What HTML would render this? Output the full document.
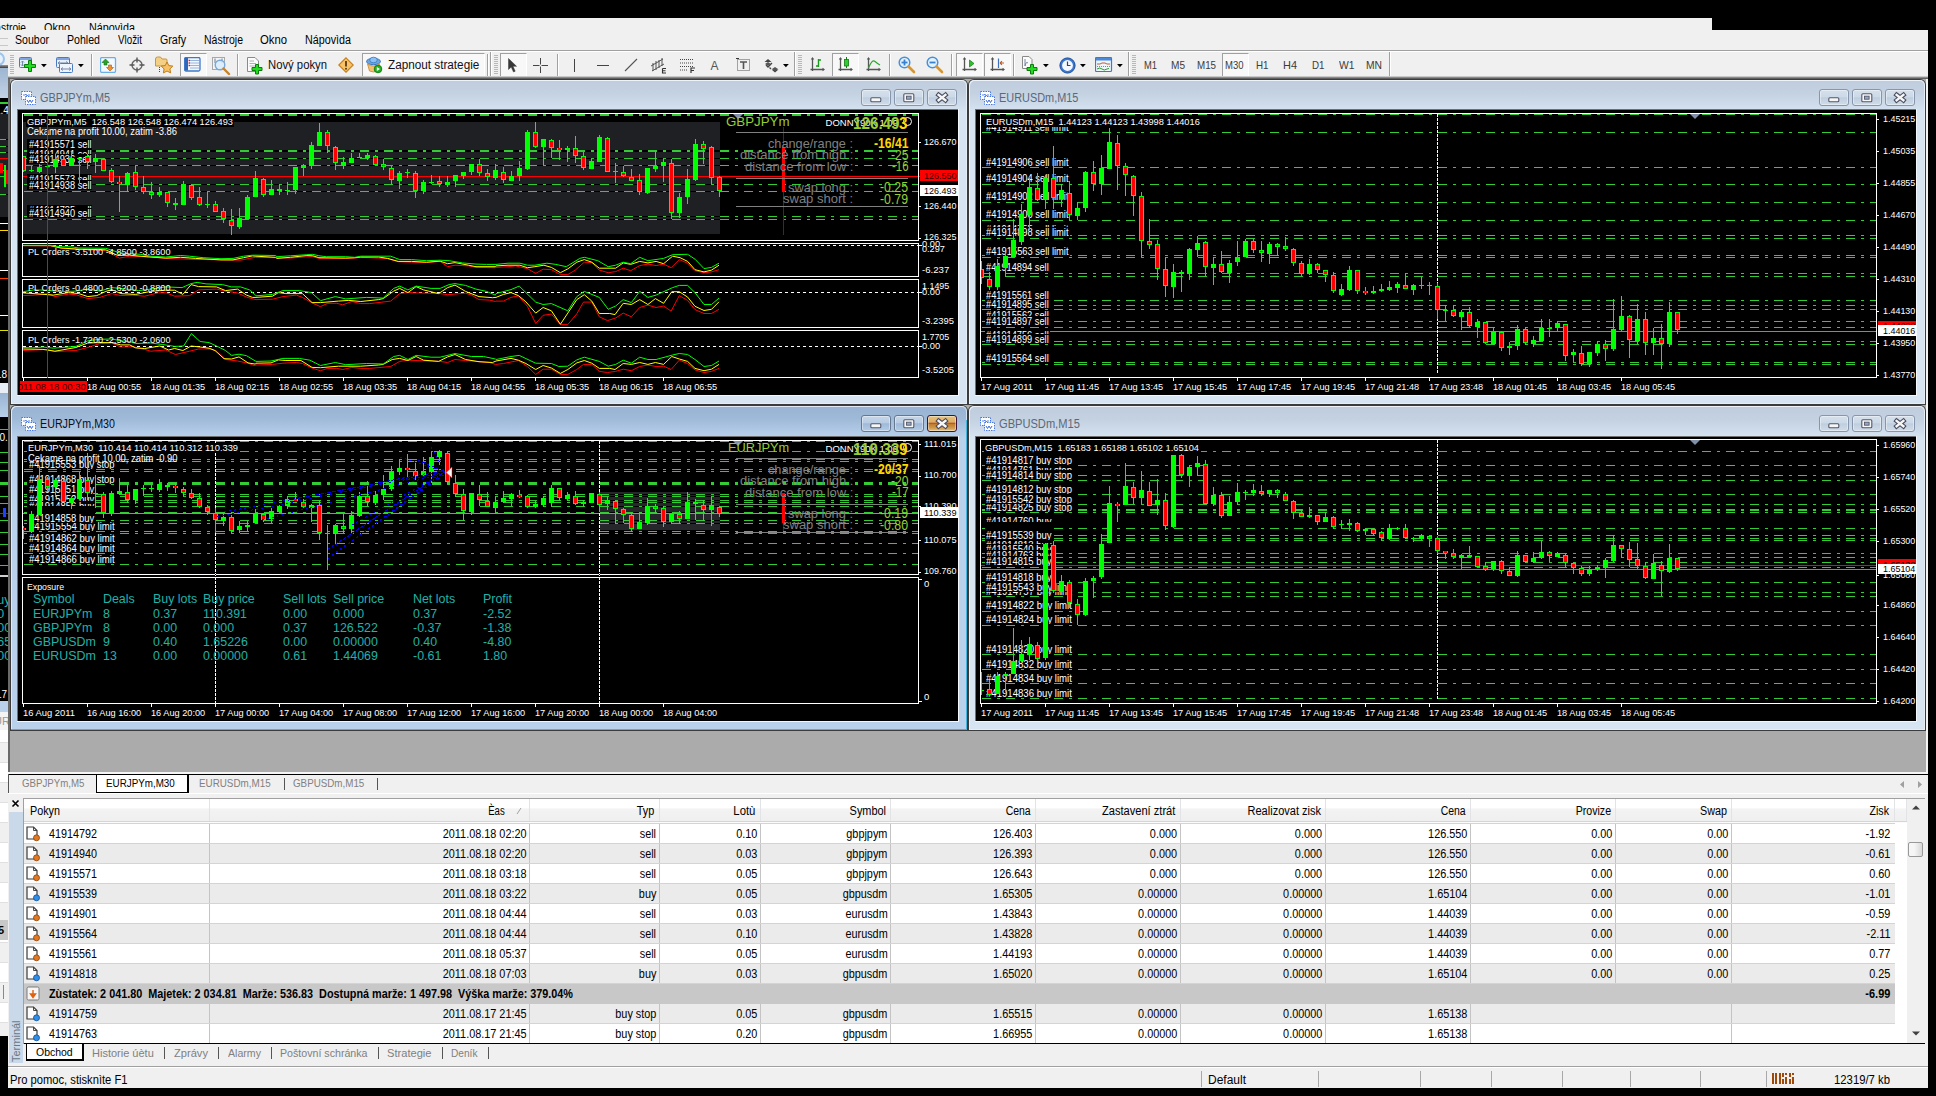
<!DOCTYPE html>
<html><head><meta charset="utf-8"><title>MT4</title>
<style>
html,body{margin:0;padding:0;background:#000;}
body{width:1936px;height:1096px;position:relative;overflow:hidden;font-family:"Liberation Sans",sans-serif;}
body div, body svg{position:absolute;box-sizing:border-box;}
svg{overflow:hidden;display:block}
</style></head><body>
<div style="left:0px;top:0px;width:1936px;height:1096px;background:#000;"></div>
<div style="left:0px;top:18px;width:1712px;height:12px;background:#f0f0f0;"></div>
<div style="left:0;top:18px;width:1712px;height:12px;overflow:hidden">
<div style="top:3px;height:14px;line-height:14px;font-size:12px;color:#000;white-space:pre;left:-12.00px;transform-origin:0 50%;transform:scaleX(0.8504);">Nástroje</div>
<div style="top:3px;height:14px;line-height:14px;font-size:12px;color:#000;white-space:pre;left:44.00px;transform-origin:0 50%;transform:scaleX(0.9065);">Okno</div>
<div style="top:3px;height:14px;line-height:14px;font-size:12px;color:#000;white-space:pre;left:89.00px;transform-origin:0 50%;transform:scaleX(0.8955);">Nápovìda</div>
</div>
<div style="left:0px;top:30px;width:8px;height:1058px;background:#f0f0f0;"></div>
<div style="left:8px;top:30px;width:1920px;height:1058px;background:#f0f0f0;"></div>
<div style="top:33px;height:14px;line-height:14px;font-size:12px;color:#000;white-space:pre;left:15.00px;transform-origin:0 50%;transform:scaleX(0.8787);">Soubor</div>
<div style="top:33px;height:14px;line-height:14px;font-size:12px;color:#000;white-space:pre;left:67.00px;transform-origin:0 50%;transform:scaleX(0.8832);">Pohled</div>
<div style="top:33px;height:14px;line-height:14px;font-size:12px;color:#000;white-space:pre;left:118.00px;transform-origin:0 50%;transform:scaleX(0.8179);">Vložit</div>
<div style="top:33px;height:14px;line-height:14px;font-size:12px;color:#000;white-space:pre;left:160.00px;transform-origin:0 50%;transform:scaleX(0.8862);">Grafy</div>
<div style="top:33px;height:14px;line-height:14px;font-size:12px;color:#000;white-space:pre;left:204.00px;transform-origin:0 50%;transform:scaleX(0.8728);">Nástroje</div>
<div style="top:33px;height:14px;line-height:14px;font-size:12px;color:#000;white-space:pre;left:260.00px;transform-origin:0 50%;transform:scaleX(0.9414);">Okno</div>
<div style="top:33px;height:14px;line-height:14px;font-size:12px;color:#000;white-space:pre;left:305.00px;transform-origin:0 50%;transform:scaleX(0.8955);">Nápovìda</div>
<div style="left:8px;top:50px;width:1920px;height:1px;background:#a0a0a0;"></div>
<div style="left:8px;top:51px;width:1920px;height:1px;background:#fff;"></div>
<div style="left:10px;top:55px;width:4px;height:1px;background:#b8b8b8;"></div>
<div style="left:10px;top:57px;width:4px;height:1px;background:#b8b8b8;"></div>
<div style="left:10px;top:59px;width:4px;height:1px;background:#b8b8b8;"></div>
<div style="left:10px;top:61px;width:4px;height:1px;background:#b8b8b8;"></div>
<div style="left:10px;top:63px;width:4px;height:1px;background:#b8b8b8;"></div>
<div style="left:10px;top:65px;width:4px;height:1px;background:#b8b8b8;"></div>
<div style="left:10px;top:67px;width:4px;height:1px;background:#b8b8b8;"></div>
<div style="left:10px;top:69px;width:4px;height:1px;background:#b8b8b8;"></div>
<div style="left:10px;top:71px;width:4px;height:1px;background:#b8b8b8;"></div>
<div style="left:10px;top:73px;width:4px;height:1px;background:#b8b8b8;"></div>
<svg style="left:19px;top:57px" width="18" height="17" viewBox="0 0 18 17"><rect x="0.5" y="0.5" width="12" height="10" rx="1" fill="#e4eefc" stroke="#4a7ac0"/><rect x="1" y="1" width="11" height="2" fill="#7fa6e0"/><path d="M3.5 4 V9 M2 5.5 L3.5 4 L5 5.5 M2 7.5 L3.5 9 L5 7.5" stroke="#7888a8" fill="none" stroke-width="1"/><path d="M8.5 5 h4 v-0 M10 3.5" stroke="none"/><path d="M9.5 3.5 h3 v4 h4 v3 h-4 v4 h-3 v-4 h-4 v-3 h4 z" fill="#1fdc1f" stroke="#0d7a0d" stroke-width="1"/></svg>
<svg style="left:41px;top:64px" width="6" height="4" viewBox="0 0 6 4"><path d="M0 0 L5.8 0 L2.9 3.3 Z" fill="#000"/></svg>
<svg style="left:56px;top:57px" width="18" height="17" viewBox="0 0 18 17"><rect x="0.5" y="0.5" width="13" height="10" rx="1" fill="#e4eefc" stroke="#4a7ac0"/><rect x="1" y="1" width="12" height="2" fill="#7fa6e0"/><path d="M2 6 H12 M2 6 l2 -1.5 M2 6 l2 1.5 M12 6 l-2 -1.5 M12 6 l-2 1.5" stroke="#7888a8" fill="none"/><rect x="3.5" y="6.5" width="13" height="9" rx="1" fill="#eef4fd" stroke="#4a7ac0"/><path d="M5 12 H15 M5 12 l2 -1.5 M5 12 l2 1.5 M15 12 l-2 -1.5 M15 12 l-2 1.5" stroke="#7888a8" fill="none"/></svg>
<svg style="left:78px;top:64px" width="6" height="4" viewBox="0 0 6 4"><path d="M0 0 L5.8 0 L2.9 3.3 Z" fill="#000"/></svg>
<div style="left:91px;top:54px;width:1px;height:22px;background:#a0a0a0;"></div>
<div style="left:92px;top:54px;width:1px;height:22px;background:#ffffff;"></div>
<svg style="left:100px;top:57px" width="17" height="16" viewBox="0 0 17 16"><rect x="0.5" y="0.5" width="15" height="15" rx="1.5" fill="#f4f9ff" stroke="#6ab0e8" stroke-width="1.3"/><path d="M5.5 2 L9 5.5 H7 V8 H4 V5.5 H2 Z" fill="#28a428" stroke="#157015" stroke-width=".6"/><path d="M10 14 L6.5 10.5 H8.5 V8 H11.5 V10.5 H13.5 Z" fill="#f09030" stroke="#a85a10" stroke-width=".6"/></svg>
<svg style="left:129px;top:57px" width="16" height="16" viewBox="0 0 16 16"><circle cx="8" cy="8" r="5" fill="none" stroke="#666" stroke-width="1.4"/><path d="M8 0.5 V5.5 M8 10.5 V15.5 M0.5 8 H5.5 M10.5 8 H15.5" stroke="#555" stroke-width="1.4"/></svg>
<svg style="left:155px;top:56px" width="19" height="18" viewBox="0 0 19 18"><path d="M0.5 3 q0 -2 2 -2 h3 l1.5 2 h4 q1 0 1 1 v6 h-11.5 z" fill="#f4cf86" stroke="#c8963c" stroke-width="1"/><path d="M12 6 l1.8 3.6 4 .5 -2.9 2.8 .7 4 -3.6 -1.9 -3.6 1.9 .7 -4 -2.9 -2.8 4 -.5 z" fill="#f6c265" stroke="#c07c1c" stroke-width="1"/><path d="M4.5 11 V17" stroke="#444" stroke-dasharray="1 1"/></svg>
<div style="left:180px;top:53px;width:25px;height:22px;background:#f8f8f8;border-left:1px solid #a0a0a0;border-top:1px solid #a0a0a0;border-right:1px solid #fff;border-bottom:1px solid #fff;box-sizing:content-box"></div>
<svg style="left:184px;top:57px" width="17" height="15" viewBox="0 0 17 15"><rect x="0.5" y="0.5" width="15.5" height="13.5" rx="1.5" fill="#f2f7ff" stroke="#3e78c8" stroke-width="1.3"/><rect x="1" y="1" width="3" height="12.5" fill="#3068b8"/><path d="M6 3.5 H15 M6 6 H15 M6 8.5 H15 M6 11 H15" stroke="#9ab4d8" stroke-width="1"/><rect x="4.6" y="2.8" width="1.4" height="1.4" fill="#e02020"/><rect x="4.6" y="5.3" width="1.4" height="1.4" fill="#e02020"/><rect x="4.6" y="7.8" width="1.4" height="1.4" fill="#e02020"/></svg>
<svg style="left:212px;top:57px" width="19" height="18" viewBox="0 0 19 18"><rect x="0.5" y="0.5" width="12" height="12" fill="#f4f4f4" stroke="#a8a8a8"/><path d="M3 1.5 V6 M10 1.5 V6" stroke="#6a7a9a"/><circle cx="8" cy="8" r="4.8" fill="#d8ecfa" fill-opacity=".85" stroke="#78a8d8" stroke-width="1.4"/><path d="M11.5 11.5 L17 17" stroke="#c8842c" stroke-width="2.4" stroke-linecap="round"/></svg>
<div style="left:237px;top:54px;width:1px;height:22px;background:#a0a0a0;"></div>
<div style="left:238px;top:54px;width:1px;height:22px;background:#ffffff;"></div>
<svg style="left:247px;top:57px" width="17" height="18" viewBox="0 0 17 18"><path d="M0.5 0.5 H8 L11.5 4 V14.5 H0.5 Z" fill="#fbfbfb" stroke="#8a8a8a"/><path d="M2.5 4 H7 M2.5 6.5 H9 M2.5 9 H9" stroke="#b0b0b0"/><path d="M8.5 7.5 h3 v3 h3.5 v3 h-3.5 v3.5 h-3 v-3.5 h-3.5 v-3 h3.5 z" fill="#1fdc1f" stroke="#0d7a0d"/></svg>
<div style="top:58px;height:14px;line-height:14px;font-size:12px;color:#101018;white-space:pre;left:268.20px;transform-origin:0 50%;transform:scaleX(0.9411);">Nový pokyn</div>
<svg style="left:338px;top:57px" width="16" height="16" viewBox="0 0 16 16"><path d="M8 0.8 L15.2 8 L8 15.2 L0.8 8 Z" fill="#f7c46c" stroke="#c8801c" stroke-width="1.2"/><path d="M8 4 V9.5" stroke="#5a3a10" stroke-width="1.8"/><circle cx="8" cy="11.8" r="1" fill="#5a3a10"/></svg>
<div style="left:362px;top:53px;width:121px;height:22px;background:#f8f8f8;border-left:1px solid #a0a0a0;border-top:1px solid #a0a0a0;border-right:1px solid #fff;border-bottom:1px solid #fff;box-sizing:content-box"></div>
<svg style="left:366px;top:56px" width="17" height="18" viewBox="0 0 17 18"><ellipse cx="7.5" cy="5.5" rx="7" ry="3.2" fill="#6aa6e4" stroke="#3a78c0"/><ellipse cx="7.5" cy="4" rx="3.8" ry="2.8" fill="#8cc0f0" stroke="#3a78c0" stroke-width=".8"/><path d="M1.5 8 Q7.5 12 13.5 8 L11.5 15 Q7.5 17 3.5 15 Z" fill="#f4c070" stroke="#c88830" stroke-width=".8"/><circle cx="12" cy="13" r="3.8" fill="#22b022" stroke="#0a700a" stroke-width=".8"/><path d="M10.8 11 L14 13 L10.8 15 Z" fill="#fff"/></svg>
<div style="top:58px;height:14px;line-height:14px;font-size:12px;color:#101018;white-space:pre;left:388.40px;transform-origin:0 50%;transform:scaleX(0.9776);">Zapnout strategie</div>
<div style="left:487px;top:54px;width:1px;height:22px;background:#a0a0a0;"></div>
<div style="left:488px;top:54px;width:1px;height:22px;background:#ffffff;"></div>
<div style="left:490px;top:52px;width:1px;height:26px;background:#a0a0a0;"></div>
<div style="left:491px;top:52px;width:1px;height:26px;background:#fff;"></div>
<div style="left:494px;top:55px;width:4px;height:1px;background:#b8b8b8;"></div>
<div style="left:494px;top:57px;width:4px;height:1px;background:#b8b8b8;"></div>
<div style="left:494px;top:59px;width:4px;height:1px;background:#b8b8b8;"></div>
<div style="left:494px;top:61px;width:4px;height:1px;background:#b8b8b8;"></div>
<div style="left:494px;top:63px;width:4px;height:1px;background:#b8b8b8;"></div>
<div style="left:494px;top:65px;width:4px;height:1px;background:#b8b8b8;"></div>
<div style="left:494px;top:67px;width:4px;height:1px;background:#b8b8b8;"></div>
<div style="left:494px;top:69px;width:4px;height:1px;background:#b8b8b8;"></div>
<div style="left:494px;top:71px;width:4px;height:1px;background:#b8b8b8;"></div>
<div style="left:494px;top:73px;width:4px;height:1px;background:#b8b8b8;"></div>
<div style="left:500px;top:53px;width:25px;height:22px;background:#f8f8f8;border-left:1px solid #a0a0a0;border-top:1px solid #a0a0a0;border-right:1px solid #fff;border-bottom:1px solid #fff;box-sizing:content-box"></div>
<svg style="left:508px;top:58px" width="9" height="15" viewBox="0 0 9 15"><path d="M0.5 0.5 V11.5 L3.2 9 L5.5 14 L7.2 13.2 L5 8.3 H8.5 Z" fill="#383838" stroke="#383838" stroke-width=".5"/></svg>
<svg style="left:533px;top:58px" width="15" height="15" viewBox="0 0 15 15"><path d="M7.5 0 V15 M0 7.5 H15" stroke="#444" stroke-width="1"/><rect x="6.5" y="6.5" width="2" height="2" fill="#f0f0f0"/></svg>
<div style="left:557px;top:54px;width:1px;height:22px;background:#a0a0a0;"></div>
<div style="left:558px;top:54px;width:1px;height:22px;background:#ffffff;"></div>
<div style="left:574px;top:59px;width:1px;height:13px;background:#444;"></div>
<div style="left:597px;top:65px;width:12px;height:1px;background:#444;"></div>
<svg style="left:624px;top:58px" width="14" height="14" viewBox="0 0 14 14"><path d="M1 13 L13 1" stroke="#555" stroke-width="1.1"/></svg>
<svg style="left:650px;top:57px" width="17" height="17" viewBox="0 0 17 17"><path d="M1 9 L13 2 M2 14 L14 7" stroke="#555" stroke-width="1"/><path d="M3 6 V14 M6 4 V13 M9 3 V11 M12 1 V9" stroke="#555" stroke-width="1"/><path d="M12.5 11.5 H16 M12.5 11.5 V16 H16 M12.5 13.7 H15.5" stroke="#333" stroke-width="1.1" fill="none"/></svg>
<svg style="left:680px;top:57px" width="16" height="17" viewBox="0 0 16 17"><path d="M0 2.5 H13 M0 6 H13 M0 9.5 H13 M0 13 H8" stroke="#444" stroke-width="1" stroke-dasharray="1 1"/><path d="M11 16 V11 H15 M11 13.5 H14" stroke="#333" stroke-width="1.2" fill="none"/></svg>
<div style="top:59px;height:14px;line-height:14px;font-size:12px;color:#555;white-space:pre;left:710.50px;transform-origin:0 50%;">A</div>
<svg style="left:736px;top:58px" width="15" height="14" viewBox="0 0 15 14"><rect x="1.5" y="1.5" width="12" height="11" fill="none" stroke="#555" stroke-dasharray="1 1"/><path d="M4 4 H11 M7.5 4 V11" stroke="#555" stroke-width="1.6"/><rect x="0" y="0" width="3" height="1" fill="#333"/></svg>
<svg style="left:764px;top:59px" width="15" height="14" viewBox="0 0 15 14"><path d="M4 0 L7.5 3 H0.5 Z M11 13.5 L14.5 10.5 H7.5 Z" fill="#444"/><path d="M2 6 l2 2 4 -4 M7 10 l-1.5 -1.5" stroke="#444" stroke-width="1.3" fill="none"/><path d="M4 3 L7 5 4 7 1 5Z M11 8 l3 2 -3 2 -3 -2z" fill="#555"/></svg>
<svg style="left:783px;top:64px" width="6" height="4" viewBox="0 0 6 4"><path d="M0 0 L5.8 0 L2.9 3.3 Z" fill="#000"/></svg>
<div style="left:794px;top:52px;width:1px;height:26px;background:#a0a0a0;"></div>
<div style="left:795px;top:52px;width:1px;height:26px;background:#fff;"></div>
<div style="left:798px;top:55px;width:4px;height:1px;background:#b8b8b8;"></div>
<div style="left:798px;top:57px;width:4px;height:1px;background:#b8b8b8;"></div>
<div style="left:798px;top:59px;width:4px;height:1px;background:#b8b8b8;"></div>
<div style="left:798px;top:61px;width:4px;height:1px;background:#b8b8b8;"></div>
<div style="left:798px;top:63px;width:4px;height:1px;background:#b8b8b8;"></div>
<div style="left:798px;top:65px;width:4px;height:1px;background:#b8b8b8;"></div>
<div style="left:798px;top:67px;width:4px;height:1px;background:#b8b8b8;"></div>
<div style="left:798px;top:69px;width:4px;height:1px;background:#b8b8b8;"></div>
<div style="left:798px;top:71px;width:4px;height:1px;background:#b8b8b8;"></div>
<div style="left:798px;top:73px;width:4px;height:1px;background:#b8b8b8;"></div>
<svg style="left:810px;top:57px" width="16" height="16" viewBox="0 0 16 16"><path d="M2.5 1 V14 M0.5 12.5 H14" stroke="#555" stroke-width="1.3" fill="none"/><path d="M2.5 0 L0.8 2.5 H4.2 Z M15 12.5 L12.5 10.8 V14.2 Z" fill="#555"/><path d="M8.5 2 V10 M8.5 3 H11 M6 9 H8.5" stroke="#1a9a1a" stroke-width="1.4" fill="none"/></svg>
<div style="left:832px;top:53px;width:25px;height:22px;background:#f8f8f8;border-left:1px solid #a0a0a0;border-top:1px solid #a0a0a0;border-right:1px solid #fff;border-bottom:1px solid #fff;box-sizing:content-box"></div>
<svg style="left:838px;top:57px" width="16" height="16" viewBox="0 0 16 16"><path d="M2.5 1 V14 M0.5 12.5 H14" stroke="#555" stroke-width="1.3" fill="none"/><path d="M2.5 0 L0.8 2.5 H4.2 Z M15 12.5 L12.5 10.8 V14.2 Z" fill="#555"/><path d="M8.5 0 V11" stroke="#157815" stroke-width="1"/><rect x="6.5" y="2.5" width="4" height="6.5" fill="#2ecc2e" stroke="#157815" stroke-width=".8"/></svg>
<svg style="left:866px;top:57px" width="16" height="16" viewBox="0 0 16 16"><path d="M2.5 1 V14 M0.5 12.5 H14" stroke="#555" stroke-width="1.3" fill="none"/><path d="M2.5 0 L0.8 2.5 H4.2 Z M15 12.5 L12.5 10.8 V14.2 Z" fill="#555"/><path d="M2.5 11 Q6 2 9 4.5 T14 8" stroke="#2aaa2a" stroke-width="1.2" fill="none"/></svg>
<div style="left:889px;top:54px;width:1px;height:22px;background:#a0a0a0;"></div>
<div style="left:890px;top:54px;width:1px;height:22px;background:#ffffff;"></div>
<svg style="left:898px;top:56px" width="18" height="18" viewBox="0 0 18 18"><circle cx="6.5" cy="6.5" r="5.3" fill="#e4f2fc" stroke="#4a90d8" stroke-width="1.5"/><path d="M10.5 10.5 L16 16" stroke="#d8962c" stroke-width="2.6" stroke-linecap="round"/><path d="M3.5 6.5 H9.5" stroke="#3a80d0" stroke-width="1.8"/><path d="M6.5 3.5 V9.5" stroke="#3a80d0" stroke-width="1.8"/></svg>
<svg style="left:926px;top:56px" width="18" height="18" viewBox="0 0 18 18"><circle cx="6.5" cy="6.5" r="5.3" fill="#e4f2fc" stroke="#4a90d8" stroke-width="1.5"/><path d="M10.5 10.5 L16 16" stroke="#d8962c" stroke-width="2.6" stroke-linecap="round"/><path d="M3.5 6.5 H9.5" stroke="#3a80d0" stroke-width="1.8"/></svg>
<div style="left:951px;top:54px;width:1px;height:22px;background:#a0a0a0;"></div>
<div style="left:952px;top:54px;width:1px;height:22px;background:#ffffff;"></div>
<div style="left:956px;top:53px;width:25px;height:22px;background:#f8f8f8;border-left:1px solid #a0a0a0;border-top:1px solid #a0a0a0;border-right:1px solid #fff;border-bottom:1px solid #fff;box-sizing:content-box"></div>
<svg style="left:962px;top:57px" width="16" height="16" viewBox="0 0 16 16"><path d="M2.5 1 V14 M0.5 12.5 H14" stroke="#555" stroke-width="1.3" fill="none"/><path d="M2.5 0 L0.8 2.5 H4.2 Z M15 12.5 L12.5 10.8 V14.2 Z" fill="#555"/><path d="M7.5 3 L12 6.5 L7.5 10 Z" fill="#2cc02c" stroke="#157815" stroke-width=".7"/></svg>
<div style="left:984px;top:53px;width:25px;height:22px;background:#f8f8f8;border-left:1px solid #a0a0a0;border-top:1px solid #a0a0a0;border-right:1px solid #fff;border-bottom:1px solid #fff;box-sizing:content-box"></div>
<svg style="left:990px;top:57px" width="16" height="16" viewBox="0 0 16 16"><path d="M2.5 1 V14 M0.5 12.5 H14" stroke="#555" stroke-width="1.3" fill="none"/><path d="M2.5 0 L0.8 2.5 H4.2 Z M15 12.5 L12.5 10.8 V14.2 Z" fill="#555"/><path d="M8.5 1.5 V11" stroke="#3a70c0" stroke-width="1.2"/><path d="M14 6 H10 M10 6 l2 -1.8 M10 6 l2 1.8" stroke="#c05a1a" stroke-width="1.1" fill="none"/></svg>
<div style="left:1013px;top:54px;width:1px;height:22px;background:#a0a0a0;"></div>
<div style="left:1014px;top:54px;width:1px;height:22px;background:#ffffff;"></div>
<svg style="left:1022px;top:56px" width="17" height="19" viewBox="0 0 17 19"><path d="M0.5 0.5 H7 L10 3.5 V12.5 H0.5 Z" fill="#fbfbfb" stroke="#8a8a8a"/><path d="M3 3 v7 M3 10 q1 -5 3 -3" stroke="#6a7a9a" fill="none" stroke-width=".9"/><path d="M8.5 8.5 h3 v3 h3.5 v3 h-3.5 v3.5 h-3 v-3.5 h-3.5 v-3 h3.5 z" fill="#1fdc1f" stroke="#0d7a0d"/></svg>
<svg style="left:1043px;top:64px" width="6" height="4" viewBox="0 0 6 4"><path d="M0 0 L5.8 0 L2.9 3.3 Z" fill="#000"/></svg>
<svg style="left:1059px;top:57px" width="17" height="17" viewBox="0 0 17 17"><circle cx="8.5" cy="8.5" r="7.6" fill="#3a78d0" stroke="#1c4c98"/><circle cx="8.5" cy="8.5" r="5.4" fill="#f4f8ff"/><path d="M8.5 4.5 V8.5 H11.5" stroke="#444" stroke-width="1.2" fill="none"/></svg>
<svg style="left:1080px;top:64px" width="6" height="4" viewBox="0 0 6 4"><path d="M0 0 L5.8 0 L2.9 3.3 Z" fill="#000"/></svg>
<svg style="left:1095px;top:57px" width="18" height="16" viewBox="0 0 18 16"><rect x="0.5" y="0.5" width="16" height="14" rx="1" fill="#eef5fd" stroke="#3e78c8" stroke-width="1.2"/><rect x="1" y="1" width="15" height="2.5" fill="#4a88d8"/><path d="M2 7 h3 l2 -1 h3 l2 1 h3" stroke="#c85a28" fill="none"/><path d="M2 9.5 h13" stroke="#888" stroke-dasharray="1 1"/><path d="M2 12 q3 -2 5 0 t5 0 l2 -.5" stroke="#2a9a2a" fill="none"/></svg>
<svg style="left:1117px;top:64px" width="6" height="4" viewBox="0 0 6 4"><path d="M0 0 L5.8 0 L2.9 3.3 Z" fill="#000"/></svg>
<div style="left:1128px;top:52px;width:1px;height:26px;background:#a0a0a0;"></div>
<div style="left:1129px;top:52px;width:1px;height:26px;background:#fff;"></div>
<div style="left:1132px;top:55px;width:4px;height:1px;background:#b8b8b8;"></div>
<div style="left:1132px;top:57px;width:4px;height:1px;background:#b8b8b8;"></div>
<div style="left:1132px;top:59px;width:4px;height:1px;background:#b8b8b8;"></div>
<div style="left:1132px;top:61px;width:4px;height:1px;background:#b8b8b8;"></div>
<div style="left:1132px;top:63px;width:4px;height:1px;background:#b8b8b8;"></div>
<div style="left:1132px;top:65px;width:4px;height:1px;background:#b8b8b8;"></div>
<div style="left:1132px;top:67px;width:4px;height:1px;background:#b8b8b8;"></div>
<div style="left:1132px;top:69px;width:4px;height:1px;background:#b8b8b8;"></div>
<div style="left:1132px;top:71px;width:4px;height:1px;background:#b8b8b8;"></div>
<div style="left:1132px;top:73px;width:4px;height:1px;background:#b8b8b8;"></div>
<div style="left:1222px;top:53px;width:25px;height:22px;background:#f8f8f8;border-left:1px solid #a0a0a0;border-top:1px solid #a0a0a0;border-right:1px solid #fff;border-bottom:1px solid #fff;box-sizing:content-box"></div>
<div style="top:59px;height:13px;line-height:13px;font-size:10.5px;color:#3c3c3c;white-space:pre;left:1144.00px;transform-origin:0 50%;transform:scaleX(0.8912);">M1</div>
<div style="top:59px;height:13px;line-height:13px;font-size:10.5px;color:#3c3c3c;white-space:pre;left:1171.00px;transform-origin:0 50%;transform:scaleX(0.9598);">M5</div>
<div style="top:59px;height:13px;line-height:13px;font-size:10.5px;color:#3c3c3c;white-space:pre;left:1197.00px;transform-origin:0 50%;transform:scaleX(0.9302);">M15</div>
<div style="top:59px;height:13px;line-height:13px;font-size:10.5px;color:#3c3c3c;white-space:pre;left:1225.00px;transform-origin:0 50%;transform:scaleX(0.9057);">M30</div>
<div style="top:59px;height:13px;line-height:13px;font-size:10.5px;color:#3c3c3c;white-space:pre;left:1256.00px;transform-origin:0 50%;transform:scaleX(0.9312);">H1</div>
<div style="top:59px;height:13px;line-height:13px;font-size:10.5px;color:#3c3c3c;white-space:pre;left:1283.00px;transform-origin:0 50%;transform:scaleX(1.0430);">H4</div>
<div style="top:59px;height:13px;line-height:13px;font-size:10.5px;color:#3c3c3c;white-space:pre;left:1312.00px;transform-origin:0 50%;transform:scaleX(0.9312);">D1</div>
<div style="top:59px;height:13px;line-height:13px;font-size:10.5px;color:#3c3c3c;white-space:pre;left:1339.00px;transform-origin:0 50%;transform:scaleX(0.9841);">W1</div>
<div style="top:59px;height:13px;line-height:13px;font-size:10.5px;color:#3c3c3c;white-space:pre;left:1366.00px;transform-origin:0 50%;transform:scaleX(0.9798);">MN</div>
<div style="left:1389px;top:52px;width:1px;height:26px;background:#a0a0a0;"></div>
<div style="left:1390px;top:52px;width:1px;height:26px;background:#ffffff;"></div>
<div style="left:0px;top:38px;width:8px;height:1px;background:#c8c8c8;"></div>
<div style="left:0px;top:45px;width:8px;height:1px;background:#c8c8c8;"></div>
<div style="left:0px;top:50px;width:8px;height:1px;background:#a0a0a0;"></div>
<div style="left:-9px;top:52px;width:14px;height:14px;border-radius:50%;border:2px solid #9cc4ec;background:#e4f0fc"></div>
<div style="left:0;top:65px;width:8px;height:3px;background:linear-gradient(#9a9a9a,#3a3a3a)"></div>
<div style="left:0;top:68px;width:8px;height:30px;background:linear-gradient(#9db5d0,#c3d3e5)"></div>
<div style="left:0px;top:98px;width:8px;height:285px;background:#000;"></div>
<div style="left:0px;top:114px;width:8px;height:103px;background:#1f2024;"></div>
<div style="left:0px;top:102px;width:8px;height:2px;background:#32cd32;"></div>
<div style="left:0px;top:139px;width:8px;height:1px;background:#000;"></div>
<div style="left:0px;top:139px;width:6px;height:1px;background:#32cd32;"></div>
<div style="left:0px;top:146px;width:8px;height:1px;background:#000;"></div>
<div style="left:0px;top:146px;width:6px;height:1px;background:#32cd32;"></div>
<div style="left:0px;top:152px;width:8px;height:1px;background:#000;"></div>
<div style="left:0px;top:152px;width:6px;height:1px;background:#32cd32;"></div>
<div style="left:0px;top:170px;width:8px;height:1px;background:#000;"></div>
<div style="left:0px;top:170px;width:6px;height:1px;background:#32cd32;"></div>
<div style="left:0px;top:176px;width:8px;height:1px;background:#000;"></div>
<div style="left:0px;top:176px;width:6px;height:1px;background:#32cd32;"></div>
<div style="left:0px;top:194px;width:8px;height:1px;background:#000;"></div>
<div style="left:0px;top:194px;width:6px;height:1px;background:#32cd32;"></div>
<div style="left:0px;top:158px;width:8px;height:1px;background:#ff0000;"></div>
<div style="left:0px;top:163px;width:3px;height:10px;background:#ff0000;"></div>
<div style="left:6px;top:170px;width:2px;height:14px;background:#ff0000;"></div>
<div style="left:4px;top:165px;width:2px;height:22px;background:#00ff00;"></div>
<div style="left:0px;top:223px;width:8px;height:1px;background:#fff;"></div>
<div style="left:0px;top:270px;width:8px;height:1px;background:#fff;"></div>
<div style="left:0px;top:315px;width:8px;height:1px;background:#fff;"></div>
<div style="left:0px;top:230px;width:8px;height:1px;background:#ffd700;"></div>
<div style="left:0px;top:278px;width:8px;height:1px;background:#ff4000;"></div>
<div style="left:0px;top:330px;width:8px;height:1px;background:#e0e000;"></div>
<div style="top:105px;height:12px;line-height:12px;font-size:10px;color:#fff;white-space:pre;left:-5.00px;transform-origin:0 50%;">1.4</div>
<div style="top:369px;height:12px;line-height:12px;font-size:10px;color:#fff;white-space:pre;left:-4.00px;transform-origin:0 50%;">18</div>
<div style="left:0px;top:383px;width:8px;height:10px;background:#e8eef6;"></div>
<div style="left:0;top:393px;width:8px;height:24px;background:linear-gradient(#98b4d2,#b9d1ea)"></div>
<div style="left:0px;top:417px;width:8px;height:284px;background:#000;"></div>
<div style="top:432px;height:12px;line-height:12px;font-size:10px;color:#fff;white-space:pre;left:-6.00px;transform-origin:0 50%;">10.</div>
<div style="left:0px;top:429px;width:8px;height:1px;background:#32cd32;"></div>
<div style="left:0px;top:452px;width:8px;height:1px;background:#32cd32;"></div>
<div style="left:0px;top:462px;width:8px;height:1px;background:#32cd32;"></div>
<div style="left:0px;top:470px;width:8px;height:1px;background:#32cd32;"></div>
<div style="left:0px;top:484px;width:8px;height:1px;background:#32cd32;"></div>
<div style="left:0px;top:496px;width:8px;height:1px;background:#32cd32;"></div>
<div style="left:0px;top:503px;width:8px;height:1px;background:#32cd32;"></div>
<div style="left:0px;top:520px;width:8px;height:1px;background:#32cd32;"></div>
<div style="left:0px;top:532px;width:8px;height:1px;background:#32cd32;"></div>
<div style="left:0px;top:544px;width:8px;height:1px;background:#32cd32;"></div>
<div style="left:0px;top:554px;width:8px;height:1px;background:#32cd32;"></div>
<div style="left:0px;top:565px;width:8px;height:1px;background:#32cd32;"></div>
<div style="left:0px;top:482px;width:8px;height:3px;background:#32cd32;"></div>
<div style="left:0px;top:513px;width:8px;height:1px;background:#ff0000;"></div>
<div style="left:3px;top:508px;width:3px;height:9px;background:#2040ff;"></div>
<div style="left:0px;top:575px;width:8px;height:2px;background:#d0d0d0;"></div>
<div style="top:592px;height:15px;line-height:15px;font-size:13px;color:#20b2aa;white-space:pre;left:-3.00px;transform-origin:0 50%;">uy</div>
<div style="top:606px;height:15px;line-height:15px;font-size:13px;color:#20b2aa;white-space:pre;left:-3.00px;transform-origin:0 50%;">0</div>
<div style="top:620px;height:15px;line-height:15px;font-size:13px;color:#20b2aa;white-space:pre;left:-3.00px;transform-origin:0 50%;">00</div>
<div style="top:634px;height:15px;line-height:15px;font-size:13px;color:#20b2aa;white-space:pre;left:-3.00px;transform-origin:0 50%;">65</div>
<div style="top:648px;height:15px;line-height:15px;font-size:13px;color:#20b2aa;white-space:pre;left:-3.00px;transform-origin:0 50%;">00</div>
<div style="top:689px;height:12px;line-height:12px;font-size:10px;color:#fff;white-space:pre;left:-4.00px;transform-origin:0 50%;">17</div>
<div style="left:0px;top:701px;width:8px;height:11px;background:#b9d1ea;"></div>
<div style="left:0px;top:712px;width:8px;height:18px;background:#f4f4f4;"></div>
<div style="top:715px;height:13px;line-height:13px;font-size:11px;color:#999;white-space:pre;left:-6.00px;transform-origin:0 50%;">URL</div>
<div style="left:0px;top:730px;width:8px;height:306px;background:#fff;"></div>
<div style="left:0px;top:742px;width:8px;height:20px;background:#f0f0f0;"></div>
<div style="left:0px;top:742px;width:8px;height:1px;background:#e0e0e0;"></div>
<div style="left:0px;top:762px;width:8px;height:20px;background:#fff;"></div>
<div style="left:0px;top:762px;width:8px;height:1px;background:#e0e0e0;"></div>
<div style="left:0px;top:782px;width:8px;height:20px;background:#f0f0f0;"></div>
<div style="left:0px;top:782px;width:8px;height:1px;background:#e0e0e0;"></div>
<div style="left:0px;top:802px;width:8px;height:20px;background:#fff;"></div>
<div style="left:0px;top:802px;width:8px;height:1px;background:#e0e0e0;"></div>
<div style="left:0px;top:822px;width:8px;height:20px;background:#f0f0f0;"></div>
<div style="left:0px;top:822px;width:8px;height:1px;background:#e0e0e0;"></div>
<div style="left:0px;top:842px;width:8px;height:20px;background:#fff;"></div>
<div style="left:0px;top:842px;width:8px;height:1px;background:#e0e0e0;"></div>
<div style="left:0px;top:862px;width:8px;height:20px;background:#f0f0f0;"></div>
<div style="left:0px;top:862px;width:8px;height:1px;background:#e0e0e0;"></div>
<div style="left:0px;top:882px;width:8px;height:20px;background:#fff;"></div>
<div style="left:0px;top:882px;width:8px;height:1px;background:#e0e0e0;"></div>
<div style="left:0px;top:902px;width:8px;height:20px;background:#f0f0f0;"></div>
<div style="left:0px;top:902px;width:8px;height:1px;background:#e0e0e0;"></div>
<div style="left:0px;top:922px;width:8px;height:20px;background:#fff;"></div>
<div style="left:0px;top:922px;width:8px;height:1px;background:#e0e0e0;"></div>
<div style="left:0px;top:942px;width:8px;height:20px;background:#f0f0f0;"></div>
<div style="left:0px;top:942px;width:8px;height:1px;background:#e0e0e0;"></div>
<div style="left:0px;top:962px;width:8px;height:20px;background:#fff;"></div>
<div style="left:0px;top:962px;width:8px;height:1px;background:#e0e0e0;"></div>
<div style="left:0px;top:982px;width:8px;height:20px;background:#f0f0f0;"></div>
<div style="left:0px;top:982px;width:8px;height:1px;background:#e0e0e0;"></div>
<div style="left:0px;top:1002px;width:8px;height:20px;background:#fff;"></div>
<div style="left:0px;top:1002px;width:8px;height:1px;background:#e0e0e0;"></div>
<div style="left:0px;top:1022px;width:8px;height:20px;background:#f0f0f0;"></div>
<div style="left:0px;top:1022px;width:8px;height:1px;background:#e0e0e0;"></div>
<div style="left:0px;top:920px;width:8px;height:20px;background:#c8c8c8;"></div>
<div style="top:924px;height:13px;line-height:13px;font-size:11px;color:#000;white-space:pre;font-weight:bold;left:-2.00px;transform-origin:0 50%;">5</div>
<div style="left:3px;top:985px;width:1px;height:14px;background:#888;"></div>
<div style="left:0px;top:1036px;width:8px;height:60px;background:#000;"></div>
<div style="left:8px;top:78px;width:1920px;height:694px;background:#ababab;"></div>
<div style="left:8px;top:76px;width:1920px;height:3px;background:linear-gradient(#e8e8e8,#8a8a8a 50%,#4a4a4a)"></div>
<div style="left:8px;top:79px;width:2px;height:693px;background:#6a6a6a;"></div>
<div style="left:10px;top:79px;width:958px;height:326px;background:#3c3c3c;border-radius:6px 6px 0 0"></div>
<div style="left:11px;top:80px;width:956px;height:324px;background:#d7e4f2;border-radius:5px 5px 0 0;box-shadow:inset 1px 1px 0 rgba(255,255,255,.55), inset -1px -1px 0 rgba(255,255,255,.35)"></div>
<div style="left:12px;top:81px;width:954px;height:31px;background:linear-gradient(#bfcdde 0px,#c3d1e1 12px,#cfdceb 24px,#d7e4f2 31px);border-radius:5px 5px 0 0"></div>
<svg style="left:21px;top:91px" width="15" height="14" viewBox="0 0 15 14"><rect x="0.5" y="0.5" width="10" height="8" fill="#fafcff" stroke="#4a78e0" stroke-dasharray="1.5 1"/><path d="M2 4 h2 l1 -1 l1 2 l1 -1 h2" stroke="#5a88e8" fill="none" stroke-width="1"/><rect x="4.5" y="5.5" width="10" height="8" fill="#ffffff" stroke="#4a78e0" stroke-dasharray="1.5 1"/><path d="M6 9 l1.5 2.5 l1.5 -2.5 l1.5 2.5 l1.5 -2.5" stroke="#3a68d8" fill="none" stroke-width="1"/></svg>
<div style="top:91px;height:14px;line-height:14px;font-size:12px;color:#5c6878;white-space:pre;left:40.00px;transform-origin:0 50%;transform:scaleX(0.9050);">GBPJPYm,M5</div>
<div style="left:861px;top:89px;width:30px;height:17px;border:1px solid #8796ac;border-radius:3px;background:linear-gradient(#d6e0ec 0%,#ccd9e7 45%,#bfcede 52%,#d0dcea 100%);box-shadow:inset 0 0 0 1px rgba(255,255,255,.4)"></div>
<svg style="left:870px;top:97px" width="12" height="6" viewBox="0 0 12 6"><rect x="0.8" y="0.8" width="10" height="4" rx="1" fill="#f6f6f6" stroke="#54586a" stroke-width="1.1"/></svg>
<div style="left:894px;top:89px;width:30px;height:17px;border:1px solid #8796ac;border-radius:3px;background:linear-gradient(#d6e0ec 0%,#ccd9e7 45%,#bfcede 52%,#d0dcea 100%);box-shadow:inset 0 0 0 1px rgba(255,255,255,.4)"></div>
<svg style="left:903px;top:93px" width="12" height="10" viewBox="0 0 12 10"><rect x="0.8" y="0.8" width="10" height="8" rx="1" fill="#f6f6f6" stroke="#54586a" stroke-width="1.1"/><rect x="3.5" y="3.2" width="4.6" height="3" fill="#92a9c6" stroke="#54586a" stroke-width="0.9"/></svg>
<div style="left:927px;top:89px;width:30px;height:17px;border:1px solid #8796ac;border-radius:3px;background:linear-gradient(#d6e0ec 0%,#ccd9e7 45%,#bfcede 52%,#d0dcea 100%);box-shadow:inset 0 0 0 1px rgba(255,255,255,.4)"></div>
<svg style="left:935px;top:91px" width="14" height="13" viewBox="0 0 14 13"><path d="M3.6 3.9 L10.4 9.3 M10.4 3.9 L3.6 9.3" stroke="#4a4d5e" stroke-width="4.6" stroke-linecap="square"/><path d="M3.6 3.9 L10.4 9.3 M10.4 3.9 L3.6 9.3" stroke="#f6f6f6" stroke-width="2.4" stroke-linecap="square"/></svg>
<div style="left:968px;top:79px;width:958px;height:326px;background:#3c3c3c;border-radius:6px 6px 0 0"></div>
<div style="left:969px;top:80px;width:956px;height:324px;background:#d7e4f2;border-radius:5px 5px 0 0;box-shadow:inset 1px 1px 0 rgba(255,255,255,.55), inset -1px -1px 0 rgba(255,255,255,.35)"></div>
<div style="left:970px;top:81px;width:954px;height:31px;background:linear-gradient(#bfcdde 0px,#c3d1e1 12px,#cfdceb 24px,#d7e4f2 31px);border-radius:5px 5px 0 0"></div>
<svg style="left:980px;top:91px" width="15" height="14" viewBox="0 0 15 14"><rect x="0.5" y="0.5" width="10" height="8" fill="#fafcff" stroke="#4a78e0" stroke-dasharray="1.5 1"/><path d="M2 4 h2 l1 -1 l1 2 l1 -1 h2" stroke="#5a88e8" fill="none" stroke-width="1"/><rect x="4.5" y="5.5" width="10" height="8" fill="#ffffff" stroke="#4a78e0" stroke-dasharray="1.5 1"/><path d="M6 9 l1.5 2.5 l1.5 -2.5 l1.5 2.5 l1.5 -2.5" stroke="#3a68d8" fill="none" stroke-width="1"/></svg>
<div style="top:91px;height:14px;line-height:14px;font-size:12px;color:#5c6878;white-space:pre;left:999.00px;transform-origin:0 50%;transform:scaleX(0.9090);">EURUSDm,M15</div>
<div style="left:1819px;top:89px;width:30px;height:17px;border:1px solid #8796ac;border-radius:3px;background:linear-gradient(#d6e0ec 0%,#ccd9e7 45%,#bfcede 52%,#d0dcea 100%);box-shadow:inset 0 0 0 1px rgba(255,255,255,.4)"></div>
<svg style="left:1828px;top:97px" width="12" height="6" viewBox="0 0 12 6"><rect x="0.8" y="0.8" width="10" height="4" rx="1" fill="#f6f6f6" stroke="#54586a" stroke-width="1.1"/></svg>
<div style="left:1852px;top:89px;width:30px;height:17px;border:1px solid #8796ac;border-radius:3px;background:linear-gradient(#d6e0ec 0%,#ccd9e7 45%,#bfcede 52%,#d0dcea 100%);box-shadow:inset 0 0 0 1px rgba(255,255,255,.4)"></div>
<svg style="left:1861px;top:93px" width="12" height="10" viewBox="0 0 12 10"><rect x="0.8" y="0.8" width="10" height="8" rx="1" fill="#f6f6f6" stroke="#54586a" stroke-width="1.1"/><rect x="3.5" y="3.2" width="4.6" height="3" fill="#92a9c6" stroke="#54586a" stroke-width="0.9"/></svg>
<div style="left:1885px;top:89px;width:30px;height:17px;border:1px solid #8796ac;border-radius:3px;background:linear-gradient(#d6e0ec 0%,#ccd9e7 45%,#bfcede 52%,#d0dcea 100%);box-shadow:inset 0 0 0 1px rgba(255,255,255,.4)"></div>
<svg style="left:1893px;top:91px" width="14" height="13" viewBox="0 0 14 13"><path d="M3.6 3.9 L10.4 9.3 M10.4 3.9 L3.6 9.3" stroke="#4a4d5e" stroke-width="4.6" stroke-linecap="square"/><path d="M3.6 3.9 L10.4 9.3 M10.4 3.9 L3.6 9.3" stroke="#f6f6f6" stroke-width="2.4" stroke-linecap="square"/></svg>
<div style="left:968px;top:405px;width:958px;height:326px;background:#3c3c3c;border-radius:6px 6px 0 0"></div>
<div style="left:969px;top:406px;width:956px;height:324px;background:#d7e4f2;border-radius:5px 5px 0 0;box-shadow:inset 1px 1px 0 rgba(255,255,255,.55), inset -1px -1px 0 rgba(255,255,255,.35)"></div>
<div style="left:970px;top:407px;width:954px;height:31px;background:linear-gradient(#bfcdde 0px,#c3d1e1 12px,#cfdceb 24px,#d7e4f2 31px);border-radius:5px 5px 0 0"></div>
<svg style="left:980px;top:417px" width="15" height="14" viewBox="0 0 15 14"><rect x="0.5" y="0.5" width="10" height="8" fill="#fafcff" stroke="#4a78e0" stroke-dasharray="1.5 1"/><path d="M2 4 h2 l1 -1 l1 2 l1 -1 h2" stroke="#5a88e8" fill="none" stroke-width="1"/><rect x="4.5" y="5.5" width="10" height="8" fill="#ffffff" stroke="#4a78e0" stroke-dasharray="1.5 1"/><path d="M6 9 l1.5 2.5 l1.5 -2.5 l1.5 2.5 l1.5 -2.5" stroke="#3a68d8" fill="none" stroke-width="1"/></svg>
<div style="top:417px;height:14px;line-height:14px;font-size:12px;color:#5c6878;white-space:pre;left:999.00px;transform-origin:0 50%;transform:scaleX(0.9250);">GBPUSDm,M15</div>
<div style="left:1819px;top:415px;width:30px;height:17px;border:1px solid #8796ac;border-radius:3px;background:linear-gradient(#d6e0ec 0%,#ccd9e7 45%,#bfcede 52%,#d0dcea 100%);box-shadow:inset 0 0 0 1px rgba(255,255,255,.4)"></div>
<svg style="left:1828px;top:423px" width="12" height="6" viewBox="0 0 12 6"><rect x="0.8" y="0.8" width="10" height="4" rx="1" fill="#f6f6f6" stroke="#54586a" stroke-width="1.1"/></svg>
<div style="left:1852px;top:415px;width:30px;height:17px;border:1px solid #8796ac;border-radius:3px;background:linear-gradient(#d6e0ec 0%,#ccd9e7 45%,#bfcede 52%,#d0dcea 100%);box-shadow:inset 0 0 0 1px rgba(255,255,255,.4)"></div>
<svg style="left:1861px;top:419px" width="12" height="10" viewBox="0 0 12 10"><rect x="0.8" y="0.8" width="10" height="8" rx="1" fill="#f6f6f6" stroke="#54586a" stroke-width="1.1"/><rect x="3.5" y="3.2" width="4.6" height="3" fill="#92a9c6" stroke="#54586a" stroke-width="0.9"/></svg>
<div style="left:1885px;top:415px;width:30px;height:17px;border:1px solid #8796ac;border-radius:3px;background:linear-gradient(#d6e0ec 0%,#ccd9e7 45%,#bfcede 52%,#d0dcea 100%);box-shadow:inset 0 0 0 1px rgba(255,255,255,.4)"></div>
<svg style="left:1893px;top:417px" width="14" height="13" viewBox="0 0 14 13"><path d="M3.6 3.9 L10.4 9.3 M10.4 3.9 L3.6 9.3" stroke="#4a4d5e" stroke-width="4.6" stroke-linecap="square"/><path d="M3.6 3.9 L10.4 9.3 M10.4 3.9 L3.6 9.3" stroke="#f6f6f6" stroke-width="2.4" stroke-linecap="square"/></svg>
<div style="left:10px;top:405px;width:958px;height:326px;background:#3c3c3c;border-radius:6px 6px 0 0"></div>
<div style="left:11px;top:406px;width:956px;height:324px;background:#b9d1ea;border-radius:5px 5px 0 0;box-shadow:inset 1px 1px 0 rgba(255,255,255,.55), inset -1px -1px 0 rgba(255,255,255,.35)"></div>
<div style="left:12px;top:407px;width:954px;height:31px;background:linear-gradient(#98b4d2 0px,#9fbad8 12px,#b0c9e5 24px,#b9d1ea 31px);border-radius:5px 5px 0 0"></div>
<svg style="left:21px;top:417px" width="15" height="14" viewBox="0 0 15 14"><rect x="0.5" y="0.5" width="10" height="8" fill="#fafcff" stroke="#4a78e0" stroke-dasharray="1.5 1"/><path d="M2 4 h2 l1 -1 l1 2 l1 -1 h2" stroke="#5a88e8" fill="none" stroke-width="1"/><rect x="4.5" y="5.5" width="10" height="8" fill="#ffffff" stroke="#4a78e0" stroke-dasharray="1.5 1"/><path d="M6 9 l1.5 2.5 l1.5 -2.5 l1.5 2.5 l1.5 -2.5" stroke="#3a68d8" fill="none" stroke-width="1"/></svg>
<div style="top:417px;height:14px;line-height:14px;font-size:12px;color:#0c0c20;white-space:pre;left:40.00px;transform-origin:0 50%;transform:scaleX(0.8927);">EURJPYm,M30</div>
<div style="left:861px;top:415px;width:30px;height:17px;border:1px solid #66788e;border-radius:3px;background:linear-gradient(#c6d6e8 0%,#b8cce4 45%,#9fb9d8 52%,#b4cce6 100%);box-shadow:inset 0 0 0 1px rgba(255,255,255,.4)"></div>
<svg style="left:870px;top:423px" width="12" height="6" viewBox="0 0 12 6"><rect x="0.8" y="0.8" width="10" height="4" rx="1" fill="#f6f6f6" stroke="#54586a" stroke-width="1.1"/></svg>
<div style="left:894px;top:415px;width:30px;height:17px;border:1px solid #66788e;border-radius:3px;background:linear-gradient(#c6d6e8 0%,#b8cce4 45%,#9fb9d8 52%,#b4cce6 100%);box-shadow:inset 0 0 0 1px rgba(255,255,255,.4)"></div>
<svg style="left:903px;top:419px" width="12" height="10" viewBox="0 0 12 10"><rect x="0.8" y="0.8" width="10" height="8" rx="1" fill="#f6f6f6" stroke="#54586a" stroke-width="1.1"/><rect x="3.5" y="3.2" width="4.6" height="3" fill="#92a9c6" stroke="#54586a" stroke-width="0.9"/></svg>
<div style="left:927px;top:415px;width:30px;height:17px;border:1px solid #3a1238;border-radius:3px;background:linear-gradient(#e6c27e 0%,#dcae62 42%,#b83c2c 47%,#c27c2e 54%,#cf9a4a 80%,#e4c486 100%);box-shadow:inset 0 0 0 1px rgba(255,255,255,.4)"></div>
<svg style="left:935px;top:417px" width="14" height="13" viewBox="0 0 14 13"><path d="M3.6 3.9 L10.4 9.3 M10.4 3.9 L3.6 9.3" stroke="#4a4d5e" stroke-width="4.6" stroke-linecap="square"/><path d="M3.6 3.9 L10.4 9.3 M10.4 3.9 L3.6 9.3" stroke="#f6f6f6" stroke-width="2.4" stroke-linecap="square"/></svg>
<div style="left:966px;top:420px;width:1px;height:310px;background:#46b4dc;"></div>
<div style="left:11px;top:729px;width:956px;height:1px;background:#46b4dc;"></div>
<div style="left:1926px;top:79px;width:2px;height:693px;background:#f4f4f4;"></div>
<div style="left:17px;top:109px;width:942px;height:287px;background:#707070;"></div>
<div style="left:958px;top:109px;width:1px;height:287px;background:#f4f8fc;"></div>
<div style="left:17px;top:395px;width:942px;height:1px;background:#f4f8fc;"></div>
<div style="left:18px;top:110px;width:940px;height:285px;background:#000;"></div>
<div style="left:975px;top:109px;width:942px;height:287px;background:#707070;"></div>
<div style="left:1916px;top:109px;width:1px;height:287px;background:#f4f8fc;"></div>
<div style="left:975px;top:395px;width:942px;height:1px;background:#f4f8fc;"></div>
<div style="left:976px;top:110px;width:940px;height:285px;background:#000;"></div>
<div style="left:17px;top:436px;width:942px;height:286px;background:#707070;"></div>
<div style="left:958px;top:436px;width:1px;height:286px;background:#f4f8fc;"></div>
<div style="left:17px;top:721px;width:942px;height:1px;background:#f4f8fc;"></div>
<div style="left:18px;top:437px;width:940px;height:284px;background:#000;"></div>
<div style="left:975px;top:436px;width:942px;height:286px;background:#707070;"></div>
<div style="left:1916px;top:436px;width:1px;height:286px;background:#f4f8fc;"></div>
<div style="left:975px;top:721px;width:942px;height:1px;background:#f4f8fc;"></div>
<div style="left:976px;top:437px;width:940px;height:284px;background:#000;"></div>
<svg style="left:18px;top:110px" width="941" height="286" viewBox="18 110 941 286" shape-rendering="crispEdges" >
<rect x="23" y="122" width="697" height="112" fill="#1f2024"/>
<line x1="24" x2="918" y1="115.0" y2="115.0" stroke="#32cd32" stroke-width="2" stroke-dasharray="9 6 3 6" stroke-dashoffset="0"/>
<line x1="24" x2="918" y1="151.0" y2="151.0" stroke="#000" stroke-width="2"/>
<line x1="24" x2="918" y1="151.0" y2="151.0" stroke="#32cd32" stroke-width="2" stroke-dasharray="9 6 3 6" stroke-dashoffset="0"/>
<line x1="24" x2="918" y1="158.5" y2="158.5" stroke="#000" stroke-width="1"/>
<line x1="24" x2="918" y1="158.5" y2="158.5" stroke="#32cd32" stroke-width="1" stroke-dasharray="9 6 3 6" stroke-dashoffset="0"/>
<line x1="24" x2="918" y1="165.5" y2="165.5" stroke="#000" stroke-width="1"/>
<line x1="24" x2="918" y1="165.5" y2="165.5" stroke="#32cd32" stroke-width="1" stroke-dasharray="9 6 3 6" stroke-dashoffset="0"/>
<line x1="24" x2="918" y1="184.5" y2="184.5" stroke="#000" stroke-width="1"/>
<line x1="24" x2="918" y1="184.5" y2="184.5" stroke="#32cd32" stroke-width="1" stroke-dasharray="9 6 3 6" stroke-dashoffset="0"/>
<line x1="24" x2="918" y1="191.5" y2="191.5" stroke="#000" stroke-width="1"/>
<line x1="24" x2="918" y1="191.5" y2="191.5" stroke="#32cd32" stroke-width="1" stroke-dasharray="9 6 3 6" stroke-dashoffset="0"/>
<line x1="24" x2="918" y1="216.5" y2="216.5" stroke="#000" stroke-width="1"/>
<line x1="24" x2="918" y1="216.5" y2="216.5" stroke="#32cd32" stroke-width="1" stroke-dasharray="9 6 3 6" stroke-dashoffset="0"/>
<line x1="24" x2="918" y1="219.5" y2="219.5" stroke="#000" stroke-width="1"/>
<line x1="24" x2="918" y1="219.5" y2="219.5" stroke="#32cd32" stroke-width="1" stroke-dasharray="9 6 3 6" stroke-dashoffset="0"/>
<rect x="23" y="176" width="895" height="1" fill="#ff0000"/>
<rect x="783" y="127" width="1" height="108" fill="#a00000"/>
<rect x="782" y="147" width="3" height="45" fill="#ff0000"/>
<line x1="23" x2="918" y1="245.5" y2="245.5" stroke="#fff" stroke-width="1" stroke-dasharray="3 3"/>
<line x1="23" x2="918" y1="292.5" y2="292.5" stroke="#fff" stroke-width="1" stroke-dasharray="3 3"/>
<line x1="23" x2="918" y1="346.5" y2="346.5" stroke="#fff" stroke-width="1" stroke-dasharray="3 3"/>
</svg>
<div style="left:27.00px;top:139px;width:65px;height:10px;background:#000;overflow:hidden">
<div style="top:0px;height:12px;line-height:12px;font-size:10px;color:#fff;white-space:pre;left:1.50px;transform-origin:0 50%;transform:scaleX(0.9213);">#41915571 sell</div>
</div>
<div style="left:27.00px;top:149px;width:65px;height:10px;background:#000;overflow:hidden">
<div style="top:0px;height:12px;line-height:12px;font-size:10px;color:#fff;white-space:pre;left:1.50px;transform-origin:0 50%;transform:scaleX(0.9213);">#41914941 sell</div>
</div>
<div style="left:27.00px;top:154px;width:65px;height:10px;background:#000;overflow:hidden">
<div style="top:0px;height:12px;line-height:12px;font-size:10px;color:#fff;white-space:pre;left:1.50px;transform-origin:0 50%;transform:scaleX(0.9213);">#41914936 sell</div>
</div>
<div style="left:27.00px;top:174px;width:65px;height:10px;background:#000;overflow:hidden">
<div style="top:0px;height:12px;line-height:12px;font-size:10px;color:#fff;white-space:pre;left:1.50px;transform-origin:0 50%;transform:scaleX(0.9213);">#41915573 sell</div>
</div>
<div style="left:27.00px;top:180px;width:65px;height:10px;background:#000;overflow:hidden">
<div style="top:0px;height:12px;line-height:12px;font-size:10px;color:#fff;white-space:pre;left:1.50px;transform-origin:0 50%;transform:scaleX(0.9213);">#41914938 sell</div>
</div>
<div style="left:27.00px;top:205px;width:65px;height:10px;background:#000;overflow:hidden">
<div style="top:0px;height:12px;line-height:12px;font-size:10px;color:#fff;white-space:pre;left:1.50px;transform-origin:0 50%;transform:scaleX(0.9213);">#41914785 sell</div>
</div>
<div style="left:27.00px;top:208px;width:65px;height:10px;background:#000;overflow:hidden">
<div style="top:0px;height:12px;line-height:12px;font-size:10px;color:#fff;white-space:pre;left:1.50px;transform-origin:0 50%;transform:scaleX(0.9213);">#41914940 sell</div>
</div>
<svg style="left:18px;top:110px" width="941" height="286" viewBox="18 110 941 286" shape-rendering="crispEdges" >
<clipPath id="cl1"><rect x="23" y="114" width="895" height="126"/></clipPath><g clip-path="url(#cl1)">
<rect x="23" y="156" width="1" height="16" fill="#00ff00"/>
<rect x="21" y="156" width="5" height="15" fill="#00ff00"/>
<rect x="22" y="157" width="3" height="13" fill="#ff0000"/>
<rect x="31" y="166" width="1" height="6" fill="#00ff00"/>
<rect x="29" y="170" width="5" height="1" fill="#00ff00"/>
<rect x="39" y="164" width="1" height="9" fill="#00ff00"/>
<rect x="37" y="167" width="5" height="5" fill="#00ff00"/>
<rect x="47" y="165" width="1" height="3" fill="#00ff00"/>
<rect x="45" y="166" width="5" height="1" fill="#00ff00"/>
<rect x="55" y="154" width="1" height="19" fill="#00ff00"/>
<rect x="53" y="159" width="5" height="8" fill="#00ff00"/>
<rect x="63" y="156" width="1" height="10" fill="#00ff00"/>
<rect x="61" y="159" width="5" height="7" fill="#00ff00"/>
<rect x="62" y="160" width="3" height="5" fill="#ff0000"/>
<rect x="71" y="152" width="1" height="14" fill="#00ff00"/>
<rect x="69" y="158" width="5" height="8" fill="#00ff00"/>
<rect x="79" y="158" width="1" height="26" fill="#00ff00"/>
<rect x="77" y="158" width="5" height="1" fill="#00ff00"/>
<rect x="87" y="154" width="1" height="15" fill="#00ff00"/>
<rect x="85" y="156" width="5" height="6" fill="#00ff00"/>
<rect x="86" y="157" width="3" height="4" fill="#ff0000"/>
<rect x="95" y="154" width="1" height="19" fill="#00ff00"/>
<rect x="93" y="158" width="5" height="4" fill="#00ff00"/>
<rect x="103" y="158" width="1" height="13" fill="#00ff00"/>
<rect x="101" y="159" width="5" height="12" fill="#00ff00"/>
<rect x="102" y="160" width="3" height="10" fill="#ff0000"/>
<rect x="111" y="168" width="1" height="15" fill="#00ff00"/>
<rect x="109" y="170" width="5" height="12" fill="#00ff00"/>
<rect x="110" y="171" width="3" height="10" fill="#ff0000"/>
<rect x="119" y="176" width="1" height="36" fill="#00ff00"/>
<rect x="117" y="182" width="5" height="2" fill="#00ff00"/>
<rect x="118" y="182" width="3" height="2" fill="#ff0000"/>
<rect x="127" y="172" width="1" height="20" fill="#00ff00"/>
<rect x="125" y="173" width="5" height="12" fill="#00ff00"/>
<rect x="135" y="166" width="1" height="24" fill="#00ff00"/>
<rect x="133" y="172" width="5" height="15" fill="#00ff00"/>
<rect x="134" y="173" width="3" height="13" fill="#ff0000"/>
<rect x="143" y="176" width="1" height="18" fill="#00ff00"/>
<rect x="141" y="187" width="5" height="5" fill="#00ff00"/>
<rect x="142" y="188" width="3" height="3" fill="#ff0000"/>
<rect x="151" y="182" width="1" height="17" fill="#00ff00"/>
<rect x="149" y="192" width="5" height="3" fill="#00ff00"/>
<rect x="150" y="193" width="3" height="1" fill="#ff0000"/>
<rect x="159" y="187" width="1" height="10" fill="#00ff00"/>
<rect x="157" y="192" width="5" height="3" fill="#00ff00"/>
<rect x="167" y="192" width="1" height="15" fill="#00ff00"/>
<rect x="165" y="192" width="5" height="11" fill="#00ff00"/>
<rect x="166" y="193" width="3" height="9" fill="#ff0000"/>
<rect x="175" y="198" width="1" height="12" fill="#00ff00"/>
<rect x="173" y="203" width="5" height="2" fill="#00ff00"/>
<rect x="183" y="181" width="1" height="24" fill="#00ff00"/>
<rect x="181" y="184" width="5" height="21" fill="#00ff00"/>
<rect x="191" y="184" width="1" height="16" fill="#00ff00"/>
<rect x="189" y="185" width="5" height="13" fill="#00ff00"/>
<rect x="190" y="186" width="3" height="11" fill="#ff0000"/>
<rect x="199" y="187" width="1" height="19" fill="#00ff00"/>
<rect x="197" y="197" width="5" height="8" fill="#00ff00"/>
<rect x="198" y="198" width="3" height="6" fill="#ff0000"/>
<rect x="207" y="192" width="1" height="16" fill="#00ff00"/>
<rect x="205" y="204" width="5" height="1" fill="#00ff00"/>
<rect x="215" y="201" width="1" height="11" fill="#00ff00"/>
<rect x="213" y="204" width="5" height="8" fill="#00ff00"/>
<rect x="214" y="205" width="3" height="6" fill="#ff0000"/>
<rect x="223" y="208" width="1" height="15" fill="#00ff00"/>
<rect x="221" y="211" width="5" height="8" fill="#00ff00"/>
<rect x="222" y="212" width="3" height="6" fill="#ff0000"/>
<rect x="231" y="209" width="1" height="26" fill="#00ff00"/>
<rect x="229" y="220" width="5" height="6" fill="#00ff00"/>
<rect x="230" y="221" width="3" height="4" fill="#ff0000"/>
<rect x="239" y="208" width="1" height="21" fill="#00ff00"/>
<rect x="237" y="218" width="5" height="9" fill="#00ff00"/>
<rect x="247" y="195" width="1" height="24" fill="#00ff00"/>
<rect x="245" y="197" width="5" height="22" fill="#00ff00"/>
<rect x="255" y="171" width="1" height="26" fill="#00ff00"/>
<rect x="253" y="178" width="5" height="19" fill="#00ff00"/>
<rect x="263" y="178" width="1" height="19" fill="#00ff00"/>
<rect x="261" y="179" width="5" height="16" fill="#00ff00"/>
<rect x="262" y="180" width="3" height="14" fill="#ff0000"/>
<rect x="271" y="180" width="1" height="15" fill="#00ff00"/>
<rect x="269" y="189" width="5" height="6" fill="#00ff00"/>
<rect x="279" y="184" width="1" height="11" fill="#00ff00"/>
<rect x="277" y="189" width="5" height="2" fill="#00ff00"/>
<rect x="287" y="182" width="1" height="13" fill="#00ff00"/>
<rect x="285" y="190" width="5" height="1" fill="#00ff00"/>
<rect x="295" y="167" width="1" height="27" fill="#00ff00"/>
<rect x="293" y="167" width="5" height="23" fill="#00ff00"/>
<rect x="303" y="164" width="1" height="12" fill="#00ff00"/>
<rect x="301" y="165" width="5" height="3" fill="#00ff00"/>
<rect x="311" y="142" width="1" height="27" fill="#00ff00"/>
<rect x="309" y="145" width="5" height="21" fill="#00ff00"/>
<rect x="319" y="123" width="1" height="23" fill="#00ff00"/>
<rect x="317" y="132" width="5" height="14" fill="#00ff00"/>
<rect x="327" y="130" width="1" height="23" fill="#00ff00"/>
<rect x="325" y="132" width="5" height="14" fill="#00ff00"/>
<rect x="326" y="133" width="3" height="12" fill="#ff0000"/>
<rect x="335" y="146" width="1" height="24" fill="#00ff00"/>
<rect x="333" y="147" width="5" height="16" fill="#00ff00"/>
<rect x="334" y="148" width="3" height="14" fill="#ff0000"/>
<rect x="343" y="157" width="1" height="12" fill="#00ff00"/>
<rect x="341" y="162" width="5" height="4" fill="#00ff00"/>
<rect x="351" y="153" width="1" height="10" fill="#00ff00"/>
<rect x="349" y="158" width="5" height="5" fill="#00ff00"/>
<rect x="359" y="153" width="1" height="5" fill="#00ff00"/>
<rect x="357" y="157" width="5" height="1" fill="#00ff00"/>
<rect x="367" y="153" width="1" height="7" fill="#00ff00"/>
<rect x="365" y="155" width="5" height="3" fill="#00ff00"/>
<rect x="375" y="155" width="1" height="10" fill="#00ff00"/>
<rect x="373" y="156" width="5" height="9" fill="#00ff00"/>
<rect x="374" y="157" width="3" height="7" fill="#ff0000"/>
<rect x="383" y="159" width="1" height="11" fill="#00ff00"/>
<rect x="381" y="164" width="5" height="3" fill="#00ff00"/>
<rect x="382" y="165" width="3" height="1" fill="#ff0000"/>
<rect x="391" y="166" width="1" height="19" fill="#00ff00"/>
<rect x="389" y="168" width="5" height="12" fill="#00ff00"/>
<rect x="390" y="169" width="3" height="10" fill="#ff0000"/>
<rect x="399" y="171" width="1" height="18" fill="#00ff00"/>
<rect x="397" y="173" width="5" height="8" fill="#00ff00"/>
<rect x="407" y="169" width="1" height="9" fill="#00ff00"/>
<rect x="405" y="172" width="5" height="1" fill="#00ff00"/>
<rect x="415" y="171" width="1" height="27" fill="#00ff00"/>
<rect x="413" y="173" width="5" height="18" fill="#00ff00"/>
<rect x="414" y="174" width="3" height="16" fill="#ff0000"/>
<rect x="423" y="180" width="1" height="14" fill="#00ff00"/>
<rect x="421" y="182" width="5" height="9" fill="#00ff00"/>
<rect x="431" y="175" width="1" height="9" fill="#00ff00"/>
<rect x="429" y="182" width="5" height="1" fill="#00ff00"/>
<rect x="439" y="176" width="1" height="11" fill="#00ff00"/>
<rect x="437" y="181" width="5" height="3" fill="#00ff00"/>
<rect x="438" y="182" width="3" height="1" fill="#ff0000"/>
<rect x="447" y="176" width="1" height="11" fill="#00ff00"/>
<rect x="445" y="182" width="5" height="3" fill="#00ff00"/>
<rect x="455" y="175" width="1" height="12" fill="#00ff00"/>
<rect x="453" y="175" width="5" height="6" fill="#00ff00"/>
<rect x="463" y="172" width="1" height="7" fill="#00ff00"/>
<rect x="461" y="172" width="5" height="4" fill="#00ff00"/>
<rect x="471" y="164" width="1" height="11" fill="#00ff00"/>
<rect x="469" y="164" width="5" height="8" fill="#00ff00"/>
<rect x="479" y="159" width="1" height="17" fill="#00ff00"/>
<rect x="477" y="164" width="5" height="9" fill="#00ff00"/>
<rect x="478" y="165" width="3" height="7" fill="#ff0000"/>
<rect x="487" y="169" width="1" height="12" fill="#00ff00"/>
<rect x="485" y="173" width="5" height="4" fill="#00ff00"/>
<rect x="486" y="174" width="3" height="2" fill="#ff0000"/>
<rect x="495" y="164" width="1" height="16" fill="#00ff00"/>
<rect x="493" y="170" width="5" height="8" fill="#00ff00"/>
<rect x="503" y="167" width="1" height="16" fill="#00ff00"/>
<rect x="501" y="172" width="5" height="8" fill="#00ff00"/>
<rect x="502" y="173" width="3" height="6" fill="#ff0000"/>
<rect x="511" y="171" width="1" height="10" fill="#00ff00"/>
<rect x="509" y="176" width="5" height="5" fill="#00ff00"/>
<rect x="519" y="161" width="1" height="20" fill="#00ff00"/>
<rect x="517" y="168" width="5" height="8" fill="#00ff00"/>
<rect x="527" y="130" width="1" height="40" fill="#00ff00"/>
<rect x="525" y="132" width="5" height="37" fill="#00ff00"/>
<rect x="535" y="122" width="1" height="26" fill="#00ff00"/>
<rect x="533" y="132" width="5" height="15" fill="#00ff00"/>
<rect x="534" y="133" width="3" height="13" fill="#ff0000"/>
<rect x="543" y="139" width="1" height="26" fill="#00ff00"/>
<rect x="541" y="139" width="5" height="8" fill="#00ff00"/>
<rect x="551" y="139" width="1" height="19" fill="#00ff00"/>
<rect x="549" y="140" width="5" height="8" fill="#00ff00"/>
<rect x="550" y="141" width="3" height="6" fill="#ff0000"/>
<rect x="559" y="140" width="1" height="20" fill="#00ff00"/>
<rect x="557" y="148" width="5" height="2" fill="#00ff00"/>
<rect x="558" y="148" width="3" height="2" fill="#ff0000"/>
<rect x="567" y="146" width="1" height="16" fill="#00ff00"/>
<rect x="565" y="148" width="5" height="2" fill="#00ff00"/>
<rect x="575" y="136" width="1" height="27" fill="#00ff00"/>
<rect x="573" y="148" width="5" height="8" fill="#00ff00"/>
<rect x="574" y="149" width="3" height="6" fill="#ff0000"/>
<rect x="583" y="152" width="1" height="18" fill="#00ff00"/>
<rect x="581" y="156" width="5" height="12" fill="#00ff00"/>
<rect x="582" y="157" width="3" height="10" fill="#ff0000"/>
<rect x="591" y="159" width="1" height="10" fill="#00ff00"/>
<rect x="589" y="161" width="5" height="8" fill="#00ff00"/>
<rect x="599" y="135" width="1" height="27" fill="#00ff00"/>
<rect x="597" y="137" width="5" height="25" fill="#00ff00"/>
<rect x="607" y="137" width="1" height="35" fill="#00ff00"/>
<rect x="605" y="138" width="5" height="34" fill="#00ff00"/>
<rect x="606" y="139" width="3" height="32" fill="#ff0000"/>
<rect x="615" y="163" width="1" height="20" fill="#00ff00"/>
<rect x="613" y="171" width="5" height="1" fill="#00ff00"/>
<rect x="623" y="166" width="1" height="11" fill="#00ff00"/>
<rect x="621" y="172" width="5" height="4" fill="#00ff00"/>
<rect x="622" y="173" width="3" height="2" fill="#ff0000"/>
<rect x="631" y="169" width="1" height="12" fill="#00ff00"/>
<rect x="629" y="177" width="5" height="4" fill="#00ff00"/>
<rect x="630" y="178" width="3" height="2" fill="#ff0000"/>
<rect x="639" y="174" width="1" height="21" fill="#00ff00"/>
<rect x="637" y="180" width="5" height="12" fill="#00ff00"/>
<rect x="638" y="181" width="3" height="10" fill="#ff0000"/>
<rect x="647" y="168" width="1" height="26" fill="#00ff00"/>
<rect x="645" y="168" width="5" height="25" fill="#00ff00"/>
<rect x="655" y="151" width="1" height="21" fill="#00ff00"/>
<rect x="653" y="166" width="5" height="3" fill="#00ff00"/>
<rect x="663" y="159" width="1" height="23" fill="#00ff00"/>
<rect x="661" y="162" width="5" height="4" fill="#00ff00"/>
<rect x="671" y="159" width="1" height="60" fill="#00ff00"/>
<rect x="669" y="163" width="5" height="50" fill="#00ff00"/>
<rect x="670" y="164" width="3" height="48" fill="#ff0000"/>
<rect x="679" y="193" width="1" height="25" fill="#00ff00"/>
<rect x="677" y="197" width="5" height="16" fill="#00ff00"/>
<rect x="687" y="169" width="1" height="35" fill="#00ff00"/>
<rect x="685" y="179" width="5" height="18" fill="#00ff00"/>
<rect x="695" y="139" width="1" height="42" fill="#00ff00"/>
<rect x="693" y="144" width="5" height="36" fill="#00ff00"/>
<rect x="703" y="141" width="1" height="23" fill="#00ff00"/>
<rect x="701" y="144" width="5" height="5" fill="#00ff00"/>
<rect x="702" y="145" width="3" height="3" fill="#ff0000"/>
<rect x="711" y="146" width="1" height="38" fill="#00ff00"/>
<rect x="709" y="147" width="5" height="31" fill="#00ff00"/>
<rect x="710" y="148" width="3" height="29" fill="#ff0000"/>
<rect x="719" y="176" width="1" height="21" fill="#00ff00"/>
<rect x="717" y="177" width="5" height="14" fill="#00ff00"/>
<rect x="718" y="178" width="3" height="12" fill="#ff0000"/>
</g>
<g fill="none" stroke-width="1" shape-rendering="auto">
<polyline points="23.2,245.6 50.4,245.9 63.9,248.7 105.8,250.7 119.3,258.1 129.7,256.2 150.7,257.0 165.7,258.4 188.1,259.2 221.0,259.9 240.5,260.2 249.5,258.4 255.4,257.3 256.0,257.3 275.5,257.7 290.4,258.1 306.9,256.7 312.9,256.7 318.9,258.4 345.8,258.4 354.8,258.1 360.8,257.3 378.7,258.1 387.7,258.7 398.2,261.7 411.6,262.2 426.6,262.6 440.1,261.4 447.6,266.7 455.0,265.2 468.5,265.9 476.0,267.4 495.4,267.7 496.0,267.4 508.0,266.7 515.5,265.9 527.4,268.6 535.7,273.4 543.1,269.2 551.4,269.7 560.4,274.6 567.8,274.6 575.3,270.1 584.3,262.2 591.8,262.6 599.3,270.1 608.2,272.7 615.7,271.6 623.2,268.2 630.7,270.7 639.7,265.6 647.9,264.1 656.1,265.6 663.6,264.1 671.1,267.7 679.3,259.6 687.6,263.2 695.0,270.7 704.0,272.7 711.5,271.9 719.0,269.7" stroke="#ff0000"/>
<polyline points="23.2,245.6 50.4,245.6 60.9,248.0 78.9,249.2 105.8,249.8 117.8,255.5 129.7,255.2 146.2,256.7 165.7,258.1 180.6,257.3 195.6,258.4 221.0,259.9 233.0,259.9 243.5,257.7 252.5,255.9 256.0,256.2 275.5,257.3 277.0,258.4 290.4,257.3 306.9,255.5 312.9,255.8 318.9,257.7 345.8,258.1 354.8,257.7 360.8,257.0 378.7,257.0 387.7,258.4 398.2,261.4 411.6,261.4 426.6,262.2 440.1,261.1 447.6,263.7 455.0,262.6 468.5,265.2 476.0,266.7 495.4,266.7 496.0,265.9 508.0,265.2 519.9,265.2 527.4,267.7 534.9,266.7 543.9,265.2 551.4,267.4 560.4,272.7 567.8,268.9 576.8,262.2 584.3,259.6 591.8,262.2 599.3,268.2 615.7,268.2 623.2,262.9 630.7,264.4 639.7,261.4 647.9,262.9 656.1,261.4 663.6,263.7 672.6,256.2 680.1,257.7 687.6,261.4 695.0,269.7 704.0,271.9 711.5,270.1 719.0,265.2" stroke="#ffff00"/>
<polyline points="23.2,245.3 50.4,245.3 60.9,246.8 71.4,246.8 78.9,248.0 105.8,248.3 111.8,250.2 120.8,253.2 129.7,253.7 140.2,254.3 150.7,256.2 165.7,257.0 180.6,255.5 189.6,256.2 203.1,257.7 221.0,258.7 233.0,258.4 243.5,256.2 252.5,255.2 256.0,255.2 275.5,255.5 277.0,256.7 290.4,255.8 306.9,254.7 312.9,254.3 318.9,255.8 326.3,256.7 345.8,256.7 354.8,257.3 360.8,256.2 378.7,256.2 390.7,256.2 399.7,259.6 411.6,259.6 426.6,260.7 440.1,260.2 449.1,260.7 462.5,262.9 476.0,264.1 486.5,264.4 496.0,264.4 508.0,263.2 519.9,263.2 527.4,265.2 534.9,265.2 546.9,263.2 555.9,264.4 566.3,266.7 579.8,258.4 584.3,257.3 597.8,260.7 608.2,266.7 615.7,265.2 623.2,262.2 630.7,263.7 639.7,257.3 647.9,260.7 663.6,258.4 672.6,254.7 687.6,254.3 695.0,259.2 704.0,268.6 711.5,267.4 719.0,263.2" stroke="#00ff00"/>
<polyline points="23.2,295.6 35.5,295.1 47.4,293.6 54.9,296.6 68.4,294.1 75.9,294.7 87.8,298.6 99.8,297.4 111.8,293.6 120.8,295.6 132.7,295.1 144.7,296.2 158.2,292.9 165.7,292.6 174.6,296.2 189.6,295.6 198.6,289.9 216.5,289.1 225.5,291.1 237.5,292.9 246.5,297.1 254.0,299.2 256.0,299.6 272.5,299.2 282.9,296.6 296.4,295.1 302.4,297.4 312.9,303.3 320.4,306.6 327.8,303.3 336.8,303.3 342.8,304.8 351.8,301.5 360.8,303.6 369.7,303.6 390.7,301.1 399.7,293.6 407.9,292.6 440.1,293.6 447.6,294.7 465.5,293.2 471.5,295.1 479.0,299.6 489.5,300.1 495.4,301.5 496.0,301.1 503.5,301.1 511.0,297.4 518.4,295.9 527.4,306.3 535.7,323.5 543.1,315.3 551.4,314.1 560.4,324.6 567.8,324.6 576.8,313.8 583.5,302.1 591.8,302.1 599.3,316.8 607.5,320.6 615.7,318.0 623.2,313.1 631.4,316.8 639.7,307.5 647.9,305.1 656.1,307.5 663.6,306.0 671.1,311.1 679.3,295.6 687.6,300.4 695.0,309.6 704.0,313.5 711.5,313.5 719.0,309.3" stroke="#ff0000"/>
<polyline points="23.2,292.9 34.0,293.6 53.4,295.1 68.4,292.6 78.9,293.6 87.8,296.6 96.8,295.6 105.8,291.4 111.8,289.6 120.8,293.6 135.7,294.4 150.7,291.4 165.7,290.2 174.6,290.2 182.9,294.4 191.1,284.6 198.6,286.6 216.5,286.9 225.5,290.6 237.5,289.1 246.5,295.1 252.5,297.4 256.0,297.4 272.5,296.2 278.4,292.6 285.9,293.6 302.4,293.6 312.1,302.6 320.4,302.6 338.3,301.1 348.8,300.4 360.8,301.5 378.7,299.6 383.2,298.6 393.7,291.1 399.7,288.4 407.9,292.6 416.1,286.6 423.6,289.9 438.6,293.6 447.6,287.6 455.0,285.1 465.5,291.4 479.0,296.6 492.5,297.7 496.0,297.4 503.5,294.4 511.0,292.6 518.4,295.6 525.9,301.8 535.7,313.1 543.1,307.5 551.4,310.8 560.4,324.3 567.8,313.1 576.8,299.6 584.3,294.7 591.8,301.1 599.3,313.5 609.7,313.5 615.0,314.6 623.2,303.3 631.4,304.5 639.7,299.6 647.9,304.5 655.4,298.6 663.6,303.3 671.8,291.7 679.3,291.7 687.6,297.1 695.0,306.3 704.0,310.5 711.5,309.3 719.0,301.8" stroke="#ffff00"/>
<polyline points="23.2,291.7 34.0,289.9 45.9,290.2 60.9,291.7 75.9,291.1 87.8,289.1 99.8,291.1 111.8,287.6 126.7,289.1 138.7,290.6 150.7,289.1 165.7,286.9 182.1,287.6 191.1,283.6 197.1,282.4 206.1,283.9 222.5,284.6 231.5,286.9 240.5,286.9 249.5,289.9 255.4,295.1 256.0,295.9 272.5,294.4 282.9,290.6 299.4,290.6 311.4,292.6 320.4,300.7 335.3,296.6 345.8,298.9 366.7,297.4 383.2,298.1 393.7,288.4 399.7,286.1 407.9,289.9 416.1,286.1 431.1,288.4 440.1,288.4 449.1,284.6 455.0,283.6 465.5,285.4 476.0,289.1 486.5,291.4 495.4,295.1 496.0,293.6 511.0,289.6 519.2,286.1 535.7,302.1 543.1,304.5 551.4,303.6 567.8,310.8 576.8,296.6 584.3,291.4 599.3,297.4 608.2,309.3 615.7,306.0 623.2,299.6 631.4,302.6 639.7,291.4 647.9,297.4 656.1,295.1 672.6,287.6 679.3,285.4 687.6,285.4 695.0,292.6 704.0,304.5 711.5,304.5 719.0,298.1" stroke="#00ff00"/>
<polyline points="23.2,350.5 35.5,350.0 47.4,349.4 54.9,351.5 75.9,350.5 87.8,347.5 99.8,343.5 111.8,343.0 120.8,347.0 132.7,346.7 144.7,349.4 150.7,351.2 165.7,350.0 175.4,354.5 189.6,351.2 198.6,349.0 210.6,349.0 216.5,351.2 225.5,359.5 237.5,361.0 248.0,363.2 254.0,365.5 256.0,365.0 272.5,364.4 282.9,363.2 296.4,362.5 302.4,363.5 312.9,368.4 320.4,370.7 327.8,368.4 336.8,368.4 342.8,369.5 351.8,367.4 360.8,368.4 369.7,368.4 390.7,366.5 399.7,361.4 407.9,360.2 440.1,361.4 447.6,362.5 455.0,359.5 465.5,360.5 471.5,361.0 479.0,361.7 489.5,362.5 495.4,364.4 496.0,364.4 503.5,363.5 511.0,362.0 518.4,360.5 527.4,366.5 535.7,374.4 543.1,369.2 551.4,369.2 560.4,374.4 567.8,374.4 576.8,369.5 583.5,364.4 591.8,364.4 599.3,371.4 607.5,372.5 615.7,371.4 623.2,369.2 631.4,370.7 639.7,366.5 647.9,365.0 656.1,366.5 663.6,366.2 671.1,369.5 679.3,360.2 687.6,363.5 695.0,369.9 704.0,372.5 711.5,371.4 719.0,368.4" stroke="#ff0000"/>
<polyline points="23.2,349.0 42.9,349.4 54.9,351.2 75.9,347.5 87.8,343.0 99.8,342.6 111.8,342.6 120.8,344.9 129.7,344.9 135.7,347.9 144.7,348.5 159.7,346.0 168.6,350.0 174.6,348.5 182.9,350.5 191.1,346.0 200.1,347.0 209.1,348.2 215.0,350.5 224.0,358.7 231.5,359.0 239.0,356.9 248.0,362.9 255.4,364.1 256.0,363.2 271.0,362.9 278.4,359.9 285.9,360.5 300.9,360.5 312.1,367.4 320.4,367.7 338.3,366.2 360.8,366.2 378.7,365.0 383.2,364.4 392.2,359.5 399.7,358.4 407.9,360.5 416.1,356.5 423.6,360.2 438.6,361.4 447.6,356.9 455.0,354.5 465.5,359.5 479.0,361.7 492.5,362.5 496.0,361.0 511.0,358.4 518.4,360.2 525.9,363.5 535.7,369.5 543.1,365.5 551.4,368.0 560.4,373.4 567.8,369.5 576.8,362.9 584.3,360.5 591.8,363.2 599.3,368.4 609.7,368.4 615.0,369.5 623.2,363.5 631.4,364.4 639.7,362.5 647.9,364.4 655.4,362.5 663.6,364.4 671.8,356.5 679.3,359.0 687.6,361.4 695.0,368.4 704.0,370.7 711.5,369.2 719.0,364.4" stroke="#ffff00"/>
<polyline points="23.2,347.5 32.5,347.9 42.9,347.0 53.4,348.2 75.9,346.4 87.8,340.8 99.8,339.3 111.8,339.0 120.8,340.8 129.7,341.5 135.7,343.5 150.7,343.0 162.7,344.5 174.6,346.4 183.6,346.0 191.4,333.6 200.1,341.5 209.1,342.6 216.5,346.0 225.5,350.5 231.5,355.4 239.0,354.2 246.5,355.7 254.0,360.2 256.0,361.4 271.0,361.0 282.9,358.4 299.4,358.4 309.9,360.2 320.4,365.5 335.3,362.5 345.8,364.7 366.7,363.5 383.2,364.0 393.7,356.5 399.7,355.4 407.9,359.5 416.1,355.4 431.1,357.2 440.1,357.2 449.1,355.0 455.0,353.5 471.5,356.5 483.5,356.5 495.4,359.0 496.0,359.5 511.0,356.5 519.2,355.4 535.7,363.2 551.4,363.5 558.9,366.5 567.8,366.2 576.8,359.9 584.3,357.2 599.3,361.4 608.2,366.2 615.7,364.4 623.2,360.2 631.4,363.2 639.7,357.2 647.9,359.5 656.1,359.5 672.6,355.0 679.3,353.5 687.6,354.5 695.0,359.5 704.0,366.5 711.5,365.5 719.0,361.0" stroke="#00ff00"/>
</g>
<path d="M733 114 L743 114 L738 119 Z" fill="#8090a8" shape-rendering="auto"/>
</svg>
<div style="left:22px;top:113px;width:897px;height:128px;border:1px solid #fff"></div>
<div style="left:22px;top:243px;width:897px;height:34px;border:1px solid #fff"></div>
<div style="left:22px;top:279px;width:897px;height:49px;border:1px solid #fff"></div>
<div style="left:22px;top:330px;width:897px;height:48px;border:1px solid #fff"></div>
<div style="left:26px;top:116px;width:208px;height:11px;background:#000;"></div>
<div style="top:116px;height:12px;line-height:12px;font-size:9.5px;color:#fff;white-space:pre;left:27.00px;transform-origin:0 50%;transform:scaleX(0.9727);">GBPJPYm,M5  126.548 126.548 126.474 126.493</div>
<div style="top:126px;height:12px;line-height:12px;font-size:10px;color:#fff;white-space:pre;left:27.00px;transform-origin:0 50%;transform:scaleX(0.9436);">Cekame na profit 10.00, zatim -3.86</div>
<div style="top:246px;height:12px;line-height:12px;font-size:9.5px;color:#fff;white-space:pre;left:27.50px;transform-origin:0 50%;transform:scaleX(0.9660);">PL Orders -3.5100 -4.8500 -3.8600</div>
<div style="top:282px;height:12px;line-height:12px;font-size:9.5px;color:#fff;white-space:pre;left:27.50px;transform-origin:0 50%;transform:scaleX(0.9660);">PL Orders -0.4800 -1.6200 -0.8800</div>
<div style="top:334px;height:12px;line-height:12px;font-size:9.5px;color:#fff;white-space:pre;left:27.50px;transform-origin:0 50%;transform:scaleX(0.9660);">PL Orders -1.7200 -2.5300 -2.0600</div>
<div style="left:919px;top:142px;width:2px;height:1px;background:#fff;"></div>
<div style="top:136px;height:12px;line-height:12px;font-size:9.5px;color:#fff;white-space:pre;left:923.80px;transform-origin:0 50%;transform:scaleX(0.9464);">126.670</div>
<div style="left:919px;top:206px;width:2px;height:1px;background:#fff;"></div>
<div style="top:200px;height:12px;line-height:12px;font-size:9.5px;color:#fff;white-space:pre;left:923.80px;transform-origin:0 50%;transform:scaleX(0.9464);">126.440</div>
<div style="left:919px;top:238px;width:2px;height:1px;background:#fff;"></div>
<div style="top:231px;height:12px;line-height:12px;font-size:9.5px;color:#fff;white-space:pre;left:923.80px;transform-origin:0 50%;transform:scaleX(0.9464);">126.325</div>
<div style="left:920px;top:170px;width:38px;height:11px;background:#ff0000;"></div>
<div style="top:170px;height:12px;line-height:12px;font-size:9.5px;color:#300;white-space:pre;left:924.00px;transform-origin:0 50%;transform:scaleX(0.9464);">126.550</div>
<div style="left:920px;top:185px;width:38px;height:11px;background:#ffffff;"></div>
<div style="top:185px;height:12px;line-height:12px;font-size:9.5px;color:#000;white-space:pre;left:924.00px;transform-origin:0 50%;transform:scaleX(0.9464);">126.493</div>
<div style="left:919px;top:176px;width:2px;height:1px;background:#ff0000;"></div>
<div style="top:238px;height:12px;line-height:12px;font-size:9.5px;color:#fff;white-space:pre;left:922.00px;transform-origin:0 50%;transform:scaleX(0.9844);">0.00</div>
<div style="top:243px;height:12px;line-height:12px;font-size:9.5px;color:#fff;white-space:pre;left:922.00px;transform-origin:0 50%;transform:scaleX(0.9570);">0.297</div>
<div style="top:264px;height:12px;line-height:12px;font-size:9.5px;color:#fff;white-space:pre;left:922.00px;transform-origin:0 50%;transform:scaleX(1.0135);">-6.237</div>
<div style="top:280px;height:12px;line-height:12px;font-size:9.5px;color:#fff;white-space:pre;left:922.00px;transform-origin:0 50%;transform:scaleX(0.9396);">1.1495</div>
<div style="top:286px;height:12px;line-height:12px;font-size:9.5px;color:#fff;white-space:pre;left:922.00px;transform-origin:0 50%;transform:scaleX(0.9844);">0.00</div>
<div style="top:315px;height:12px;line-height:12px;font-size:9.5px;color:#fff;white-space:pre;left:922.00px;transform-origin:0 50%;transform:scaleX(0.9885);">-3.2395</div>
<div style="top:331px;height:12px;line-height:12px;font-size:9.5px;color:#fff;white-space:pre;left:922.00px;transform-origin:0 50%;transform:scaleX(0.9396);">1.7705</div>
<div style="top:340px;height:12px;line-height:12px;font-size:9.5px;color:#fff;white-space:pre;left:922.00px;transform-origin:0 50%;transform:scaleX(0.9844);">0.00</div>
<div style="top:364px;height:12px;line-height:12px;font-size:9.5px;color:#fff;white-space:pre;left:922.00px;transform-origin:0 50%;transform:scaleX(0.9885);">-3.5205</div>
<div style="left:919px;top:245px;width:3px;height:1px;background:#fff;"></div>
<div style="left:919px;top:292px;width:3px;height:1px;background:#fff;"></div>
<div style="left:919px;top:346px;width:3px;height:1px;background:#fff;"></div>
<div style="left:87px;top:377px;width:1px;height:4px;background:#fff;"></div>
<div style="top:381px;height:12px;line-height:12px;font-size:9.5px;color:#fff;white-space:pre;left:87.30px;transform-origin:0 50%;transform:scaleX(0.9679);">18 Aug 00:55</div>
<div style="left:151px;top:377px;width:1px;height:4px;background:#fff;"></div>
<div style="top:381px;height:12px;line-height:12px;font-size:9.5px;color:#fff;white-space:pre;left:151.30px;transform-origin:0 50%;transform:scaleX(0.9679);">18 Aug 01:35</div>
<div style="left:215px;top:377px;width:1px;height:4px;background:#fff;"></div>
<div style="top:381px;height:12px;line-height:12px;font-size:9.5px;color:#fff;white-space:pre;left:215.30px;transform-origin:0 50%;transform:scaleX(0.9679);">18 Aug 02:15</div>
<div style="left:279px;top:377px;width:1px;height:4px;background:#fff;"></div>
<div style="top:381px;height:12px;line-height:12px;font-size:9.5px;color:#fff;white-space:pre;left:279.30px;transform-origin:0 50%;transform:scaleX(0.9679);">18 Aug 02:55</div>
<div style="left:343px;top:377px;width:1px;height:4px;background:#fff;"></div>
<div style="top:381px;height:12px;line-height:12px;font-size:9.5px;color:#fff;white-space:pre;left:343.30px;transform-origin:0 50%;transform:scaleX(0.9679);">18 Aug 03:35</div>
<div style="left:407px;top:377px;width:1px;height:4px;background:#fff;"></div>
<div style="top:381px;height:12px;line-height:12px;font-size:9.5px;color:#fff;white-space:pre;left:407.30px;transform-origin:0 50%;transform:scaleX(0.9679);">18 Aug 04:15</div>
<div style="left:471px;top:377px;width:1px;height:4px;background:#fff;"></div>
<div style="top:381px;height:12px;line-height:12px;font-size:9.5px;color:#fff;white-space:pre;left:471.30px;transform-origin:0 50%;transform:scaleX(0.9679);">18 Aug 04:55</div>
<div style="left:535px;top:377px;width:1px;height:4px;background:#fff;"></div>
<div style="top:381px;height:12px;line-height:12px;font-size:9.5px;color:#fff;white-space:pre;left:535.30px;transform-origin:0 50%;transform:scaleX(0.9679);">18 Aug 05:35</div>
<div style="left:599px;top:377px;width:1px;height:4px;background:#fff;"></div>
<div style="top:381px;height:12px;line-height:12px;font-size:9.5px;color:#fff;white-space:pre;left:599.30px;transform-origin:0 50%;transform:scaleX(0.9679);">18 Aug 06:15</div>
<div style="left:663px;top:377px;width:1px;height:4px;background:#fff;"></div>
<div style="top:381px;height:12px;line-height:12px;font-size:9.5px;color:#fff;white-space:pre;left:663.30px;transform-origin:0 50%;transform:scaleX(0.9679);">18 Aug 06:55</div>
<div style="left:23px;top:377px;width:1px;height:4px;background:#fff;"></div>
<div style="left:20px;top:381px;width:67px;height:11px;background:#ff0000;"></div>
<div style="left:20px;top:381px;width:67px;height:11px;overflow:hidden">
<div style="top:0px;height:12px;line-height:12px;font-size:9.5px;color:#400;white-space:pre;left:-7.50px;transform-origin:0 50%;">2011.08.18 00:30</div>
</div>
<div style="top:114px;height:15px;line-height:15px;font-size:13px;color:#9acd32;white-space:pre;left:726.00px;transform-origin:0 50%;transform:scaleX(1.0221);">GBPJPYm</div>
<div style="top:117px;height:12px;line-height:12px;font-size:9.5px;color:#fff;white-space:pre;left:825.60px;transform-origin:0 50%;">DONNY90K 1.00</div>
<div style="left:903px;top:117px;width:9px;height:9px;border:1px solid #fff;border-radius:50%;box-sizing:border-box"></div>
<div style="top:115px;height:18px;line-height:18px;font-size:16px;color:#9acd32;white-space:pre;font-weight:bold;left:852.50px;transform-origin:0 50%;transform:scaleX(0.9510);">126.49</div>
<div style="top:115px;height:18px;line-height:18px;font-size:16px;color:#ffd700;white-space:pre;font-weight:bold;left:899.04px;transform-origin:0 50%;transform:scaleX(0.9510);">3</div>
<div style="left:736px;top:132px;width:172px;height:1px;background:#808080;"></div>
<div style="left:736px;top:178px;width:172px;height:1px;background:#808080;"></div>
<div style="left:736px;top:206px;width:172px;height:1px;background:#808080;"></div>
<div style="top:136px;height:15px;line-height:15px;font-size:13px;color:#808080;white-space:pre;left:768.00px;transform-origin:0 50%;transform:scaleX(0.9799);">change/range :</div>
<div style="top:135px;height:16px;line-height:16px;font-size:14px;color:#ffd700;white-space:pre;font-weight:bold;left:873.50px;transform-origin:0 50%;transform:scaleX(0.8691);">-16/41</div>
<div style="top:147px;height:15px;line-height:15px;font-size:13px;color:#808080;white-space:pre;left:740.00px;transform-origin:0 50%;">distance from high :</div>
<div style="top:147px;height:16px;line-height:16px;font-size:14px;color:#9acd32;white-space:pre;left:890.50px;transform-origin:0 50%;transform:scaleX(0.8649);">-25</div>
<div style="top:159px;height:15px;line-height:15px;font-size:13px;color:#808080;white-space:pre;left:745.00px;transform-origin:0 50%;">distance from low :</div>
<div style="top:158px;height:16px;line-height:16px;font-size:14px;color:#9acd32;white-space:pre;left:891.50px;transform-origin:0 50%;transform:scaleX(0.8154);">-16</div>
<div style="top:180px;height:15px;line-height:15px;font-size:13px;color:#808080;white-space:pre;left:788.00px;transform-origin:0 50%;transform:scaleX(0.9883);">swap long :</div>
<div style="top:179px;height:16px;line-height:16px;font-size:14px;color:#9acd32;white-space:pre;left:880.00px;transform-origin:0 50%;transform:scaleX(0.8775);">-0.25</div>
<div style="top:191px;height:15px;line-height:15px;font-size:13px;color:#808080;white-space:pre;left:783.00px;transform-origin:0 50%;">swap short :</div>
<div style="top:191px;height:16px;line-height:16px;font-size:14px;color:#9acd32;white-space:pre;left:880.00px;transform-origin:0 50%;transform:scaleX(0.8775);">-0.79</div>
<div style="left:47px;top:114px;width:1px;height:264px;background:#ff0000;"></div>
<svg style="left:976px;top:110px" width="941" height="286" viewBox="976 110 941 286" shape-rendering="crispEdges" >
<line x1="982" x2="1876" y1="114.5" y2="114.5" stroke="#32cd32" stroke-width="1" stroke-dasharray="9 6 3 6" stroke-dashoffset="0"/>
<line x1="982" x2="1876" y1="132.5" y2="132.5" stroke="#32cd32" stroke-width="1" stroke-dasharray="9 6 3 6" stroke-dashoffset="0"/>
<line x1="982" x2="1876" y1="167.5" y2="167.5" stroke="#32cd32" stroke-width="1" stroke-dasharray="9 6 3 6" stroke-dashoffset="0"/>
<line x1="982" x2="1876" y1="184.5" y2="184.5" stroke="#32cd32" stroke-width="1" stroke-dasharray="9 6 3 6" stroke-dashoffset="0"/>
<line x1="982" x2="1876" y1="202.5" y2="202.5" stroke="#32cd32" stroke-width="1" stroke-dasharray="9 6 3 6" stroke-dashoffset="0"/>
<line x1="982" x2="1876" y1="220.5" y2="220.5" stroke="#32cd32" stroke-width="1" stroke-dasharray="9 6 3 6" stroke-dashoffset="0"/>
<line x1="982" x2="1876" y1="235.5" y2="235.5" stroke="#32cd32" stroke-width="1" stroke-dasharray="9 6 3 6" stroke-dashoffset="0"/>
<line x1="982" x2="1876" y1="238.5" y2="238.5" stroke="#32cd32" stroke-width="1" stroke-dasharray="9 6 3 6" stroke-dashoffset="0"/>
<line x1="982" x2="1876" y1="255.5" y2="255.5" stroke="#32cd32" stroke-width="1" stroke-dasharray="9 6 3 6" stroke-dashoffset="0"/>
<line x1="982" x2="1876" y1="257.5" y2="257.5" stroke="#32cd32" stroke-width="1" stroke-dasharray="9 6 3 6" stroke-dashoffset="0"/>
<line x1="982" x2="1876" y1="273.5" y2="273.5" stroke="#32cd32" stroke-width="1" stroke-dasharray="9 6 3 6" stroke-dashoffset="0"/>
<line x1="982" x2="1876" y1="276.5" y2="276.5" stroke="#32cd32" stroke-width="1" stroke-dasharray="9 6 3 6" stroke-dashoffset="0"/>
<line x1="982" x2="1876" y1="300.5" y2="300.5" stroke="#32cd32" stroke-width="1" stroke-dasharray="9 6 3 6" stroke-dashoffset="0"/>
<line x1="982" x2="1876" y1="305.5" y2="305.5" stroke="#32cd32" stroke-width="1" stroke-dasharray="9 6 3 6" stroke-dashoffset="0"/>
<line x1="982" x2="1876" y1="309.5" y2="309.5" stroke="#32cd32" stroke-width="1" stroke-dasharray="9 6 3 6" stroke-dashoffset="0"/>
<line x1="982" x2="1876" y1="321.5" y2="321.5" stroke="#32cd32" stroke-width="1" stroke-dasharray="9 6 3 6" stroke-dashoffset="0"/>
<line x1="982" x2="1876" y1="341.5" y2="341.5" stroke="#32cd32" stroke-width="1" stroke-dasharray="9 6 3 6" stroke-dashoffset="0"/>
<line x1="982" x2="1876" y1="344.5" y2="344.5" stroke="#32cd32" stroke-width="1" stroke-dasharray="9 6 3 6" stroke-dashoffset="0"/>
<line x1="982" x2="1876" y1="362.5" y2="362.5" stroke="#32cd32" stroke-width="1" stroke-dasharray="9 6 3 6" stroke-dashoffset="0"/>
<line x1="982" x2="1876" y1="364.5" y2="364.5" stroke="#32cd32" stroke-width="1" stroke-dasharray="9 6 3 6" stroke-dashoffset="0"/>
<line x1="982" x2="1876" y1="327.5" y2="327.5" stroke="#32cd32" stroke-width="1" stroke-dasharray="9 6 3 6" stroke-dashoffset="0"/>
<rect x="981" y="331" width="895" height="1" fill="#808890"/>
<line x1="1437.5" x2="1437.5" y1="114" y2="374" stroke="#fff" stroke-width="1" stroke-dasharray="3 1"/>
</svg>
<div style="left:984.80px;top:122px;width:85.5px;height:10px;background:#000;overflow:hidden">
<div style="top:0px;height:12px;line-height:12px;font-size:10px;color:#fff;white-space:pre;left:1.50px;transform-origin:0 50%;transform:scaleX(0.9413);">#41914911 sell limit</div>
</div>
<div style="left:984.80px;top:157px;width:85.5px;height:10px;background:#000;overflow:hidden">
<div style="top:0px;height:12px;line-height:12px;font-size:10px;color:#fff;white-space:pre;left:1.50px;transform-origin:0 50%;transform:scaleX(0.9334);">#41914906 sell limit</div>
</div>
<div style="left:984.80px;top:173px;width:85.5px;height:10px;background:#000;overflow:hidden">
<div style="top:0px;height:12px;line-height:12px;font-size:10px;color:#fff;white-space:pre;left:1.50px;transform-origin:0 50%;transform:scaleX(0.9334);">#41914904 sell limit</div>
</div>
<div style="left:984.80px;top:191px;width:85.5px;height:10px;background:#000;overflow:hidden">
<div style="top:0px;height:12px;line-height:12px;font-size:10px;color:#fff;white-space:pre;left:1.50px;transform-origin:0 50%;transform:scaleX(0.9334);">#41914902 sell limit</div>
</div>
<div style="left:984.80px;top:209px;width:85.5px;height:10px;background:#000;overflow:hidden">
<div style="top:0px;height:12px;line-height:12px;font-size:10px;color:#fff;white-space:pre;left:1.50px;transform-origin:0 50%;transform:scaleX(0.9334);">#41914900 sell limit</div>
</div>
<div style="left:984.80px;top:224px;width:85.5px;height:10px;background:#000;overflow:hidden">
<div style="top:0px;height:12px;line-height:12px;font-size:10px;color:#fff;white-space:pre;left:1.50px;transform-origin:0 50%;transform:scaleX(0.9334);">#41914755 sell limit</div>
</div>
<div style="left:984.80px;top:227px;width:85.5px;height:10px;background:#000;overflow:hidden">
<div style="top:0px;height:12px;line-height:12px;font-size:10px;color:#fff;white-space:pre;left:1.50px;transform-origin:0 50%;transform:scaleX(0.9334);">#41914898 sell limit</div>
</div>
<div style="left:984.80px;top:246px;width:85.5px;height:10px;background:#000;overflow:hidden">
<div style="top:0px;height:12px;line-height:12px;font-size:10px;color:#fff;white-space:pre;left:1.50px;transform-origin:0 50%;transform:scaleX(0.9334);">#41915563 sell limit</div>
</div>
<div style="left:984.80px;top:262px;width:65.7px;height:10px;background:#000;overflow:hidden">
<div style="top:0px;height:12px;line-height:12px;font-size:10px;color:#fff;white-space:pre;left:1.50px;transform-origin:0 50%;transform:scaleX(0.9243);">#41914894 sell</div>
</div>
<div style="left:984.80px;top:290px;width:65.7px;height:10px;background:#000;overflow:hidden">
<div style="top:0px;height:12px;line-height:12px;font-size:10px;color:#fff;white-space:pre;left:1.50px;transform-origin:0 50%;transform:scaleX(0.9243);">#41915561 sell</div>
</div>
<div style="left:984.80px;top:299px;width:65.7px;height:10px;background:#000;overflow:hidden">
<div style="top:0px;height:12px;line-height:12px;font-size:10px;color:#fff;white-space:pre;left:1.50px;transform-origin:0 50%;transform:scaleX(0.9243);">#41914895 sell</div>
</div>
<div style="left:984.80px;top:310px;width:65.7px;height:10px;background:#000;overflow:hidden">
<div style="top:0px;height:12px;line-height:12px;font-size:10px;color:#fff;white-space:pre;left:1.50px;transform-origin:0 50%;transform:scaleX(0.9243);">#41915562 sell</div>
</div>
<div style="left:984.80px;top:316px;width:65.7px;height:10px;background:#000;overflow:hidden">
<div style="top:0px;height:12px;line-height:12px;font-size:10px;color:#fff;white-space:pre;left:1.50px;transform-origin:0 50%;transform:scaleX(0.9243);">#41914897 sell</div>
</div>
<div style="left:984.80px;top:330px;width:65.7px;height:10px;background:#000;overflow:hidden">
<div style="top:0px;height:12px;line-height:12px;font-size:10px;color:#fff;white-space:pre;left:1.50px;transform-origin:0 50%;transform:scaleX(0.9243);">#41914756 sell</div>
</div>
<div style="left:984.80px;top:334px;width:65.7px;height:10px;background:#000;overflow:hidden">
<div style="top:0px;height:12px;line-height:12px;font-size:10px;color:#fff;white-space:pre;left:1.50px;transform-origin:0 50%;transform:scaleX(0.9243);">#41914899 sell</div>
</div>
<div style="left:984.80px;top:353px;width:65.7px;height:10px;background:#000;overflow:hidden">
<div style="top:0px;height:12px;line-height:12px;font-size:10px;color:#fff;white-space:pre;left:1.50px;transform-origin:0 50%;transform:scaleX(0.9243);">#41915564 sell</div>
</div>
<svg style="left:976px;top:110px" width="941" height="286" viewBox="976 110 941 286" shape-rendering="crispEdges" >
<clipPath id="cl2"><rect x="981" y="114" width="895" height="263"/></clipPath><g clip-path="url(#cl2)">
<rect x="981" y="261" width="1" height="23" fill="#00ff00"/>
<rect x="979" y="269" width="5" height="9" fill="#00ff00"/>
<rect x="980" y="270" width="3" height="7" fill="#ff0000"/>
<rect x="989" y="272" width="1" height="18" fill="#00ff00"/>
<rect x="987" y="279" width="5" height="8" fill="#00ff00"/>
<rect x="988" y="280" width="3" height="6" fill="#ff0000"/>
<rect x="997" y="259" width="1" height="31" fill="#00ff00"/>
<rect x="995" y="266" width="5" height="21" fill="#00ff00"/>
<rect x="1005" y="253" width="1" height="24" fill="#00ff00"/>
<rect x="1003" y="256" width="5" height="12" fill="#00ff00"/>
<rect x="1013" y="219" width="1" height="38" fill="#00ff00"/>
<rect x="1011" y="240" width="5" height="17" fill="#00ff00"/>
<rect x="1021" y="204" width="1" height="41" fill="#00ff00"/>
<rect x="1019" y="214" width="5" height="28" fill="#00ff00"/>
<rect x="1029" y="178" width="1" height="52" fill="#00ff00"/>
<rect x="1027" y="187" width="5" height="28" fill="#00ff00"/>
<rect x="1037" y="173" width="1" height="28" fill="#00ff00"/>
<rect x="1035" y="188" width="5" height="12" fill="#00ff00"/>
<rect x="1036" y="189" width="3" height="10" fill="#ff0000"/>
<rect x="1045" y="175" width="1" height="34" fill="#00ff00"/>
<rect x="1043" y="178" width="5" height="22" fill="#00ff00"/>
<rect x="1053" y="146" width="1" height="63" fill="#00ff00"/>
<rect x="1051" y="178" width="5" height="20" fill="#00ff00"/>
<rect x="1052" y="179" width="3" height="18" fill="#ff0000"/>
<rect x="1061" y="184" width="1" height="23" fill="#00ff00"/>
<rect x="1059" y="190" width="5" height="9" fill="#00ff00"/>
<rect x="1069" y="181" width="1" height="39" fill="#00ff00"/>
<rect x="1067" y="193" width="5" height="22" fill="#00ff00"/>
<rect x="1068" y="194" width="3" height="20" fill="#ff0000"/>
<rect x="1077" y="202" width="1" height="18" fill="#00ff00"/>
<rect x="1075" y="208" width="5" height="8" fill="#00ff00"/>
<rect x="1085" y="171" width="1" height="41" fill="#00ff00"/>
<rect x="1083" y="172" width="5" height="36" fill="#00ff00"/>
<rect x="1093" y="161" width="1" height="30" fill="#00ff00"/>
<rect x="1091" y="172" width="5" height="12" fill="#00ff00"/>
<rect x="1092" y="173" width="3" height="10" fill="#ff0000"/>
<rect x="1101" y="155" width="1" height="40" fill="#00ff00"/>
<rect x="1099" y="168" width="5" height="16" fill="#00ff00"/>
<rect x="1109" y="128" width="1" height="41" fill="#00ff00"/>
<rect x="1107" y="142" width="5" height="27" fill="#00ff00"/>
<rect x="1117" y="135" width="1" height="55" fill="#00ff00"/>
<rect x="1115" y="143" width="5" height="23" fill="#00ff00"/>
<rect x="1116" y="144" width="3" height="21" fill="#ff0000"/>
<rect x="1125" y="163" width="1" height="33" fill="#00ff00"/>
<rect x="1123" y="166" width="5" height="9" fill="#00ff00"/>
<rect x="1124" y="167" width="3" height="7" fill="#ff0000"/>
<rect x="1133" y="175" width="1" height="41" fill="#00ff00"/>
<rect x="1131" y="176" width="5" height="20" fill="#00ff00"/>
<rect x="1132" y="177" width="3" height="18" fill="#ff0000"/>
<rect x="1141" y="192" width="1" height="65" fill="#00ff00"/>
<rect x="1139" y="196" width="5" height="45" fill="#00ff00"/>
<rect x="1140" y="197" width="3" height="43" fill="#ff0000"/>
<rect x="1149" y="219" width="1" height="30" fill="#00ff00"/>
<rect x="1147" y="241" width="5" height="4" fill="#00ff00"/>
<rect x="1148" y="242" width="3" height="2" fill="#ff0000"/>
<rect x="1157" y="240" width="1" height="40" fill="#00ff00"/>
<rect x="1155" y="244" width="5" height="25" fill="#00ff00"/>
<rect x="1156" y="245" width="3" height="23" fill="#ff0000"/>
<rect x="1165" y="257" width="1" height="40" fill="#00ff00"/>
<rect x="1163" y="269" width="5" height="17" fill="#00ff00"/>
<rect x="1164" y="270" width="3" height="15" fill="#ff0000"/>
<rect x="1173" y="264" width="1" height="34" fill="#00ff00"/>
<rect x="1171" y="272" width="5" height="15" fill="#00ff00"/>
<rect x="1181" y="270" width="1" height="22" fill="#00ff00"/>
<rect x="1179" y="272" width="5" height="2" fill="#00ff00"/>
<rect x="1189" y="248" width="1" height="32" fill="#00ff00"/>
<rect x="1187" y="249" width="5" height="25" fill="#00ff00"/>
<rect x="1197" y="236" width="1" height="21" fill="#00ff00"/>
<rect x="1195" y="243" width="5" height="7" fill="#00ff00"/>
<rect x="1205" y="241" width="1" height="35" fill="#00ff00"/>
<rect x="1203" y="242" width="5" height="25" fill="#00ff00"/>
<rect x="1204" y="243" width="3" height="23" fill="#ff0000"/>
<rect x="1213" y="257" width="1" height="28" fill="#00ff00"/>
<rect x="1211" y="264" width="5" height="4" fill="#00ff00"/>
<rect x="1221" y="251" width="1" height="22" fill="#00ff00"/>
<rect x="1219" y="264" width="5" height="8" fill="#00ff00"/>
<rect x="1220" y="265" width="3" height="6" fill="#ff0000"/>
<rect x="1229" y="260" width="1" height="23" fill="#00ff00"/>
<rect x="1227" y="263" width="5" height="10" fill="#00ff00"/>
<rect x="1237" y="241" width="1" height="25" fill="#00ff00"/>
<rect x="1235" y="257" width="5" height="5" fill="#00ff00"/>
<rect x="1245" y="239" width="1" height="18" fill="#00ff00"/>
<rect x="1243" y="241" width="5" height="16" fill="#00ff00"/>
<rect x="1253" y="239" width="1" height="14" fill="#00ff00"/>
<rect x="1251" y="241" width="5" height="9" fill="#00ff00"/>
<rect x="1252" y="242" width="3" height="7" fill="#ff0000"/>
<rect x="1261" y="241" width="1" height="21" fill="#00ff00"/>
<rect x="1259" y="250" width="5" height="3" fill="#00ff00"/>
<rect x="1260" y="251" width="3" height="1" fill="#ff0000"/>
<rect x="1269" y="242" width="1" height="22" fill="#00ff00"/>
<rect x="1267" y="244" width="5" height="10" fill="#00ff00"/>
<rect x="1277" y="243" width="1" height="13" fill="#00ff00"/>
<rect x="1275" y="244" width="5" height="3" fill="#00ff00"/>
<rect x="1276" y="245" width="3" height="1" fill="#ff0000"/>
<rect x="1285" y="237" width="1" height="14" fill="#00ff00"/>
<rect x="1283" y="246" width="5" height="3" fill="#00ff00"/>
<rect x="1284" y="247" width="3" height="1" fill="#ff0000"/>
<rect x="1293" y="248" width="1" height="18" fill="#00ff00"/>
<rect x="1291" y="249" width="5" height="14" fill="#00ff00"/>
<rect x="1292" y="250" width="3" height="12" fill="#ff0000"/>
<rect x="1301" y="261" width="1" height="15" fill="#00ff00"/>
<rect x="1299" y="263" width="5" height="11" fill="#00ff00"/>
<rect x="1300" y="264" width="3" height="9" fill="#ff0000"/>
<rect x="1309" y="259" width="1" height="16" fill="#00ff00"/>
<rect x="1307" y="264" width="5" height="10" fill="#00ff00"/>
<rect x="1317" y="263" width="1" height="10" fill="#00ff00"/>
<rect x="1315" y="264" width="5" height="6" fill="#00ff00"/>
<rect x="1316" y="265" width="3" height="4" fill="#ff0000"/>
<rect x="1325" y="270" width="1" height="12" fill="#00ff00"/>
<rect x="1323" y="270" width="5" height="5" fill="#00ff00"/>
<rect x="1324" y="271" width="3" height="3" fill="#ff0000"/>
<rect x="1333" y="272" width="1" height="21" fill="#00ff00"/>
<rect x="1331" y="275" width="5" height="16" fill="#00ff00"/>
<rect x="1332" y="276" width="3" height="14" fill="#ff0000"/>
<rect x="1341" y="284" width="1" height="12" fill="#00ff00"/>
<rect x="1339" y="289" width="5" height="6" fill="#00ff00"/>
<rect x="1349" y="266" width="1" height="25" fill="#00ff00"/>
<rect x="1347" y="270" width="5" height="20" fill="#00ff00"/>
<rect x="1357" y="270" width="1" height="24" fill="#00ff00"/>
<rect x="1355" y="270" width="5" height="21" fill="#00ff00"/>
<rect x="1356" y="271" width="3" height="19" fill="#ff0000"/>
<rect x="1365" y="287" width="1" height="8" fill="#00ff00"/>
<rect x="1363" y="291" width="5" height="2" fill="#00ff00"/>
<rect x="1364" y="291" width="3" height="2" fill="#ff0000"/>
<rect x="1373" y="286" width="1" height="8" fill="#00ff00"/>
<rect x="1371" y="291" width="5" height="2" fill="#00ff00"/>
<rect x="1381" y="284" width="1" height="8" fill="#00ff00"/>
<rect x="1379" y="289" width="5" height="2" fill="#00ff00"/>
<rect x="1389" y="281" width="1" height="10" fill="#00ff00"/>
<rect x="1387" y="287" width="5" height="3" fill="#00ff00"/>
<rect x="1397" y="282" width="1" height="11" fill="#00ff00"/>
<rect x="1395" y="284" width="5" height="4" fill="#00ff00"/>
<rect x="1405" y="273" width="1" height="16" fill="#00ff00"/>
<rect x="1403" y="285" width="5" height="4" fill="#00ff00"/>
<rect x="1404" y="286" width="3" height="2" fill="#ff0000"/>
<rect x="1413" y="284" width="1" height="11" fill="#00ff00"/>
<rect x="1411" y="285" width="5" height="5" fill="#00ff00"/>
<rect x="1421" y="277" width="1" height="12" fill="#00ff00"/>
<rect x="1419" y="285" width="5" height="1" fill="#00ff00"/>
<rect x="1429" y="282" width="1" height="13" fill="#00ff00"/>
<rect x="1427" y="285" width="5" height="1" fill="#00ff00"/>
<rect x="1437" y="283" width="1" height="36" fill="#00ff00"/>
<rect x="1435" y="286" width="5" height="24" fill="#00ff00"/>
<rect x="1436" y="287" width="3" height="22" fill="#ff0000"/>
<rect x="1445" y="305" width="1" height="16" fill="#00ff00"/>
<rect x="1443" y="310" width="5" height="1" fill="#00ff00"/>
<rect x="1453" y="305" width="1" height="12" fill="#00ff00"/>
<rect x="1451" y="310" width="5" height="6" fill="#00ff00"/>
<rect x="1452" y="311" width="3" height="4" fill="#ff0000"/>
<rect x="1461" y="310" width="1" height="20" fill="#00ff00"/>
<rect x="1459" y="312" width="5" height="5" fill="#00ff00"/>
<rect x="1469" y="307" width="1" height="20" fill="#00ff00"/>
<rect x="1467" y="312" width="5" height="14" fill="#00ff00"/>
<rect x="1468" y="313" width="3" height="12" fill="#ff0000"/>
<rect x="1477" y="319" width="1" height="19" fill="#00ff00"/>
<rect x="1475" y="322" width="5" height="5" fill="#00ff00"/>
<rect x="1485" y="322" width="1" height="22" fill="#00ff00"/>
<rect x="1483" y="322" width="5" height="21" fill="#00ff00"/>
<rect x="1484" y="323" width="3" height="19" fill="#ff0000"/>
<rect x="1493" y="327" width="1" height="18" fill="#00ff00"/>
<rect x="1491" y="331" width="5" height="13" fill="#00ff00"/>
<rect x="1501" y="331" width="1" height="20" fill="#00ff00"/>
<rect x="1499" y="332" width="5" height="16" fill="#00ff00"/>
<rect x="1500" y="333" width="3" height="14" fill="#ff0000"/>
<rect x="1509" y="342" width="1" height="13" fill="#00ff00"/>
<rect x="1507" y="346" width="5" height="2" fill="#00ff00"/>
<rect x="1517" y="325" width="1" height="25" fill="#00ff00"/>
<rect x="1515" y="329" width="5" height="17" fill="#00ff00"/>
<rect x="1525" y="327" width="1" height="18" fill="#00ff00"/>
<rect x="1523" y="329" width="5" height="14" fill="#00ff00"/>
<rect x="1524" y="330" width="3" height="12" fill="#ff0000"/>
<rect x="1533" y="336" width="1" height="11" fill="#00ff00"/>
<rect x="1531" y="340" width="5" height="4" fill="#00ff00"/>
<rect x="1541" y="319" width="1" height="22" fill="#00ff00"/>
<rect x="1539" y="328" width="5" height="13" fill="#00ff00"/>
<rect x="1549" y="319" width="1" height="18" fill="#00ff00"/>
<rect x="1547" y="328" width="5" height="1" fill="#00ff00"/>
<rect x="1557" y="321" width="1" height="10" fill="#00ff00"/>
<rect x="1555" y="323" width="5" height="5" fill="#00ff00"/>
<rect x="1565" y="324" width="1" height="37" fill="#00ff00"/>
<rect x="1563" y="324" width="5" height="32" fill="#00ff00"/>
<rect x="1564" y="325" width="3" height="30" fill="#ff0000"/>
<rect x="1573" y="349" width="1" height="14" fill="#00ff00"/>
<rect x="1571" y="352" width="5" height="3" fill="#00ff00"/>
<rect x="1581" y="346" width="1" height="20" fill="#00ff00"/>
<rect x="1579" y="353" width="5" height="11" fill="#00ff00"/>
<rect x="1580" y="354" width="3" height="9" fill="#ff0000"/>
<rect x="1589" y="352" width="1" height="15" fill="#00ff00"/>
<rect x="1587" y="352" width="5" height="12" fill="#00ff00"/>
<rect x="1597" y="341" width="1" height="15" fill="#00ff00"/>
<rect x="1595" y="344" width="5" height="9" fill="#00ff00"/>
<rect x="1605" y="340" width="1" height="21" fill="#00ff00"/>
<rect x="1603" y="344" width="5" height="5" fill="#00ff00"/>
<rect x="1604" y="345" width="3" height="3" fill="#ff0000"/>
<rect x="1613" y="299" width="1" height="52" fill="#00ff00"/>
<rect x="1611" y="329" width="5" height="20" fill="#00ff00"/>
<rect x="1621" y="296" width="1" height="35" fill="#00ff00"/>
<rect x="1619" y="316" width="5" height="14" fill="#00ff00"/>
<rect x="1629" y="315" width="1" height="43" fill="#00ff00"/>
<rect x="1627" y="316" width="5" height="24" fill="#00ff00"/>
<rect x="1628" y="317" width="3" height="22" fill="#ff0000"/>
<rect x="1637" y="304" width="1" height="40" fill="#00ff00"/>
<rect x="1635" y="319" width="5" height="22" fill="#00ff00"/>
<rect x="1645" y="312" width="1" height="43" fill="#00ff00"/>
<rect x="1643" y="319" width="5" height="24" fill="#00ff00"/>
<rect x="1644" y="320" width="3" height="22" fill="#ff0000"/>
<rect x="1653" y="328" width="1" height="27" fill="#00ff00"/>
<rect x="1651" y="338" width="5" height="5" fill="#00ff00"/>
<rect x="1661" y="324" width="1" height="45" fill="#00ff00"/>
<rect x="1659" y="338" width="5" height="6" fill="#00ff00"/>
<rect x="1660" y="339" width="3" height="4" fill="#ff0000"/>
<rect x="1669" y="302" width="1" height="45" fill="#00ff00"/>
<rect x="1667" y="312" width="5" height="32" fill="#00ff00"/>
<rect x="1677" y="312" width="1" height="22" fill="#00ff00"/>
<rect x="1675" y="312" width="5" height="18" fill="#00ff00"/>
<rect x="1676" y="313" width="3" height="16" fill="#ff0000"/>
</g>
<path d="M1690 114 L1700 114 L1695 119 Z" fill="#8090a8" shape-rendering="auto"/>
</svg>
<div style="left:980px;top:113px;width:897px;height:265px;border:1px solid #fff"></div>
<div style="left:984px;top:116px;width:217px;height:11px;background:#000;"></div>
<div style="top:116px;height:12px;line-height:12px;font-size:9.5px;color:#fff;white-space:pre;left:985.50px;transform-origin:0 50%;transform:scaleX(0.9731);">EURUSDm,M15  1.44123 1.44123 1.43998 1.44016</div>
<div style="left:1877px;top:119px;width:2px;height:1px;background:#fff;"></div>
<div style="top:113px;height:12px;line-height:12px;font-size:9.5px;color:#fff;white-space:pre;left:1883.10px;transform-origin:0 50%;transform:scaleX(0.9406);">1.45215</div>
<div style="left:1877px;top:151px;width:2px;height:1px;background:#fff;"></div>
<div style="top:145px;height:12px;line-height:12px;font-size:9.5px;color:#fff;white-space:pre;left:1883.10px;transform-origin:0 50%;transform:scaleX(0.9406);">1.45035</div>
<div style="left:1877px;top:183px;width:2px;height:1px;background:#fff;"></div>
<div style="top:177px;height:12px;line-height:12px;font-size:9.5px;color:#fff;white-space:pre;left:1883.10px;transform-origin:0 50%;transform:scaleX(0.9406);">1.44855</div>
<div style="left:1877px;top:215px;width:2px;height:1px;background:#fff;"></div>
<div style="top:209px;height:12px;line-height:12px;font-size:9.5px;color:#fff;white-space:pre;left:1883.10px;transform-origin:0 50%;transform:scaleX(0.9406);">1.44670</div>
<div style="left:1877px;top:247px;width:2px;height:1px;background:#fff;"></div>
<div style="top:241px;height:12px;line-height:12px;font-size:9.5px;color:#fff;white-space:pre;left:1883.10px;transform-origin:0 50%;transform:scaleX(0.9406);">1.44490</div>
<div style="left:1877px;top:279px;width:2px;height:1px;background:#fff;"></div>
<div style="top:273px;height:12px;line-height:12px;font-size:9.5px;color:#fff;white-space:pre;left:1883.10px;transform-origin:0 50%;transform:scaleX(0.9406);">1.44310</div>
<div style="left:1877px;top:311px;width:2px;height:1px;background:#fff;"></div>
<div style="top:305px;height:12px;line-height:12px;font-size:9.5px;color:#fff;white-space:pre;left:1883.10px;transform-origin:0 50%;transform:scaleX(0.9406);">1.44130</div>
<div style="left:1877px;top:343px;width:2px;height:1px;background:#fff;"></div>
<div style="top:337px;height:12px;line-height:12px;font-size:9.5px;color:#fff;white-space:pre;left:1883.10px;transform-origin:0 50%;transform:scaleX(0.9406);">1.43950</div>
<div style="left:1877px;top:375px;width:2px;height:1px;background:#fff;"></div>
<div style="top:369px;height:12px;line-height:12px;font-size:9.5px;color:#fff;white-space:pre;left:1883.10px;transform-origin:0 50%;transform:scaleX(0.9406);">1.43770</div>
<div style="left:1878px;top:321px;width:38px;height:5px;background:#ff0000;overflow:hidden">
<div style="top:-1px;height:12px;line-height:12px;font-size:9.5px;color:#200;white-space:pre;left:5.30px;transform-origin:0 50%;transform:scaleX(0.9406);">1.44039</div>
</div>
<div style="left:1878px;top:325px;width:38px;height:11px;background:#fff;"></div>
<div style="top:325px;height:12px;line-height:12px;font-size:9.5px;color:#000;white-space:pre;left:1883.30px;transform-origin:0 50%;transform:scaleX(0.9406);">1.44016</div>
<div style="left:981px;top:377px;width:1px;height:4px;background:#fff;"></div>
<div style="top:381px;height:12px;line-height:12px;font-size:9.5px;color:#fff;white-space:pre;left:981.30px;transform-origin:0 50%;transform:scaleX(0.9876);">17 Aug 2011</div>
<div style="left:1045px;top:377px;width:1px;height:4px;background:#fff;"></div>
<div style="top:381px;height:12px;line-height:12px;font-size:9.5px;color:#fff;white-space:pre;left:1045.30px;transform-origin:0 50%;transform:scaleX(0.9803);">17 Aug 11:45</div>
<div style="left:1109px;top:377px;width:1px;height:4px;background:#fff;"></div>
<div style="top:381px;height:12px;line-height:12px;font-size:9.5px;color:#fff;white-space:pre;left:1109.30px;transform-origin:0 50%;transform:scaleX(0.9679);">17 Aug 13:45</div>
<div style="left:1173px;top:377px;width:1px;height:4px;background:#fff;"></div>
<div style="top:381px;height:12px;line-height:12px;font-size:9.5px;color:#fff;white-space:pre;left:1173.30px;transform-origin:0 50%;transform:scaleX(0.9679);">17 Aug 15:45</div>
<div style="left:1237px;top:377px;width:1px;height:4px;background:#fff;"></div>
<div style="top:381px;height:12px;line-height:12px;font-size:9.5px;color:#fff;white-space:pre;left:1237.30px;transform-origin:0 50%;transform:scaleX(0.9679);">17 Aug 17:45</div>
<div style="left:1301px;top:377px;width:1px;height:4px;background:#fff;"></div>
<div style="top:381px;height:12px;line-height:12px;font-size:9.5px;color:#fff;white-space:pre;left:1301.30px;transform-origin:0 50%;transform:scaleX(0.9679);">17 Aug 19:45</div>
<div style="left:1365px;top:377px;width:1px;height:4px;background:#fff;"></div>
<div style="top:381px;height:12px;line-height:12px;font-size:9.5px;color:#fff;white-space:pre;left:1365.30px;transform-origin:0 50%;transform:scaleX(0.9679);">17 Aug 21:48</div>
<div style="left:1429px;top:377px;width:1px;height:4px;background:#fff;"></div>
<div style="top:381px;height:12px;line-height:12px;font-size:9.5px;color:#fff;white-space:pre;left:1429.30px;transform-origin:0 50%;transform:scaleX(0.9679);">17 Aug 23:48</div>
<div style="left:1493px;top:377px;width:1px;height:4px;background:#fff;"></div>
<div style="top:381px;height:12px;line-height:12px;font-size:9.5px;color:#fff;white-space:pre;left:1493.30px;transform-origin:0 50%;transform:scaleX(0.9679);">18 Aug 01:45</div>
<div style="left:1557px;top:377px;width:1px;height:4px;background:#fff;"></div>
<div style="top:381px;height:12px;line-height:12px;font-size:9.5px;color:#fff;white-space:pre;left:1557.30px;transform-origin:0 50%;transform:scaleX(0.9679);">18 Aug 03:45</div>
<div style="left:1621px;top:377px;width:1px;height:4px;background:#fff;"></div>
<div style="top:381px;height:12px;line-height:12px;font-size:9.5px;color:#fff;white-space:pre;left:1621.30px;transform-origin:0 50%;transform:scaleX(0.9679);">18 Aug 05:45</div>
<svg style="left:18px;top:437px" width="941" height="285" viewBox="18 437 941 285" shape-rendering="crispEdges" >
<rect x="600" y="492" width="120" height="38" fill="#26272b"/>
<line x1="24" x2="918" y1="441.5" y2="441.5" stroke="#32cd32" stroke-width="1" stroke-dasharray="9 6 3 6" stroke-dashoffset="0"/>
<line x1="24" x2="918" y1="451.5" y2="451.5" stroke="#32cd32" stroke-width="1" stroke-dasharray="9 6 3 6" stroke-dashoffset="0"/>
<line x1="24" x2="918" y1="459.5" y2="459.5" stroke="#32cd32" stroke-width="1" stroke-dasharray="9 6 3 6" stroke-dashoffset="0"/>
<line x1="24" x2="918" y1="461.5" y2="461.5" stroke="#32cd32" stroke-width="1" stroke-dasharray="9 6 3 6" stroke-dashoffset="0"/>
<line x1="24" x2="918" y1="469.5" y2="469.5" stroke="#32cd32" stroke-width="1" stroke-dasharray="9 6 3 6" stroke-dashoffset="0"/>
<line x1="24" x2="918" y1="471.5" y2="471.5" stroke="#32cd32" stroke-width="1" stroke-dasharray="9 6 3 6" stroke-dashoffset="0"/>
<line x1="24" x2="918" y1="494.5" y2="494.5" stroke="#000" stroke-width="1"/>
<line x1="24" x2="918" y1="494.5" y2="494.5" stroke="#32cd32" stroke-width="1" stroke-dasharray="9 6 3 6" stroke-dashoffset="0"/>
<line x1="24" x2="918" y1="496.5" y2="496.5" stroke="#000" stroke-width="1"/>
<line x1="24" x2="918" y1="496.5" y2="496.5" stroke="#32cd32" stroke-width="1" stroke-dasharray="9 6 3 6" stroke-dashoffset="0"/>
<line x1="24" x2="918" y1="500.5" y2="500.5" stroke="#000" stroke-width="1"/>
<line x1="24" x2="918" y1="500.5" y2="500.5" stroke="#32cd32" stroke-width="1" stroke-dasharray="9 6 3 6" stroke-dashoffset="0"/>
<line x1="24" x2="918" y1="502.5" y2="502.5" stroke="#000" stroke-width="1"/>
<line x1="24" x2="918" y1="502.5" y2="502.5" stroke="#32cd32" stroke-width="1" stroke-dasharray="9 6 3 6" stroke-dashoffset="0"/>
<line x1="24" x2="918" y1="506.5" y2="506.5" stroke="#000" stroke-width="1"/>
<line x1="24" x2="918" y1="506.5" y2="506.5" stroke="#32cd32" stroke-width="1" stroke-dasharray="9 6 3 6" stroke-dashoffset="0"/>
<line x1="24" x2="918" y1="512.5" y2="512.5" stroke="#000" stroke-width="1"/>
<line x1="24" x2="918" y1="512.5" y2="512.5" stroke="#32cd32" stroke-width="1" stroke-dasharray="9 6 3 6" stroke-dashoffset="0"/>
<line x1="24" x2="918" y1="520.5" y2="520.5" stroke="#000" stroke-width="1"/>
<line x1="24" x2="918" y1="520.5" y2="520.5" stroke="#32cd32" stroke-width="1" stroke-dasharray="9 6 3 6" stroke-dashoffset="0"/>
<line x1="24" x2="918" y1="523.5" y2="523.5" stroke="#000" stroke-width="1"/>
<line x1="24" x2="918" y1="523.5" y2="523.5" stroke="#32cd32" stroke-width="1" stroke-dasharray="9 6 3 6" stroke-dashoffset="0"/>
<line x1="24" x2="918" y1="531.5" y2="531.5" stroke="#32cd32" stroke-width="1" stroke-dasharray="9 6 3 6" stroke-dashoffset="0"/>
<line x1="24" x2="918" y1="533.5" y2="533.5" stroke="#32cd32" stroke-width="1" stroke-dasharray="9 6 3 6" stroke-dashoffset="0"/>
<line x1="24" x2="918" y1="543.5" y2="543.5" stroke="#32cd32" stroke-width="1" stroke-dasharray="9 6 3 6" stroke-dashoffset="0"/>
<line x1="24" x2="918" y1="553.5" y2="553.5" stroke="#32cd32" stroke-width="1" stroke-dasharray="9 6 3 6" stroke-dashoffset="0"/>
<line x1="24" x2="918" y1="564.5" y2="564.5" stroke="#32cd32" stroke-width="1" stroke-dasharray="9 6 3 6" stroke-dashoffset="0"/>
<line x1="24" x2="918" y1="483.5" y2="483.5" stroke="#32cd32" stroke-width="3" stroke-dasharray="9 6 3 6" stroke-dashoffset="0"/>
<rect x="23" y="513" width="895" height="1" fill="#8a8f98"/>
<line x1="215.5" x2="215.5" y1="441" y2="703" stroke="#fff" stroke-width="1" stroke-dasharray="3 1"/>
<line x1="599.5" x2="599.5" y1="441" y2="703" stroke="#fff" stroke-width="1" stroke-dasharray="3 1"/>
<rect x="783" y="493" width="1" height="38" fill="#a00000"/>
<rect x="782" y="493" width="3" height="30" fill="#ff0000"/>
</svg>
<div style="left:27.20px;top:459px;width:88.6px;height:10px;background:#000;overflow:hidden">
<div style="top:0px;height:12px;line-height:12px;font-size:10px;color:#fff;white-space:pre;left:1.50px;transform-origin:0 50%;transform:scaleX(0.9444);">#41915553 buy stop</div>
</div>
<div style="left:27.20px;top:474px;width:88.6px;height:10px;background:#000;overflow:hidden">
<div style="top:0px;height:12px;line-height:12px;font-size:10px;color:#fff;white-space:pre;left:1.50px;transform-origin:0 50%;transform:scaleX(0.9444);">#41914868 buy stop</div>
</div>
<div style="left:27.20px;top:484px;width:68.2px;height:10px;background:#000;overflow:hidden">
<div style="top:0px;height:12px;line-height:12px;font-size:10px;color:#fff;white-space:pre;left:1.50px;transform-origin:0 50%;transform:scaleX(0.9455);">#41915551 buy</div>
</div>
<div style="left:27.20px;top:494px;width:68.2px;height:10px;background:#000;overflow:hidden">
<div style="top:0px;height:12px;line-height:12px;font-size:10px;color:#fff;white-space:pre;left:1.50px;transform-origin:0 50%;transform:scaleX(0.9455);">#41915552 buy</div>
</div>
<div style="left:27.20px;top:501px;width:68.2px;height:10px;background:#000;overflow:hidden">
<div style="top:0px;height:12px;line-height:12px;font-size:10px;color:#fff;white-space:pre;left:1.50px;transform-origin:0 50%;transform:scaleX(0.9455);">#41914856 buy</div>
</div>
<div style="left:27.20px;top:521px;width:88.6px;height:10px;background:#000;overflow:hidden">
<div style="top:0px;height:12px;line-height:12px;font-size:10px;color:#fff;white-space:pre;left:1.50px;transform-origin:0 50%;transform:scaleX(0.9564);">#41915554 buy limit</div>
</div>
<div style="left:27.20px;top:506px;width:68.2px;height:10px;background:#000;overflow:hidden">
</div>
<div style="left:27.20px;top:513px;width:68.2px;height:10px;background:#000;overflow:hidden">
<div style="top:0px;height:12px;line-height:12px;font-size:10px;color:#fff;white-space:pre;left:1.50px;transform-origin:0 50%;transform:scaleX(0.9455);">#41914858 buy</div>
</div>
<div style="left:27.20px;top:533px;width:88.6px;height:10px;background:#000;overflow:hidden">
<div style="top:0px;height:12px;line-height:12px;font-size:10px;color:#fff;white-space:pre;left:1.50px;transform-origin:0 50%;transform:scaleX(0.9564);">#41914862 buy limit</div>
</div>
<div style="left:27.20px;top:543px;width:88.6px;height:10px;background:#000;overflow:hidden">
<div style="top:0px;height:12px;line-height:12px;font-size:10px;color:#fff;white-space:pre;left:1.50px;transform-origin:0 50%;transform:scaleX(0.9564);">#41914864 buy limit</div>
</div>
<div style="left:27.20px;top:554px;width:88.6px;height:10px;background:#000;overflow:hidden">
<div style="top:0px;height:12px;line-height:12px;font-size:10px;color:#fff;white-space:pre;left:1.50px;transform-origin:0 50%;transform:scaleX(0.9564);">#41914866 buy limit</div>
</div>
<svg style="left:18px;top:437px" width="941" height="285" viewBox="18 437 941 285" shape-rendering="crispEdges" >
<clipPath id="cl3"><rect x="23" y="441" width="895" height="133"/></clipPath><g clip-path="url(#cl3)">
<rect x="23" y="526" width="1" height="13" fill="#00ff00"/>
<rect x="21" y="528" width="5" height="2" fill="#00ff00"/>
<rect x="22" y="528" width="3" height="2" fill="#ff0000"/>
<rect x="31" y="511" width="1" height="22" fill="#00ff00"/>
<rect x="29" y="514" width="5" height="18" fill="#00ff00"/>
<rect x="39" y="466" width="1" height="49" fill="#00ff00"/>
<rect x="37" y="479" width="5" height="36" fill="#00ff00"/>
<rect x="47" y="477" width="1" height="15" fill="#00ff00"/>
<rect x="45" y="479" width="5" height="8" fill="#00ff00"/>
<rect x="46" y="480" width="3" height="6" fill="#ff0000"/>
<rect x="55" y="478" width="1" height="19" fill="#00ff00"/>
<rect x="53" y="480" width="5" height="7" fill="#00ff00"/>
<rect x="63" y="479" width="1" height="23" fill="#00ff00"/>
<rect x="61" y="481" width="5" height="21" fill="#00ff00"/>
<rect x="62" y="482" width="3" height="19" fill="#ff0000"/>
<rect x="71" y="497" width="1" height="12" fill="#00ff00"/>
<rect x="69" y="498" width="5" height="5" fill="#00ff00"/>
<rect x="79" y="472" width="1" height="28" fill="#00ff00"/>
<rect x="77" y="479" width="5" height="20" fill="#00ff00"/>
<rect x="87" y="453" width="1" height="47" fill="#00ff00"/>
<rect x="85" y="480" width="5" height="13" fill="#00ff00"/>
<rect x="86" y="481" width="3" height="11" fill="#ff0000"/>
<rect x="95" y="475" width="1" height="33" fill="#00ff00"/>
<rect x="93" y="493" width="5" height="1" fill="#00ff00"/>
<rect x="103" y="492" width="1" height="26" fill="#00ff00"/>
<rect x="101" y="494" width="5" height="19" fill="#00ff00"/>
<rect x="102" y="495" width="3" height="17" fill="#ff0000"/>
<rect x="111" y="491" width="1" height="25" fill="#00ff00"/>
<rect x="109" y="493" width="5" height="20" fill="#00ff00"/>
<rect x="119" y="478" width="1" height="17" fill="#00ff00"/>
<rect x="117" y="491" width="5" height="3" fill="#00ff00"/>
<rect x="127" y="485" width="1" height="18" fill="#00ff00"/>
<rect x="125" y="492" width="5" height="8" fill="#00ff00"/>
<rect x="126" y="493" width="3" height="6" fill="#ff0000"/>
<rect x="135" y="489" width="1" height="15" fill="#00ff00"/>
<rect x="133" y="489" width="5" height="11" fill="#00ff00"/>
<rect x="143" y="485" width="1" height="11" fill="#00ff00"/>
<rect x="141" y="488" width="5" height="1" fill="#00ff00"/>
<rect x="151" y="485" width="1" height="7" fill="#00ff00"/>
<rect x="149" y="488" width="5" height="1" fill="#00ff00"/>
<rect x="159" y="479" width="1" height="13" fill="#00ff00"/>
<rect x="157" y="484" width="5" height="6" fill="#00ff00"/>
<rect x="167" y="483" width="1" height="8" fill="#00ff00"/>
<rect x="165" y="485" width="5" height="2" fill="#00ff00"/>
<rect x="175" y="483" width="1" height="10" fill="#00ff00"/>
<rect x="173" y="486" width="5" height="2" fill="#00ff00"/>
<rect x="174" y="486" width="3" height="2" fill="#ff0000"/>
<rect x="183" y="487" width="1" height="9" fill="#00ff00"/>
<rect x="181" y="489" width="5" height="4" fill="#00ff00"/>
<rect x="182" y="490" width="3" height="2" fill="#ff0000"/>
<rect x="191" y="489" width="1" height="10" fill="#00ff00"/>
<rect x="189" y="493" width="5" height="5" fill="#00ff00"/>
<rect x="190" y="494" width="3" height="3" fill="#ff0000"/>
<rect x="199" y="493" width="1" height="15" fill="#00ff00"/>
<rect x="197" y="498" width="5" height="9" fill="#00ff00"/>
<rect x="198" y="499" width="3" height="7" fill="#ff0000"/>
<rect x="207" y="505" width="1" height="10" fill="#00ff00"/>
<rect x="205" y="507" width="5" height="5" fill="#00ff00"/>
<rect x="206" y="508" width="3" height="3" fill="#ff0000"/>
<rect x="215" y="508" width="1" height="25" fill="#00ff00"/>
<rect x="213" y="513" width="5" height="7" fill="#00ff00"/>
<rect x="214" y="514" width="3" height="5" fill="#ff0000"/>
<rect x="223" y="513" width="1" height="13" fill="#00ff00"/>
<rect x="221" y="517" width="5" height="4" fill="#00ff00"/>
<rect x="231" y="515" width="1" height="18" fill="#00ff00"/>
<rect x="229" y="517" width="5" height="14" fill="#00ff00"/>
<rect x="230" y="518" width="3" height="12" fill="#ff0000"/>
<rect x="239" y="521" width="1" height="12" fill="#00ff00"/>
<rect x="237" y="526" width="5" height="4" fill="#00ff00"/>
<rect x="247" y="521" width="1" height="11" fill="#00ff00"/>
<rect x="245" y="525" width="5" height="2" fill="#00ff00"/>
<rect x="255" y="509" width="1" height="14" fill="#00ff00"/>
<rect x="253" y="513" width="5" height="10" fill="#00ff00"/>
<rect x="263" y="513" width="1" height="9" fill="#00ff00"/>
<rect x="261" y="514" width="5" height="6" fill="#00ff00"/>
<rect x="262" y="515" width="3" height="4" fill="#ff0000"/>
<rect x="271" y="508" width="1" height="15" fill="#00ff00"/>
<rect x="269" y="511" width="5" height="8" fill="#00ff00"/>
<rect x="279" y="505" width="1" height="8" fill="#00ff00"/>
<rect x="277" y="506" width="5" height="6" fill="#00ff00"/>
<rect x="287" y="496" width="1" height="13" fill="#00ff00"/>
<rect x="285" y="499" width="5" height="7" fill="#00ff00"/>
<rect x="295" y="492" width="1" height="11" fill="#00ff00"/>
<rect x="293" y="499" width="5" height="2" fill="#00ff00"/>
<rect x="294" y="499" width="3" height="2" fill="#ff0000"/>
<rect x="303" y="499" width="1" height="9" fill="#00ff00"/>
<rect x="301" y="502" width="5" height="5" fill="#00ff00"/>
<rect x="302" y="503" width="3" height="3" fill="#ff0000"/>
<rect x="311" y="504" width="1" height="18" fill="#00ff00"/>
<rect x="309" y="505" width="5" height="3" fill="#00ff00"/>
<rect x="319" y="501" width="1" height="39" fill="#00ff00"/>
<rect x="317" y="505" width="5" height="28" fill="#00ff00"/>
<rect x="318" y="506" width="3" height="26" fill="#ff0000"/>
<rect x="327" y="525" width="1" height="45" fill="#00ff00"/>
<rect x="325" y="533" width="5" height="1" fill="#00ff00"/>
<rect x="335" y="524" width="1" height="21" fill="#00ff00"/>
<rect x="333" y="525" width="5" height="9" fill="#00ff00"/>
<rect x="343" y="514" width="1" height="19" fill="#00ff00"/>
<rect x="341" y="526" width="5" height="3" fill="#00ff00"/>
<rect x="342" y="527" width="3" height="1" fill="#ff0000"/>
<rect x="351" y="511" width="1" height="23" fill="#00ff00"/>
<rect x="349" y="515" width="5" height="14" fill="#00ff00"/>
<rect x="359" y="492" width="1" height="25" fill="#00ff00"/>
<rect x="357" y="496" width="5" height="20" fill="#00ff00"/>
<rect x="367" y="481" width="1" height="25" fill="#00ff00"/>
<rect x="365" y="496" width="5" height="6" fill="#00ff00"/>
<rect x="366" y="497" width="3" height="4" fill="#ff0000"/>
<rect x="375" y="491" width="1" height="14" fill="#00ff00"/>
<rect x="373" y="495" width="5" height="8" fill="#00ff00"/>
<rect x="383" y="475" width="1" height="25" fill="#00ff00"/>
<rect x="381" y="489" width="5" height="6" fill="#00ff00"/>
<rect x="391" y="466" width="1" height="25" fill="#00ff00"/>
<rect x="389" y="471" width="5" height="18" fill="#00ff00"/>
<rect x="399" y="459" width="1" height="16" fill="#00ff00"/>
<rect x="397" y="468" width="5" height="4" fill="#00ff00"/>
<rect x="407" y="454" width="1" height="23" fill="#00ff00"/>
<rect x="405" y="468" width="5" height="2" fill="#00ff00"/>
<rect x="406" y="468" width="3" height="2" fill="#ff0000"/>
<rect x="415" y="463" width="1" height="17" fill="#00ff00"/>
<rect x="413" y="471" width="5" height="5" fill="#00ff00"/>
<rect x="414" y="472" width="3" height="3" fill="#ff0000"/>
<rect x="423" y="457" width="1" height="20" fill="#00ff00"/>
<rect x="421" y="471" width="5" height="4" fill="#00ff00"/>
<rect x="431" y="451" width="1" height="32" fill="#00ff00"/>
<rect x="429" y="457" width="5" height="15" fill="#00ff00"/>
<rect x="439" y="450" width="1" height="15" fill="#00ff00"/>
<rect x="437" y="451" width="5" height="6" fill="#00ff00"/>
<rect x="447" y="451" width="1" height="33" fill="#00ff00"/>
<rect x="445" y="453" width="5" height="29" fill="#00ff00"/>
<rect x="446" y="454" width="3" height="27" fill="#ff0000"/>
<rect x="455" y="475" width="1" height="22" fill="#00ff00"/>
<rect x="453" y="483" width="5" height="11" fill="#00ff00"/>
<rect x="454" y="484" width="3" height="9" fill="#ff0000"/>
<rect x="463" y="489" width="1" height="31" fill="#00ff00"/>
<rect x="461" y="494" width="5" height="17" fill="#00ff00"/>
<rect x="462" y="495" width="3" height="15" fill="#ff0000"/>
<rect x="471" y="493" width="1" height="22" fill="#00ff00"/>
<rect x="469" y="493" width="5" height="19" fill="#00ff00"/>
<rect x="479" y="485" width="1" height="21" fill="#00ff00"/>
<rect x="477" y="494" width="5" height="6" fill="#00ff00"/>
<rect x="478" y="495" width="3" height="4" fill="#ff0000"/>
<rect x="487" y="492" width="1" height="15" fill="#00ff00"/>
<rect x="485" y="501" width="5" height="6" fill="#00ff00"/>
<rect x="486" y="502" width="3" height="4" fill="#ff0000"/>
<rect x="495" y="497" width="1" height="17" fill="#00ff00"/>
<rect x="493" y="502" width="5" height="6" fill="#00ff00"/>
<rect x="503" y="491" width="1" height="12" fill="#00ff00"/>
<rect x="501" y="498" width="5" height="4" fill="#00ff00"/>
<rect x="511" y="493" width="1" height="13" fill="#00ff00"/>
<rect x="509" y="494" width="5" height="5" fill="#00ff00"/>
<rect x="519" y="490" width="1" height="8" fill="#00ff00"/>
<rect x="517" y="495" width="5" height="2" fill="#00ff00"/>
<rect x="518" y="495" width="3" height="2" fill="#ff0000"/>
<rect x="527" y="495" width="1" height="13" fill="#00ff00"/>
<rect x="525" y="496" width="5" height="11" fill="#00ff00"/>
<rect x="526" y="497" width="3" height="9" fill="#ff0000"/>
<rect x="535" y="501" width="1" height="7" fill="#00ff00"/>
<rect x="533" y="504" width="5" height="3" fill="#00ff00"/>
<rect x="543" y="496" width="1" height="11" fill="#00ff00"/>
<rect x="541" y="498" width="5" height="7" fill="#00ff00"/>
<rect x="551" y="485" width="1" height="22" fill="#00ff00"/>
<rect x="549" y="488" width="5" height="15" fill="#00ff00"/>
<rect x="559" y="488" width="1" height="13" fill="#00ff00"/>
<rect x="557" y="488" width="5" height="10" fill="#00ff00"/>
<rect x="558" y="489" width="3" height="8" fill="#ff0000"/>
<rect x="567" y="492" width="1" height="9" fill="#00ff00"/>
<rect x="565" y="495" width="5" height="4" fill="#00ff00"/>
<rect x="575" y="491" width="1" height="14" fill="#00ff00"/>
<rect x="573" y="496" width="5" height="8" fill="#00ff00"/>
<rect x="574" y="497" width="3" height="6" fill="#ff0000"/>
<rect x="583" y="500" width="1" height="7" fill="#00ff00"/>
<rect x="581" y="502" width="5" height="2" fill="#00ff00"/>
<rect x="591" y="493" width="1" height="10" fill="#00ff00"/>
<rect x="589" y="493" width="5" height="10" fill="#00ff00"/>
<rect x="599" y="492" width="1" height="20" fill="#00ff00"/>
<rect x="597" y="494" width="5" height="11" fill="#00ff00"/>
<rect x="598" y="495" width="3" height="9" fill="#ff0000"/>
<rect x="607" y="497" width="1" height="13" fill="#00ff00"/>
<rect x="605" y="500" width="5" height="4" fill="#00ff00"/>
<rect x="615" y="500" width="1" height="24" fill="#00ff00"/>
<rect x="613" y="501" width="5" height="8" fill="#00ff00"/>
<rect x="614" y="502" width="3" height="6" fill="#ff0000"/>
<rect x="623" y="508" width="1" height="15" fill="#00ff00"/>
<rect x="621" y="509" width="5" height="6" fill="#00ff00"/>
<rect x="622" y="510" width="3" height="4" fill="#ff0000"/>
<rect x="631" y="513" width="1" height="18" fill="#00ff00"/>
<rect x="629" y="515" width="5" height="14" fill="#00ff00"/>
<rect x="630" y="516" width="3" height="12" fill="#ff0000"/>
<rect x="639" y="512" width="1" height="17" fill="#00ff00"/>
<rect x="637" y="522" width="5" height="7" fill="#00ff00"/>
<rect x="647" y="498" width="1" height="27" fill="#00ff00"/>
<rect x="645" y="506" width="5" height="17" fill="#00ff00"/>
<rect x="655" y="504" width="1" height="9" fill="#00ff00"/>
<rect x="653" y="506" width="5" height="3" fill="#00ff00"/>
<rect x="654" y="507" width="3" height="1" fill="#ff0000"/>
<rect x="663" y="506" width="1" height="21" fill="#00ff00"/>
<rect x="661" y="508" width="5" height="14" fill="#00ff00"/>
<rect x="662" y="509" width="3" height="12" fill="#ff0000"/>
<rect x="671" y="514" width="1" height="10" fill="#00ff00"/>
<rect x="669" y="514" width="5" height="8" fill="#00ff00"/>
<rect x="679" y="511" width="1" height="13" fill="#00ff00"/>
<rect x="677" y="514" width="5" height="5" fill="#00ff00"/>
<rect x="678" y="515" width="3" height="3" fill="#ff0000"/>
<rect x="687" y="492" width="1" height="27" fill="#00ff00"/>
<rect x="685" y="502" width="5" height="17" fill="#00ff00"/>
<rect x="695" y="499" width="1" height="21" fill="#00ff00"/>
<rect x="693" y="502" width="5" height="2" fill="#00ff00"/>
<rect x="703" y="500" width="1" height="21" fill="#00ff00"/>
<rect x="701" y="505" width="5" height="5" fill="#00ff00"/>
<rect x="702" y="506" width="3" height="3" fill="#ff0000"/>
<rect x="711" y="496" width="1" height="30" fill="#00ff00"/>
<rect x="709" y="505" width="5" height="5" fill="#00ff00"/>
<rect x="719" y="506" width="1" height="11" fill="#00ff00"/>
<rect x="717" y="507" width="5" height="7" fill="#00ff00"/>
<rect x="718" y="508" width="3" height="5" fill="#ff0000"/>
<g stroke="#0000ee" stroke-width="1" stroke-dasharray="2 3" shape-rendering="crispEdges" fill="none">
<line x1="217" y1="517" x2="445" y2="472"/>
<line x1="224" y1="512" x2="445" y2="471"/>
<line x1="262" y1="520" x2="445" y2="473"/>
<line x1="328" y1="559" x2="445" y2="472"/>
<line x1="328" y1="549" x2="445" y2="472"/>
<line x1="332" y1="555" x2="445" y2="474"/>
<line x1="335" y1="545" x2="445" y2="471"/>
<line x1="352" y1="525" x2="445" y2="472"/>
<line x1="400" y1="457" x2="445" y2="472"/>
<line x1="431" y1="447" x2="445" y2="472"/>
<line x1="418" y1="460" x2="445" y2="472"/>
<line x1="300" y1="498" x2="445" y2="470"/>
</g>
<path d="M446 472.5 L452 467 L452 478 Z" fill="#fff" stroke="#f00" stroke-width="0.5" shape-rendering="auto"/>
</g>
<path d="M733 441 L743 441 L738 446 Z" fill="#8090a8" shape-rendering="auto"/>
</svg>
<div style="left:22px;top:440px;width:897px;height:135px;border:1px solid #fff"></div>
<div style="left:22px;top:577px;width:897px;height:127px;border:1px solid #fff"></div>
<div style="left:215px;top:574px;width:1px;height:1px;background:#000;"></div>
<div style="left:599px;top:574px;width:1px;height:1px;background:#000;"></div>
<div style="left:27px;top:443px;width:212px;height:10px;background:#000;"></div>
<div style="top:442px;height:12px;line-height:12px;font-size:9.5px;color:#fff;white-space:pre;left:27.70px;transform-origin:0 50%;transform:scaleX(0.9802);">EURJPYm,M30  110.414 110.414 110.312 110.339</div>
<div style="top:453px;height:12px;line-height:12px;font-size:10px;color:#fff;white-space:pre;left:27.70px;transform-origin:0 50%;transform:scaleX(0.9404);">Cekame na profit 10.00, zatim -0.90</div>
<div style="left:919px;top:444px;width:2px;height:1px;background:#fff;"></div>
<div style="top:438px;height:12px;line-height:12px;font-size:9.5px;color:#fff;white-space:pre;left:923.80px;transform-origin:0 50%;transform:scaleX(0.9870);">111.015</div>
<div style="left:919px;top:476px;width:2px;height:1px;background:#fff;"></div>
<div style="top:469px;height:12px;line-height:12px;font-size:9.5px;color:#fff;white-space:pre;left:923.80px;transform-origin:0 50%;transform:scaleX(0.9663);">110.700</div>
<div style="left:919px;top:506px;width:2px;height:1px;background:#fff;"></div>
<div style="top:500px;height:12px;line-height:12px;font-size:9.5px;color:#fff;white-space:pre;left:923.80px;transform-origin:0 50%;transform:scaleX(0.9663);">110.390</div>
<div style="left:919px;top:540px;width:2px;height:1px;background:#fff;"></div>
<div style="top:534px;height:12px;line-height:12px;font-size:9.5px;color:#fff;white-space:pre;left:923.80px;transform-origin:0 50%;transform:scaleX(0.9663);">110.075</div>
<div style="left:919px;top:572px;width:2px;height:1px;background:#fff;"></div>
<div style="top:565px;height:12px;line-height:12px;font-size:9.5px;color:#fff;white-space:pre;left:923.80px;transform-origin:0 50%;transform:scaleX(0.9464);">109.760</div>
<div style="left:920px;top:507px;width:38px;height:11px;background:#fff;"></div>
<div style="top:507px;height:12px;line-height:12px;font-size:9.5px;color:#000;white-space:pre;left:924.00px;transform-origin:0 50%;transform:scaleX(0.9663);">110.339</div>
<div style="top:578px;height:12px;line-height:12px;font-size:9.5px;color:#fff;white-space:pre;left:924.00px;transform-origin:0 50%;">0</div>
<div style="top:691px;height:12px;line-height:12px;font-size:9.5px;color:#fff;white-space:pre;left:924.00px;transform-origin:0 50%;">0</div>
<div style="left:919px;top:579px;width:3px;height:1px;background:#fff;"></div>
<div style="left:919px;top:701px;width:3px;height:1px;background:#fff;"></div>
<div style="top:581px;height:12px;line-height:12px;font-size:9.5px;color:#fff;white-space:pre;left:27.00px;transform-origin:0 50%;transform:scaleX(0.9219);">Exposure</div>
<div style="top:591px;height:15px;line-height:15px;font-size:13px;color:#20b2aa;white-space:pre;left:33.00px;transform-origin:0 50%;transform:scaleX(0.9550);">Symbol</div>
<div style="top:591px;height:15px;line-height:15px;font-size:13px;color:#20b2aa;white-space:pre;left:103.00px;transform-origin:0 50%;transform:scaleX(0.9550);">Deals</div>
<div style="top:591px;height:15px;line-height:15px;font-size:13px;color:#20b2aa;white-space:pre;left:153.00px;transform-origin:0 50%;transform:scaleX(0.9550);">Buy lots</div>
<div style="top:591px;height:15px;line-height:15px;font-size:13px;color:#20b2aa;white-space:pre;left:203.00px;transform-origin:0 50%;transform:scaleX(0.9550);">Buy price</div>
<div style="top:591px;height:15px;line-height:15px;font-size:13px;color:#20b2aa;white-space:pre;left:283.00px;transform-origin:0 50%;transform:scaleX(0.9550);">Sell lots</div>
<div style="top:591px;height:15px;line-height:15px;font-size:13px;color:#20b2aa;white-space:pre;left:333.00px;transform-origin:0 50%;transform:scaleX(0.9550);">Sell price</div>
<div style="top:591px;height:15px;line-height:15px;font-size:13px;color:#20b2aa;white-space:pre;left:413.00px;transform-origin:0 50%;transform:scaleX(0.9550);">Net lots</div>
<div style="top:591px;height:15px;line-height:15px;font-size:13px;color:#20b2aa;white-space:pre;left:483.00px;transform-origin:0 50%;transform:scaleX(0.9550);">Profit</div>
<div style="top:606px;height:15px;line-height:15px;font-size:13px;color:#20b2aa;white-space:pre;left:33.00px;transform-origin:0 50%;transform:scaleX(0.9550);">EURJPYm</div>
<div style="top:606px;height:15px;line-height:15px;font-size:13px;color:#20b2aa;white-space:pre;left:103.00px;transform-origin:0 50%;transform:scaleX(0.9550);">8</div>
<div style="top:606px;height:15px;line-height:15px;font-size:13px;color:#20b2aa;white-space:pre;left:153.00px;transform-origin:0 50%;transform:scaleX(0.9550);">0.37</div>
<div style="top:606px;height:15px;line-height:15px;font-size:13px;color:#20b2aa;white-space:pre;left:203.00px;transform-origin:0 50%;transform:scaleX(0.9550);">110.391</div>
<div style="top:606px;height:15px;line-height:15px;font-size:13px;color:#20b2aa;white-space:pre;left:283.00px;transform-origin:0 50%;transform:scaleX(0.9550);">0.00</div>
<div style="top:606px;height:15px;line-height:15px;font-size:13px;color:#20b2aa;white-space:pre;left:333.00px;transform-origin:0 50%;transform:scaleX(0.9550);">0.000</div>
<div style="top:606px;height:15px;line-height:15px;font-size:13px;color:#20b2aa;white-space:pre;left:413.00px;transform-origin:0 50%;transform:scaleX(0.9550);">0.37</div>
<div style="top:606px;height:15px;line-height:15px;font-size:13px;color:#20b2aa;white-space:pre;left:483.00px;transform-origin:0 50%;transform:scaleX(0.9550);">-2.52</div>
<div style="top:620px;height:15px;line-height:15px;font-size:13px;color:#20b2aa;white-space:pre;left:33.00px;transform-origin:0 50%;transform:scaleX(0.9550);">GBPJPYm</div>
<div style="top:620px;height:15px;line-height:15px;font-size:13px;color:#20b2aa;white-space:pre;left:103.00px;transform-origin:0 50%;transform:scaleX(0.9550);">8</div>
<div style="top:620px;height:15px;line-height:15px;font-size:13px;color:#20b2aa;white-space:pre;left:153.00px;transform-origin:0 50%;transform:scaleX(0.9550);">0.00</div>
<div style="top:620px;height:15px;line-height:15px;font-size:13px;color:#20b2aa;white-space:pre;left:203.00px;transform-origin:0 50%;transform:scaleX(0.9550);">0.000</div>
<div style="top:620px;height:15px;line-height:15px;font-size:13px;color:#20b2aa;white-space:pre;left:283.00px;transform-origin:0 50%;transform:scaleX(0.9550);">0.37</div>
<div style="top:620px;height:15px;line-height:15px;font-size:13px;color:#20b2aa;white-space:pre;left:333.00px;transform-origin:0 50%;transform:scaleX(0.9550);">126.522</div>
<div style="top:620px;height:15px;line-height:15px;font-size:13px;color:#20b2aa;white-space:pre;left:413.00px;transform-origin:0 50%;transform:scaleX(0.9550);">-0.37</div>
<div style="top:620px;height:15px;line-height:15px;font-size:13px;color:#20b2aa;white-space:pre;left:483.00px;transform-origin:0 50%;transform:scaleX(0.9550);">-1.38</div>
<div style="top:634px;height:15px;line-height:15px;font-size:13px;color:#20b2aa;white-space:pre;left:33.00px;transform-origin:0 50%;transform:scaleX(0.9550);">GBPUSDm</div>
<div style="top:634px;height:15px;line-height:15px;font-size:13px;color:#20b2aa;white-space:pre;left:103.00px;transform-origin:0 50%;transform:scaleX(0.9550);">9</div>
<div style="top:634px;height:15px;line-height:15px;font-size:13px;color:#20b2aa;white-space:pre;left:153.00px;transform-origin:0 50%;transform:scaleX(0.9550);">0.40</div>
<div style="top:634px;height:15px;line-height:15px;font-size:13px;color:#20b2aa;white-space:pre;left:203.00px;transform-origin:0 50%;transform:scaleX(0.9550);">1.65226</div>
<div style="top:634px;height:15px;line-height:15px;font-size:13px;color:#20b2aa;white-space:pre;left:283.00px;transform-origin:0 50%;transform:scaleX(0.9550);">0.00</div>
<div style="top:634px;height:15px;line-height:15px;font-size:13px;color:#20b2aa;white-space:pre;left:333.00px;transform-origin:0 50%;transform:scaleX(0.9550);">0.00000</div>
<div style="top:634px;height:15px;line-height:15px;font-size:13px;color:#20b2aa;white-space:pre;left:413.00px;transform-origin:0 50%;transform:scaleX(0.9550);">0.40</div>
<div style="top:634px;height:15px;line-height:15px;font-size:13px;color:#20b2aa;white-space:pre;left:483.00px;transform-origin:0 50%;transform:scaleX(0.9550);">-4.80</div>
<div style="top:648px;height:15px;line-height:15px;font-size:13px;color:#20b2aa;white-space:pre;left:33.00px;transform-origin:0 50%;transform:scaleX(0.9550);">EURUSDm</div>
<div style="top:648px;height:15px;line-height:15px;font-size:13px;color:#20b2aa;white-space:pre;left:103.00px;transform-origin:0 50%;transform:scaleX(0.9550);">13</div>
<div style="top:648px;height:15px;line-height:15px;font-size:13px;color:#20b2aa;white-space:pre;left:153.00px;transform-origin:0 50%;transform:scaleX(0.9550);">0.00</div>
<div style="top:648px;height:15px;line-height:15px;font-size:13px;color:#20b2aa;white-space:pre;left:203.00px;transform-origin:0 50%;transform:scaleX(0.9550);">0.00000</div>
<div style="top:648px;height:15px;line-height:15px;font-size:13px;color:#20b2aa;white-space:pre;left:283.00px;transform-origin:0 50%;transform:scaleX(0.9550);">0.61</div>
<div style="top:648px;height:15px;line-height:15px;font-size:13px;color:#20b2aa;white-space:pre;left:333.00px;transform-origin:0 50%;transform:scaleX(0.9550);">1.44069</div>
<div style="top:648px;height:15px;line-height:15px;font-size:13px;color:#20b2aa;white-space:pre;left:413.00px;transform-origin:0 50%;transform:scaleX(0.9550);">-0.61</div>
<div style="top:648px;height:15px;line-height:15px;font-size:13px;color:#20b2aa;white-space:pre;left:483.00px;transform-origin:0 50%;transform:scaleX(0.9550);">1.80</div>
<div style="left:23px;top:703px;width:1px;height:4px;background:#fff;"></div>
<div style="top:707px;height:12px;line-height:12px;font-size:9.5px;color:#fff;white-space:pre;left:23.30px;transform-origin:0 50%;transform:scaleX(0.9876);">16 Aug 2011</div>
<div style="left:87px;top:703px;width:1px;height:4px;background:#fff;"></div>
<div style="top:707px;height:12px;line-height:12px;font-size:9.5px;color:#fff;white-space:pre;left:87.30px;transform-origin:0 50%;transform:scaleX(0.9679);">16 Aug 16:00</div>
<div style="left:151px;top:703px;width:1px;height:4px;background:#fff;"></div>
<div style="top:707px;height:12px;line-height:12px;font-size:9.5px;color:#fff;white-space:pre;left:151.30px;transform-origin:0 50%;transform:scaleX(0.9679);">16 Aug 20:00</div>
<div style="left:215px;top:703px;width:1px;height:4px;background:#fff;"></div>
<div style="top:707px;height:12px;line-height:12px;font-size:9.5px;color:#fff;white-space:pre;left:215.30px;transform-origin:0 50%;transform:scaleX(0.9679);">17 Aug 00:00</div>
<div style="left:279px;top:703px;width:1px;height:4px;background:#fff;"></div>
<div style="top:707px;height:12px;line-height:12px;font-size:9.5px;color:#fff;white-space:pre;left:279.30px;transform-origin:0 50%;transform:scaleX(0.9679);">17 Aug 04:00</div>
<div style="left:343px;top:703px;width:1px;height:4px;background:#fff;"></div>
<div style="top:707px;height:12px;line-height:12px;font-size:9.5px;color:#fff;white-space:pre;left:343.30px;transform-origin:0 50%;transform:scaleX(0.9679);">17 Aug 08:00</div>
<div style="left:407px;top:703px;width:1px;height:4px;background:#fff;"></div>
<div style="top:707px;height:12px;line-height:12px;font-size:9.5px;color:#fff;white-space:pre;left:407.30px;transform-origin:0 50%;transform:scaleX(0.9679);">17 Aug 12:00</div>
<div style="left:471px;top:703px;width:1px;height:4px;background:#fff;"></div>
<div style="top:707px;height:12px;line-height:12px;font-size:9.5px;color:#fff;white-space:pre;left:471.30px;transform-origin:0 50%;transform:scaleX(0.9679);">17 Aug 16:00</div>
<div style="left:535px;top:703px;width:1px;height:4px;background:#fff;"></div>
<div style="top:707px;height:12px;line-height:12px;font-size:9.5px;color:#fff;white-space:pre;left:535.30px;transform-origin:0 50%;transform:scaleX(0.9679);">17 Aug 20:00</div>
<div style="left:599px;top:703px;width:1px;height:4px;background:#fff;"></div>
<div style="top:707px;height:12px;line-height:12px;font-size:9.5px;color:#fff;white-space:pre;left:599.30px;transform-origin:0 50%;transform:scaleX(0.9679);">18 Aug 00:00</div>
<div style="left:663px;top:703px;width:1px;height:4px;background:#fff;"></div>
<div style="top:707px;height:12px;line-height:12px;font-size:9.5px;color:#fff;white-space:pre;left:663.30px;transform-origin:0 50%;transform:scaleX(0.9679);">18 Aug 04:00</div>
<div style="top:440px;height:15px;line-height:15px;font-size:13px;color:#9acd32;white-space:pre;left:728.30px;transform-origin:0 50%;transform:scaleX(0.9852);">EURJPYm</div>
<div style="top:443px;height:12px;line-height:12px;font-size:9.5px;color:#fff;white-space:pre;left:825.60px;transform-origin:0 50%;">DONNY90K 1.00</div>
<div style="left:903px;top:443px;width:9px;height:9px;border:1px solid #fff;border-radius:50%;box-sizing:border-box"></div>
<div style="top:441px;height:18px;line-height:18px;font-size:16px;color:#9acd32;white-space:pre;font-weight:bold;left:852.50px;transform-origin:0 50%;transform:scaleX(0.9657);">110.33</div>
<div style="top:441px;height:18px;line-height:18px;font-size:16px;color:#ffd700;white-space:pre;font-weight:bold;left:898.91px;transform-origin:0 50%;transform:scaleX(0.9657);">9</div>
<div style="left:736px;top:458px;width:172px;height:1px;background:#808080;"></div>
<div style="left:736px;top:504px;width:172px;height:1px;background:#808080;"></div>
<div style="left:736px;top:532px;width:172px;height:1px;background:#808080;"></div>
<div style="top:462px;height:15px;line-height:15px;font-size:13px;color:#808080;white-space:pre;left:768.00px;transform-origin:0 50%;transform:scaleX(0.9799);">change/range :</div>
<div style="top:461px;height:16px;line-height:16px;font-size:14px;color:#ffd700;white-space:pre;font-weight:bold;left:873.50px;transform-origin:0 50%;transform:scaleX(0.8691);">-20/37</div>
<div style="top:473px;height:15px;line-height:15px;font-size:13px;color:#808080;white-space:pre;left:740.00px;transform-origin:0 50%;">distance from high :</div>
<div style="top:473px;height:16px;line-height:16px;font-size:14px;color:#9acd32;white-space:pre;left:890.50px;transform-origin:0 50%;transform:scaleX(0.8649);">-20</div>
<div style="top:485px;height:15px;line-height:15px;font-size:13px;color:#808080;white-space:pre;left:745.00px;transform-origin:0 50%;">distance from low :</div>
<div style="top:484px;height:16px;line-height:16px;font-size:14px;color:#9acd32;white-space:pre;left:891.50px;transform-origin:0 50%;transform:scaleX(0.8154);">-17</div>
<div style="top:506px;height:15px;line-height:15px;font-size:13px;color:#808080;white-space:pre;left:788.00px;transform-origin:0 50%;transform:scaleX(0.9883);">swap long :</div>
<div style="top:505px;height:16px;line-height:16px;font-size:14px;color:#9acd32;white-space:pre;left:880.00px;transform-origin:0 50%;transform:scaleX(0.8775);">-0.19</div>
<div style="top:517px;height:15px;line-height:15px;font-size:13px;color:#808080;white-space:pre;left:783.00px;transform-origin:0 50%;">swap short :</div>
<div style="top:517px;height:16px;line-height:16px;font-size:14px;color:#9acd32;white-space:pre;left:880.00px;transform-origin:0 50%;transform:scaleX(0.8775);">-0.80</div>
<svg style="left:976px;top:437px" width="941" height="285" viewBox="976 437 941 285" shape-rendering="crispEdges" >
<line x1="982" x2="1876" y1="451.5" y2="451.5" stroke="#32cd32" stroke-width="1" stroke-dasharray="9 6 3 6" stroke-dashoffset="0"/>
<line x1="982" x2="1876" y1="465.5" y2="465.5" stroke="#32cd32" stroke-width="1" stroke-dasharray="9 6 3 6" stroke-dashoffset="0"/>
<line x1="982" x2="1876" y1="475.5" y2="475.5" stroke="#32cd32" stroke-width="1" stroke-dasharray="9 6 3 6" stroke-dashoffset="0"/>
<line x1="982" x2="1876" y1="480.5" y2="480.5" stroke="#32cd32" stroke-width="1" stroke-dasharray="9 6 3 6" stroke-dashoffset="0"/>
<line x1="982" x2="1876" y1="494.5" y2="494.5" stroke="#32cd32" stroke-width="1" stroke-dasharray="9 6 3 6" stroke-dashoffset="0"/>
<line x1="982" x2="1876" y1="504.5" y2="504.5" stroke="#32cd32" stroke-width="1" stroke-dasharray="9 6 3 6" stroke-dashoffset="0"/>
<line x1="982" x2="1876" y1="512.5" y2="512.5" stroke="#32cd32" stroke-width="1" stroke-dasharray="9 6 3 6" stroke-dashoffset="0"/>
<line x1="982" x2="1876" y1="528.5" y2="528.5" stroke="#32cd32" stroke-width="1" stroke-dasharray="9 6 3 6" stroke-dashoffset="0"/>
<line x1="982" x2="1876" y1="535.5" y2="535.5" stroke="#32cd32" stroke-width="1" stroke-dasharray="9 6 3 6" stroke-dashoffset="0"/>
<line x1="982" x2="1876" y1="538.5" y2="538.5" stroke="#32cd32" stroke-width="1" stroke-dasharray="9 6 3 6" stroke-dashoffset="0"/>
<line x1="982" x2="1876" y1="540.5" y2="540.5" stroke="#32cd32" stroke-width="1" stroke-dasharray="9 6 3 6" stroke-dashoffset="0"/>
<line x1="982" x2="1876" y1="553.5" y2="553.5" stroke="#32cd32" stroke-width="1" stroke-dasharray="9 6 3 6" stroke-dashoffset="0"/>
<line x1="982" x2="1876" y1="557.5" y2="557.5" stroke="#32cd32" stroke-width="1" stroke-dasharray="9 6 3 6" stroke-dashoffset="0"/>
<line x1="982" x2="1876" y1="562.5" y2="562.5" stroke="#32cd32" stroke-width="1" stroke-dasharray="9 6 3 6" stroke-dashoffset="0"/>
<line x1="982" x2="1876" y1="567.5" y2="567.5" stroke="#32cd32" stroke-width="1" stroke-dasharray="9 6 3 6" stroke-dashoffset="0"/>
<line x1="982" x2="1876" y1="582.5" y2="582.5" stroke="#32cd32" stroke-width="1" stroke-dasharray="9 6 3 6" stroke-dashoffset="0"/>
<line x1="982" x2="1876" y1="592.5" y2="592.5" stroke="#32cd32" stroke-width="1" stroke-dasharray="9 6 3 6" stroke-dashoffset="0"/>
<line x1="982" x2="1876" y1="596.5" y2="596.5" stroke="#32cd32" stroke-width="1" stroke-dasharray="9 6 3 6" stroke-dashoffset="0"/>
<line x1="982" x2="1876" y1="611.5" y2="611.5" stroke="#32cd32" stroke-width="1" stroke-dasharray="9 6 3 6" stroke-dashoffset="0"/>
<line x1="982" x2="1876" y1="625.5" y2="625.5" stroke="#32cd32" stroke-width="1" stroke-dasharray="9 6 3 6" stroke-dashoffset="0"/>
<line x1="982" x2="1876" y1="654.5" y2="654.5" stroke="#32cd32" stroke-width="1" stroke-dasharray="9 6 3 6" stroke-dashoffset="0"/>
<line x1="982" x2="1876" y1="669.5" y2="669.5" stroke="#32cd32" stroke-width="1" stroke-dasharray="9 6 3 6" stroke-dashoffset="0"/>
<line x1="982" x2="1876" y1="683.5" y2="683.5" stroke="#32cd32" stroke-width="1" stroke-dasharray="9 6 3 6" stroke-dashoffset="0"/>
<line x1="982" x2="1876" y1="698.5" y2="698.5" stroke="#32cd32" stroke-width="1" stroke-dasharray="9 6 3 6" stroke-dashoffset="0"/>
<line x1="982" x2="1876" y1="510.0" y2="510.0" stroke="#32cd32" stroke-width="2" stroke-dasharray="9 6 3 6" stroke-dashoffset="0"/>
<rect x="981" y="565" width="895" height="1" fill="#ff0000"/>
<rect x="981" y="569" width="895" height="1" fill="#808890"/>
<line x1="1437.5" x2="1437.5" y1="440" y2="700" stroke="#fff" stroke-width="1" stroke-dasharray="3 1"/>
</svg>
<div style="left:984.80px;top:465px;width:88.9px;height:10px;background:#000;overflow:hidden">
<div style="top:0px;height:12px;line-height:12px;font-size:10px;color:#fff;white-space:pre;left:1.50px;transform-origin:0 50%;transform:scaleX(0.9478);">#41914761 buy stop</div>
</div>
<div style="left:984.80px;top:455px;width:88.9px;height:10px;background:#000;overflow:hidden">
<div style="top:0px;height:12px;line-height:12px;font-size:10px;color:#fff;white-space:pre;left:1.50px;transform-origin:0 50%;transform:scaleX(0.9478);">#41914817 buy stop</div>
</div>
<div style="left:984.80px;top:470px;width:88.9px;height:10px;background:#000;overflow:hidden">
<div style="top:0px;height:12px;line-height:12px;font-size:10px;color:#fff;white-space:pre;left:1.50px;transform-origin:0 50%;transform:scaleX(0.9478);">#41914814 buy stop</div>
</div>
<div style="left:984.80px;top:484px;width:88.9px;height:10px;background:#000;overflow:hidden">
<div style="top:0px;height:12px;line-height:12px;font-size:10px;color:#fff;white-space:pre;left:1.50px;transform-origin:0 50%;transform:scaleX(0.9478);">#41914812 buy stop</div>
</div>
<div style="left:984.80px;top:502px;width:88.9px;height:10px;background:#000;overflow:hidden">
<div style="top:0px;height:12px;line-height:12px;font-size:10px;color:#fff;white-space:pre;left:1.50px;transform-origin:0 50%;transform:scaleX(0.9478);">#41914825 buy stop</div>
</div>
<div style="left:984.80px;top:494px;width:88.9px;height:10px;background:#000;overflow:hidden">
<div style="top:0px;height:12px;line-height:12px;font-size:10px;color:#fff;white-space:pre;left:1.50px;transform-origin:0 50%;transform:scaleX(0.9478);">#41915542 buy stop</div>
</div>
<div style="left:984.80px;top:516px;width:68.5px;height:10px;background:#000;overflow:hidden">
<div style="top:0px;height:12px;line-height:12px;font-size:10px;color:#fff;white-space:pre;left:1.50px;transform-origin:0 50%;transform:scaleX(0.9499);">#41914760 buy</div>
</div>
<div style="left:984.80px;top:522px;width:68.5px;height:10px;background:#000;overflow:hidden">
</div>
<div style="left:984.80px;top:530px;width:68.5px;height:10px;background:#000;overflow:hidden">
<div style="top:0px;height:12px;line-height:12px;font-size:10px;color:#fff;white-space:pre;left:1.50px;transform-origin:0 50%;transform:scaleX(0.9499);">#41915539 buy</div>
</div>
<div style="left:984.80px;top:540px;width:68.5px;height:10px;background:#000;overflow:hidden">
<div style="top:0px;height:12px;line-height:12px;font-size:10px;color:#fff;white-space:pre;left:1.50px;transform-origin:0 50%;transform:scaleX(0.9499);">#41914813 buy</div>
</div>
<div style="left:984.80px;top:544px;width:68.5px;height:10px;background:#000;overflow:hidden">
<div style="top:0px;height:12px;line-height:12px;font-size:10px;color:#fff;white-space:pre;left:1.50px;transform-origin:0 50%;transform:scaleX(0.9499);">#41915540 buy</div>
</div>
<div style="left:984.80px;top:550px;width:68.5px;height:10px;background:#000;overflow:hidden">
<div style="top:0px;height:12px;line-height:12px;font-size:10px;color:#fff;white-space:pre;left:1.50px;transform-origin:0 50%;transform:scaleX(0.9499);">#41914763 buy</div>
</div>
<div style="left:984.80px;top:556px;width:68.5px;height:10px;background:#000;overflow:hidden">
<div style="top:0px;height:12px;line-height:12px;font-size:10px;color:#fff;white-space:pre;left:1.50px;transform-origin:0 50%;transform:scaleX(0.9499);">#41914815 buy</div>
</div>
<div style="left:984.80px;top:572px;width:68.5px;height:10px;background:#000;overflow:hidden">
<div style="top:0px;height:12px;line-height:12px;font-size:10px;color:#fff;white-space:pre;left:1.50px;transform-origin:0 50%;transform:scaleX(0.9499);">#41914818 buy</div>
</div>
<div style="left:984.80px;top:586px;width:88.9px;height:10px;background:#000;overflow:hidden">
<div style="top:0px;height:12px;line-height:12px;font-size:10px;color:#fff;white-space:pre;left:1.50px;transform-origin:0 50%;transform:scaleX(0.9597);">#41914757 buy limit</div>
</div>
<div style="left:984.80px;top:582px;width:88.9px;height:10px;background:#000;overflow:hidden">
<div style="top:0px;height:12px;line-height:12px;font-size:10px;color:#fff;white-space:pre;left:1.50px;transform-origin:0 50%;transform:scaleX(0.9597);">#41915543 buy limit</div>
</div>
<div style="left:984.80px;top:600px;width:88.9px;height:10px;background:#000;overflow:hidden">
<div style="top:0px;height:12px;line-height:12px;font-size:10px;color:#fff;white-space:pre;left:1.50px;transform-origin:0 50%;transform:scaleX(0.9597);">#41914822 buy limit</div>
</div>
<div style="left:984.80px;top:614px;width:88.9px;height:10px;background:#000;overflow:hidden">
<div style="top:0px;height:12px;line-height:12px;font-size:10px;color:#fff;white-space:pre;left:1.50px;transform-origin:0 50%;transform:scaleX(0.9597);">#41914824 buy limit</div>
</div>
<div style="left:984.80px;top:644px;width:88.9px;height:10px;background:#000;overflow:hidden">
<div style="top:0px;height:12px;line-height:12px;font-size:10px;color:#fff;white-space:pre;left:1.50px;transform-origin:0 50%;transform:scaleX(0.9597);">#41914820 buy limit</div>
</div>
<div style="left:984.80px;top:659px;width:88.9px;height:10px;background:#000;overflow:hidden">
<div style="top:0px;height:12px;line-height:12px;font-size:10px;color:#fff;white-space:pre;left:1.50px;transform-origin:0 50%;transform:scaleX(0.9597);">#41914832 buy limit</div>
</div>
<div style="left:984.80px;top:673px;width:88.9px;height:10px;background:#000;overflow:hidden">
<div style="top:0px;height:12px;line-height:12px;font-size:10px;color:#fff;white-space:pre;left:1.50px;transform-origin:0 50%;transform:scaleX(0.9597);">#41914834 buy limit</div>
</div>
<div style="left:984.80px;top:688px;width:88.9px;height:10px;background:#000;overflow:hidden">
<div style="top:0px;height:12px;line-height:12px;font-size:10px;color:#fff;white-space:pre;left:1.50px;transform-origin:0 50%;transform:scaleX(0.9597);">#41914836 buy limit</div>
</div>
<svg style="left:976px;top:437px" width="941" height="285" viewBox="976 437 941 285" shape-rendering="crispEdges" >
<clipPath id="cl4"><rect x="981" y="440" width="895" height="263"/></clipPath><g clip-path="url(#cl4)">
<rect x="981" y="672" width="1" height="23" fill="#00ff00"/>
<rect x="979" y="690" width="5" height="1" fill="#00ff00"/>
<rect x="989" y="680" width="1" height="16" fill="#00ff00"/>
<rect x="987" y="689" width="5" height="6" fill="#00ff00"/>
<rect x="988" y="690" width="3" height="4" fill="#ff0000"/>
<rect x="997" y="672" width="1" height="22" fill="#00ff00"/>
<rect x="995" y="676" width="5" height="18" fill="#00ff00"/>
<rect x="1005" y="672" width="1" height="20" fill="#00ff00"/>
<rect x="1003" y="674" width="5" height="2" fill="#00ff00"/>
<rect x="1013" y="628" width="1" height="46" fill="#00ff00"/>
<rect x="1011" y="661" width="5" height="13" fill="#00ff00"/>
<rect x="1021" y="640" width="1" height="22" fill="#00ff00"/>
<rect x="1019" y="654" width="5" height="7" fill="#00ff00"/>
<rect x="1029" y="637" width="1" height="23" fill="#00ff00"/>
<rect x="1027" y="644" width="5" height="11" fill="#00ff00"/>
<rect x="1037" y="642" width="1" height="18" fill="#00ff00"/>
<rect x="1035" y="645" width="5" height="14" fill="#00ff00"/>
<rect x="1036" y="646" width="3" height="12" fill="#ff0000"/>
<rect x="1045" y="544" width="1" height="116" fill="#00ff00"/>
<rect x="1043" y="544" width="5" height="114" fill="#00ff00"/>
<rect x="1053" y="541" width="1" height="52" fill="#00ff00"/>
<rect x="1051" y="545" width="5" height="46" fill="#00ff00"/>
<rect x="1052" y="546" width="3" height="44" fill="#ff0000"/>
<rect x="1061" y="575" width="1" height="20" fill="#00ff00"/>
<rect x="1059" y="581" width="5" height="11" fill="#00ff00"/>
<rect x="1069" y="580" width="1" height="28" fill="#00ff00"/>
<rect x="1067" y="582" width="5" height="21" fill="#00ff00"/>
<rect x="1068" y="583" width="3" height="19" fill="#ff0000"/>
<rect x="1077" y="599" width="1" height="26" fill="#00ff00"/>
<rect x="1075" y="604" width="5" height="11" fill="#00ff00"/>
<rect x="1076" y="605" width="3" height="9" fill="#ff0000"/>
<rect x="1085" y="578" width="1" height="38" fill="#00ff00"/>
<rect x="1083" y="581" width="5" height="34" fill="#00ff00"/>
<rect x="1093" y="576" width="1" height="22" fill="#00ff00"/>
<rect x="1091" y="578" width="5" height="3" fill="#00ff00"/>
<rect x="1101" y="534" width="1" height="45" fill="#00ff00"/>
<rect x="1099" y="544" width="5" height="33" fill="#00ff00"/>
<rect x="1109" y="486" width="1" height="57" fill="#00ff00"/>
<rect x="1107" y="503" width="5" height="40" fill="#00ff00"/>
<rect x="1117" y="502" width="1" height="20" fill="#00ff00"/>
<rect x="1115" y="504" width="5" height="2" fill="#00ff00"/>
<rect x="1116" y="504" width="3" height="2" fill="#ff0000"/>
<rect x="1125" y="463" width="1" height="42" fill="#00ff00"/>
<rect x="1123" y="486" width="5" height="19" fill="#00ff00"/>
<rect x="1133" y="482" width="1" height="22" fill="#00ff00"/>
<rect x="1131" y="487" width="5" height="11" fill="#00ff00"/>
<rect x="1132" y="488" width="3" height="9" fill="#ff0000"/>
<rect x="1141" y="471" width="1" height="33" fill="#00ff00"/>
<rect x="1139" y="490" width="5" height="8" fill="#00ff00"/>
<rect x="1149" y="482" width="1" height="24" fill="#00ff00"/>
<rect x="1147" y="491" width="5" height="15" fill="#00ff00"/>
<rect x="1148" y="492" width="3" height="13" fill="#ff0000"/>
<rect x="1157" y="479" width="1" height="36" fill="#00ff00"/>
<rect x="1155" y="500" width="5" height="5" fill="#00ff00"/>
<rect x="1165" y="493" width="1" height="37" fill="#00ff00"/>
<rect x="1163" y="500" width="5" height="26" fill="#00ff00"/>
<rect x="1164" y="501" width="3" height="24" fill="#ff0000"/>
<rect x="1173" y="455" width="1" height="73" fill="#00ff00"/>
<rect x="1171" y="455" width="5" height="72" fill="#00ff00"/>
<rect x="1181" y="454" width="1" height="24" fill="#00ff00"/>
<rect x="1179" y="455" width="5" height="20" fill="#00ff00"/>
<rect x="1180" y="456" width="3" height="18" fill="#ff0000"/>
<rect x="1189" y="465" width="1" height="22" fill="#00ff00"/>
<rect x="1187" y="467" width="5" height="9" fill="#00ff00"/>
<rect x="1197" y="456" width="1" height="20" fill="#00ff00"/>
<rect x="1195" y="463" width="5" height="4" fill="#00ff00"/>
<rect x="1205" y="460" width="1" height="44" fill="#00ff00"/>
<rect x="1203" y="464" width="5" height="40" fill="#00ff00"/>
<rect x="1204" y="465" width="3" height="38" fill="#ff0000"/>
<rect x="1213" y="487" width="1" height="19" fill="#00ff00"/>
<rect x="1211" y="495" width="5" height="9" fill="#00ff00"/>
<rect x="1221" y="492" width="1" height="26" fill="#00ff00"/>
<rect x="1219" y="495" width="5" height="21" fill="#00ff00"/>
<rect x="1220" y="496" width="3" height="19" fill="#ff0000"/>
<rect x="1229" y="496" width="1" height="20" fill="#00ff00"/>
<rect x="1227" y="502" width="5" height="14" fill="#00ff00"/>
<rect x="1237" y="483" width="1" height="22" fill="#00ff00"/>
<rect x="1235" y="492" width="5" height="10" fill="#00ff00"/>
<rect x="1245" y="490" width="1" height="10" fill="#00ff00"/>
<rect x="1243" y="492" width="5" height="1" fill="#00ff00"/>
<rect x="1253" y="484" width="1" height="12" fill="#00ff00"/>
<rect x="1251" y="490" width="5" height="3" fill="#00ff00"/>
<rect x="1261" y="485" width="1" height="11" fill="#00ff00"/>
<rect x="1259" y="491" width="5" height="3" fill="#00ff00"/>
<rect x="1260" y="492" width="3" height="1" fill="#ff0000"/>
<rect x="1269" y="490" width="1" height="7" fill="#00ff00"/>
<rect x="1267" y="490" width="5" height="4" fill="#00ff00"/>
<rect x="1277" y="489" width="1" height="9" fill="#00ff00"/>
<rect x="1275" y="490" width="5" height="3" fill="#00ff00"/>
<rect x="1276" y="491" width="3" height="1" fill="#ff0000"/>
<rect x="1285" y="492" width="1" height="9" fill="#00ff00"/>
<rect x="1283" y="494" width="5" height="7" fill="#00ff00"/>
<rect x="1284" y="495" width="3" height="5" fill="#ff0000"/>
<rect x="1293" y="500" width="1" height="19" fill="#00ff00"/>
<rect x="1291" y="501" width="5" height="12" fill="#00ff00"/>
<rect x="1292" y="502" width="3" height="10" fill="#ff0000"/>
<rect x="1301" y="510" width="1" height="7" fill="#00ff00"/>
<rect x="1299" y="513" width="5" height="4" fill="#00ff00"/>
<rect x="1300" y="514" width="3" height="2" fill="#ff0000"/>
<rect x="1309" y="507" width="1" height="11" fill="#00ff00"/>
<rect x="1307" y="515" width="5" height="2" fill="#00ff00"/>
<rect x="1317" y="515" width="1" height="10" fill="#00ff00"/>
<rect x="1315" y="515" width="5" height="7" fill="#00ff00"/>
<rect x="1316" y="516" width="3" height="5" fill="#ff0000"/>
<rect x="1325" y="512" width="1" height="10" fill="#00ff00"/>
<rect x="1323" y="517" width="5" height="5" fill="#00ff00"/>
<rect x="1333" y="516" width="1" height="13" fill="#00ff00"/>
<rect x="1331" y="517" width="5" height="10" fill="#00ff00"/>
<rect x="1332" y="518" width="3" height="8" fill="#ff0000"/>
<rect x="1341" y="520" width="1" height="9" fill="#00ff00"/>
<rect x="1339" y="524" width="5" height="1" fill="#00ff00"/>
<rect x="1349" y="519" width="1" height="12" fill="#00ff00"/>
<rect x="1347" y="523" width="5" height="2" fill="#00ff00"/>
<rect x="1357" y="522" width="1" height="10" fill="#00ff00"/>
<rect x="1355" y="523" width="5" height="8" fill="#00ff00"/>
<rect x="1356" y="524" width="3" height="6" fill="#ff0000"/>
<rect x="1365" y="528" width="1" height="7" fill="#00ff00"/>
<rect x="1363" y="529" width="5" height="2" fill="#00ff00"/>
<rect x="1373" y="528" width="1" height="7" fill="#00ff00"/>
<rect x="1371" y="529" width="5" height="5" fill="#00ff00"/>
<rect x="1372" y="530" width="3" height="3" fill="#ff0000"/>
<rect x="1381" y="531" width="1" height="10" fill="#00ff00"/>
<rect x="1379" y="532" width="5" height="6" fill="#00ff00"/>
<rect x="1380" y="533" width="3" height="4" fill="#ff0000"/>
<rect x="1389" y="524" width="1" height="16" fill="#00ff00"/>
<rect x="1387" y="528" width="5" height="11" fill="#00ff00"/>
<rect x="1397" y="527" width="1" height="3" fill="#00ff00"/>
<rect x="1395" y="528" width="5" height="1" fill="#00ff00"/>
<rect x="1405" y="524" width="1" height="15" fill="#00ff00"/>
<rect x="1403" y="528" width="5" height="10" fill="#00ff00"/>
<rect x="1404" y="529" width="3" height="8" fill="#ff0000"/>
<rect x="1413" y="537" width="1" height="5" fill="#00ff00"/>
<rect x="1411" y="538" width="5" height="1" fill="#00ff00"/>
<rect x="1421" y="534" width="1" height="6" fill="#00ff00"/>
<rect x="1419" y="535" width="5" height="4" fill="#00ff00"/>
<rect x="1429" y="535" width="1" height="12" fill="#00ff00"/>
<rect x="1427" y="536" width="5" height="3" fill="#00ff00"/>
<rect x="1428" y="537" width="3" height="1" fill="#ff0000"/>
<rect x="1437" y="536" width="1" height="18" fill="#00ff00"/>
<rect x="1435" y="538" width="5" height="13" fill="#00ff00"/>
<rect x="1436" y="539" width="3" height="11" fill="#ff0000"/>
<rect x="1445" y="551" width="1" height="8" fill="#00ff00"/>
<rect x="1443" y="551" width="5" height="2" fill="#00ff00"/>
<rect x="1444" y="551" width="3" height="2" fill="#ff0000"/>
<rect x="1453" y="549" width="1" height="10" fill="#00ff00"/>
<rect x="1451" y="553" width="5" height="4" fill="#00ff00"/>
<rect x="1452" y="554" width="3" height="2" fill="#ff0000"/>
<rect x="1461" y="554" width="1" height="15" fill="#00ff00"/>
<rect x="1459" y="555" width="5" height="3" fill="#00ff00"/>
<rect x="1469" y="546" width="1" height="11" fill="#00ff00"/>
<rect x="1467" y="555" width="5" height="2" fill="#00ff00"/>
<rect x="1477" y="556" width="1" height="12" fill="#00ff00"/>
<rect x="1475" y="556" width="5" height="11" fill="#00ff00"/>
<rect x="1476" y="557" width="3" height="9" fill="#ff0000"/>
<rect x="1485" y="562" width="1" height="9" fill="#00ff00"/>
<rect x="1483" y="566" width="5" height="4" fill="#00ff00"/>
<rect x="1484" y="567" width="3" height="2" fill="#ff0000"/>
<rect x="1493" y="561" width="1" height="10" fill="#00ff00"/>
<rect x="1491" y="561" width="5" height="8" fill="#00ff00"/>
<rect x="1501" y="560" width="1" height="14" fill="#00ff00"/>
<rect x="1499" y="561" width="5" height="10" fill="#00ff00"/>
<rect x="1500" y="562" width="3" height="8" fill="#ff0000"/>
<rect x="1509" y="567" width="1" height="9" fill="#00ff00"/>
<rect x="1507" y="571" width="5" height="5" fill="#00ff00"/>
<rect x="1508" y="572" width="3" height="3" fill="#ff0000"/>
<rect x="1517" y="551" width="1" height="26" fill="#00ff00"/>
<rect x="1515" y="555" width="5" height="21" fill="#00ff00"/>
<rect x="1525" y="555" width="1" height="8" fill="#00ff00"/>
<rect x="1523" y="555" width="5" height="7" fill="#00ff00"/>
<rect x="1524" y="556" width="3" height="5" fill="#ff0000"/>
<rect x="1533" y="552" width="1" height="11" fill="#00ff00"/>
<rect x="1531" y="558" width="5" height="4" fill="#00ff00"/>
<rect x="1541" y="541" width="1" height="18" fill="#00ff00"/>
<rect x="1539" y="552" width="5" height="6" fill="#00ff00"/>
<rect x="1549" y="551" width="1" height="11" fill="#00ff00"/>
<rect x="1547" y="552" width="5" height="4" fill="#00ff00"/>
<rect x="1548" y="553" width="3" height="2" fill="#ff0000"/>
<rect x="1557" y="552" width="1" height="5" fill="#00ff00"/>
<rect x="1555" y="553" width="5" height="4" fill="#00ff00"/>
<rect x="1565" y="554" width="1" height="13" fill="#00ff00"/>
<rect x="1563" y="555" width="5" height="8" fill="#00ff00"/>
<rect x="1564" y="556" width="3" height="6" fill="#ff0000"/>
<rect x="1573" y="562" width="1" height="12" fill="#00ff00"/>
<rect x="1571" y="563" width="5" height="5" fill="#00ff00"/>
<rect x="1572" y="564" width="3" height="3" fill="#ff0000"/>
<rect x="1581" y="566" width="1" height="10" fill="#00ff00"/>
<rect x="1579" y="568" width="5" height="6" fill="#00ff00"/>
<rect x="1580" y="569" width="3" height="4" fill="#ff0000"/>
<rect x="1589" y="566" width="1" height="10" fill="#00ff00"/>
<rect x="1587" y="569" width="5" height="5" fill="#00ff00"/>
<rect x="1597" y="565" width="1" height="6" fill="#00ff00"/>
<rect x="1595" y="567" width="5" height="2" fill="#00ff00"/>
<rect x="1605" y="558" width="1" height="20" fill="#00ff00"/>
<rect x="1603" y="560" width="5" height="8" fill="#00ff00"/>
<rect x="1613" y="535" width="1" height="27" fill="#00ff00"/>
<rect x="1611" y="545" width="5" height="16" fill="#00ff00"/>
<rect x="1621" y="545" width="1" height="13" fill="#00ff00"/>
<rect x="1619" y="545" width="5" height="4" fill="#00ff00"/>
<rect x="1620" y="546" width="3" height="2" fill="#ff0000"/>
<rect x="1629" y="542" width="1" height="25" fill="#00ff00"/>
<rect x="1627" y="549" width="5" height="11" fill="#00ff00"/>
<rect x="1628" y="550" width="3" height="9" fill="#ff0000"/>
<rect x="1637" y="543" width="1" height="26" fill="#00ff00"/>
<rect x="1635" y="559" width="5" height="7" fill="#00ff00"/>
<rect x="1636" y="560" width="3" height="5" fill="#ff0000"/>
<rect x="1645" y="562" width="1" height="17" fill="#00ff00"/>
<rect x="1643" y="566" width="5" height="12" fill="#00ff00"/>
<rect x="1644" y="567" width="3" height="10" fill="#ff0000"/>
<rect x="1653" y="554" width="1" height="25" fill="#00ff00"/>
<rect x="1651" y="563" width="5" height="16" fill="#00ff00"/>
<rect x="1661" y="561" width="1" height="35" fill="#00ff00"/>
<rect x="1659" y="565" width="5" height="6" fill="#00ff00"/>
<rect x="1660" y="566" width="3" height="4" fill="#ff0000"/>
<rect x="1669" y="544" width="1" height="29" fill="#00ff00"/>
<rect x="1667" y="558" width="5" height="14" fill="#00ff00"/>
<rect x="1677" y="558" width="1" height="13" fill="#00ff00"/>
<rect x="1675" y="558" width="5" height="11" fill="#00ff00"/>
<rect x="1676" y="559" width="3" height="9" fill="#ff0000"/>
</g>
<path d="M1690 440 L1700 440 L1695 445 Z" fill="#8090a8" shape-rendering="auto"/>
</svg>
<div style="left:980px;top:439px;width:897px;height:265px;border:1px solid #fff"></div>
<div style="left:984px;top:442px;width:217px;height:11px;background:#000;"></div>
<div style="top:442px;height:12px;line-height:12px;font-size:9.5px;color:#fff;white-space:pre;left:985.20px;transform-origin:0 50%;transform:scaleX(0.9740);">GBPUSDm,M15  1.65183 1.65188 1.65102 1.65104</div>
<div style="left:1877px;top:445px;width:2px;height:1px;background:#fff;"></div>
<div style="top:439px;height:12px;line-height:12px;font-size:9.5px;color:#fff;white-space:pre;left:1883.10px;transform-origin:0 50%;transform:scaleX(0.9406);">1.65960</div>
<div style="left:1877px;top:477px;width:2px;height:1px;background:#fff;"></div>
<div style="top:471px;height:12px;line-height:12px;font-size:9.5px;color:#fff;white-space:pre;left:1883.10px;transform-origin:0 50%;transform:scaleX(0.9406);">1.65740</div>
<div style="left:1877px;top:509px;width:2px;height:1px;background:#fff;"></div>
<div style="top:503px;height:12px;line-height:12px;font-size:9.5px;color:#fff;white-space:pre;left:1883.10px;transform-origin:0 50%;transform:scaleX(0.9406);">1.65520</div>
<div style="left:1877px;top:541px;width:2px;height:1px;background:#fff;"></div>
<div style="top:535px;height:12px;line-height:12px;font-size:9.5px;color:#fff;white-space:pre;left:1883.10px;transform-origin:0 50%;transform:scaleX(0.9406);">1.65300</div>
<div style="left:1877px;top:575px;width:2px;height:1px;background:#fff;"></div>
<div style="top:569px;height:12px;line-height:12px;font-size:9.5px;color:#fff;white-space:pre;left:1883.10px;transform-origin:0 50%;transform:scaleX(0.9406);">1.65080</div>
<div style="left:1877px;top:605px;width:2px;height:1px;background:#fff;"></div>
<div style="top:599px;height:12px;line-height:12px;font-size:9.5px;color:#fff;white-space:pre;left:1883.10px;transform-origin:0 50%;transform:scaleX(0.9406);">1.64860</div>
<div style="left:1877px;top:637px;width:2px;height:1px;background:#fff;"></div>
<div style="top:631px;height:12px;line-height:12px;font-size:9.5px;color:#fff;white-space:pre;left:1883.10px;transform-origin:0 50%;transform:scaleX(0.9406);">1.64640</div>
<div style="left:1877px;top:669px;width:2px;height:1px;background:#fff;"></div>
<div style="top:663px;height:12px;line-height:12px;font-size:9.5px;color:#fff;white-space:pre;left:1883.10px;transform-origin:0 50%;transform:scaleX(0.9406);">1.64420</div>
<div style="left:1877px;top:701px;width:2px;height:1px;background:#fff;"></div>
<div style="top:695px;height:12px;line-height:12px;font-size:9.5px;color:#fff;white-space:pre;left:1883.10px;transform-origin:0 50%;transform:scaleX(0.9406);">1.64200</div>
<div style="left:1878px;top:559px;width:38px;height:6px;background:#ff0000;overflow:hidden">
<div style="top:0px;height:12px;line-height:12px;font-size:9.5px;color:#200;white-space:pre;left:5.30px;transform-origin:0 50%;transform:scaleX(0.9406);">1.65138</div>
</div>
<div style="left:1878px;top:564px;width:38px;height:10px;background:#fff;"></div>
<div style="top:563px;height:12px;line-height:12px;font-size:9.5px;color:#000;white-space:pre;left:1883.30px;transform-origin:0 50%;transform:scaleX(0.9406);">1.65104</div>
<div style="left:981px;top:703px;width:1px;height:4px;background:#fff;"></div>
<div style="top:707px;height:12px;line-height:12px;font-size:9.5px;color:#fff;white-space:pre;left:981.30px;transform-origin:0 50%;transform:scaleX(0.9876);">17 Aug 2011</div>
<div style="left:1045px;top:703px;width:1px;height:4px;background:#fff;"></div>
<div style="top:707px;height:12px;line-height:12px;font-size:9.5px;color:#fff;white-space:pre;left:1045.30px;transform-origin:0 50%;transform:scaleX(0.9803);">17 Aug 11:45</div>
<div style="left:1109px;top:703px;width:1px;height:4px;background:#fff;"></div>
<div style="top:707px;height:12px;line-height:12px;font-size:9.5px;color:#fff;white-space:pre;left:1109.30px;transform-origin:0 50%;transform:scaleX(0.9679);">17 Aug 13:45</div>
<div style="left:1173px;top:703px;width:1px;height:4px;background:#fff;"></div>
<div style="top:707px;height:12px;line-height:12px;font-size:9.5px;color:#fff;white-space:pre;left:1173.30px;transform-origin:0 50%;transform:scaleX(0.9679);">17 Aug 15:45</div>
<div style="left:1237px;top:703px;width:1px;height:4px;background:#fff;"></div>
<div style="top:707px;height:12px;line-height:12px;font-size:9.5px;color:#fff;white-space:pre;left:1237.30px;transform-origin:0 50%;transform:scaleX(0.9679);">17 Aug 17:45</div>
<div style="left:1301px;top:703px;width:1px;height:4px;background:#fff;"></div>
<div style="top:707px;height:12px;line-height:12px;font-size:9.5px;color:#fff;white-space:pre;left:1301.30px;transform-origin:0 50%;transform:scaleX(0.9679);">17 Aug 19:45</div>
<div style="left:1365px;top:703px;width:1px;height:4px;background:#fff;"></div>
<div style="top:707px;height:12px;line-height:12px;font-size:9.5px;color:#fff;white-space:pre;left:1365.30px;transform-origin:0 50%;transform:scaleX(0.9679);">17 Aug 21:48</div>
<div style="left:1429px;top:703px;width:1px;height:4px;background:#fff;"></div>
<div style="top:707px;height:12px;line-height:12px;font-size:9.5px;color:#fff;white-space:pre;left:1429.30px;transform-origin:0 50%;transform:scaleX(0.9679);">17 Aug 23:48</div>
<div style="left:1493px;top:703px;width:1px;height:4px;background:#fff;"></div>
<div style="top:707px;height:12px;line-height:12px;font-size:9.5px;color:#fff;white-space:pre;left:1493.30px;transform-origin:0 50%;transform:scaleX(0.9679);">18 Aug 01:45</div>
<div style="left:1557px;top:703px;width:1px;height:4px;background:#fff;"></div>
<div style="top:707px;height:12px;line-height:12px;font-size:9.5px;color:#fff;white-space:pre;left:1557.30px;transform-origin:0 50%;transform:scaleX(0.9679);">18 Aug 03:45</div>
<div style="left:1621px;top:703px;width:1px;height:4px;background:#fff;"></div>
<div style="top:707px;height:12px;line-height:12px;font-size:9.5px;color:#fff;white-space:pre;left:1621.30px;transform-origin:0 50%;transform:scaleX(0.9679);">18 Aug 05:45</div>
<div style="left:8px;top:772px;width:1920px;height:2px;background:#f6f6f6;"></div>
<div style="left:8px;top:774px;width:1920px;height:1px;background:#000;"></div>
<div style="left:8px;top:775px;width:1920px;height:23px;background:#f0f0f0;"></div>
<div style="left:8px;top:774px;width:1px;height:19px;background:#555;"></div>
<div style="top:777px;height:13px;line-height:13px;font-size:11px;color:#808080;white-space:pre;left:22.30px;transform-origin:0 50%;transform:scaleX(0.8800);">GBPJPYm,M5</div>
<div style="left:96px;top:775px;width:93px;height:18px;background:#fff;border:1px solid #000;border-top:none;border-bottom:1.5px solid #000;border-right:2px solid #000"></div>
<div style="top:777px;height:13px;line-height:13px;font-size:11px;color:#000;white-space:pre;left:106.40px;transform-origin:0 50%;transform:scaleX(0.8933);">EURJPYm,M30</div>
<div style="top:777px;height:13px;line-height:13px;font-size:11px;color:#808080;white-space:pre;left:199.40px;transform-origin:0 50%;transform:scaleX(0.8942);">EURUSDm,M15</div>
<div style="left:284px;top:778px;width:1px;height:12px;background:#555;"></div>
<div style="top:777px;height:13px;line-height:13px;font-size:11px;color:#808080;white-space:pre;left:293.40px;transform-origin:0 50%;transform:scaleX(0.8904);">GBPUSDm,M15</div>
<div style="left:377px;top:778px;width:1px;height:12px;background:#555;"></div>
<svg style="left:1899px;top:780px" width="24" height="9" viewBox="0 0 24 9"><path d="M5 1 V8 L1 4.5 Z M19 1 V8 L23 4.5 Z" fill="#a0a0a0"/></svg>
<div style="left:8px;top:793px;width:1920px;height:1px;background:#fff;"></div>
<div style="left:8px;top:798px;width:1920px;height:268px;background:#f0f0f0;"></div>
<div style="left:9px;top:812px;width:14px;height:251px;background:#c9d9ea;"></div>
<svg style="left:11px;top:799px" width="9" height="9" viewBox="0 0 9 9"><path d="M1.5 1.5 L7.5 7.5 M7.5 1.5 L1.5 7.5" stroke="#000" stroke-width="1.6"/></svg>
<div style="left:9px;top:1018px;width:14px;height:44px;overflow:visible"><div style="left:-15px;top:15px;width:44px;height:14px;line-height:14px;font-size:11px;color:#6a7886;transform:rotate(-90deg);white-space:pre">Terminál</div></div>
<div style="left:23px;top:798px;width:1902px;height:246px;background:#fff;"></div>
<div style="left:23px;top:798px;width:1902px;height:1px;background:#a0a0a0;"></div>
<div style="left:23px;top:798px;width:1px;height:246px;background:#a0a0a0;"></div>
<div style="left:24px;top:799px;width:1883px;height:22px;background:linear-gradient(#fff 0,#fff 40%,#f3f3f4 45%,#efeff0 100%)"></div>
<div style="left:24px;top:821px;width:1883px;height:1px;background:#d5d5d5;"></div>
<div style="left:24px;top:822px;width:1883px;height:1px;background:#fbfbfb;"></div>
<div style="left:24px;top:823px;width:1871px;height:1px;background:#d4d4d4;"></div>
<div style="left:209px;top:799px;width:1px;height:22px;background:#e2e3e6;"></div>
<div style="left:529px;top:799px;width:1px;height:22px;background:#e2e3e6;"></div>
<div style="left:659px;top:799px;width:1px;height:22px;background:#e2e3e6;"></div>
<div style="left:760px;top:799px;width:1px;height:22px;background:#e2e3e6;"></div>
<div style="left:890px;top:799px;width:1px;height:22px;background:#e2e3e6;"></div>
<div style="left:1035px;top:799px;width:1px;height:22px;background:#e2e3e6;"></div>
<div style="left:1180px;top:799px;width:1px;height:22px;background:#e2e3e6;"></div>
<div style="left:1325px;top:799px;width:1px;height:22px;background:#e2e3e6;"></div>
<div style="left:1470px;top:799px;width:1px;height:22px;background:#e2e3e6;"></div>
<div style="left:1615px;top:799px;width:1px;height:22px;background:#e2e3e6;"></div>
<div style="left:1731px;top:799px;width:1px;height:22px;background:#e2e3e6;"></div>
<div style="left:1894px;top:799px;width:1px;height:22px;background:#e2e3e6;"></div>
<div style="left:1906px;top:799px;width:1px;height:22px;background:#e2e3e6;"></div>
<div style="top:804px;height:14px;line-height:14px;font-size:12px;color:#000;white-space:pre;left:30.00px;transform-origin:0 50%;transform:scaleX(0.8995);">Pokyn</div>
<div style="top:804px;height:14px;line-height:14px;font-size:12px;color:#000;white-space:pre;left:483.82px;transform-origin:100% 50%;transform:scaleX(0.7980);">Èas</div>
<div style="top:804px;height:14px;line-height:14px;font-size:12px;color:#000;white-space:pre;left:635.26px;transform-origin:100% 50%;transform:scaleX(0.9048);">Typ</div>
<div style="top:804px;height:14px;line-height:14px;font-size:12px;color:#000;white-space:pre;left:732.24px;transform-origin:100% 50%;transform:scaleX(0.9420);">Lotù</div>
<div style="top:804px;height:14px;line-height:14px;font-size:12px;color:#000;white-space:pre;left:845.59px;transform-origin:100% 50%;transform:scaleX(0.9097);">Symbol</div>
<div style="top:804px;height:14px;line-height:14px;font-size:12px;color:#000;white-space:pre;left:1001.91px;transform-origin:100% 50%;transform:scaleX(0.8715);">Cena</div>
<div style="top:804px;height:14px;line-height:14px;font-size:12px;color:#000;white-space:pre;left:1096.23px;transform-origin:100% 50%;transform:scaleX(0.9248);">Zastavení ztrát</div>
<div style="top:804px;height:14px;line-height:14px;font-size:12px;color:#000;white-space:pre;left:1240.57px;transform-origin:100% 50%;transform:scaleX(0.9184);">Realizovat zisk</div>
<div style="top:804px;height:14px;line-height:14px;font-size:12px;color:#000;white-space:pre;left:1436.91px;transform-origin:100% 50%;transform:scaleX(0.8715);">Cena</div>
<div style="top:804px;height:14px;line-height:14px;font-size:12px;color:#000;white-space:pre;left:1570.59px;transform-origin:100% 50%;transform:scaleX(0.8822);">Provize</div>
<div style="top:804px;height:14px;line-height:14px;font-size:12px;color:#000;white-space:pre;left:1696.58px;transform-origin:100% 50%;transform:scaleX(0.8995);">Swap</div>
<div style="top:804px;height:14px;line-height:14px;font-size:12px;color:#000;white-space:pre;left:1866.60px;transform-origin:100% 50%;transform:scaleX(0.8865);">Zisk</div>
<svg style="left:516px;top:807px" width="6" height="8" viewBox="0 0 6 8"><path d="M1 7 L5 1" stroke="#a0a0a0" stroke-width="1"/></svg>
<div style="left:24px;top:824px;width:1871px;height:20px;background:#fff;"></div>
<div style="left:24px;top:843px;width:1871px;height:1px;background:#d4d4d4;"></div>
<div style="left:209px;top:824px;width:1px;height:19px;background:#c4c4c4;"></div>
<div style="left:529px;top:824px;width:1px;height:19px;background:#c4c4c4;"></div>
<div style="left:659px;top:824px;width:1px;height:19px;background:#c4c4c4;"></div>
<div style="left:760px;top:824px;width:1px;height:19px;background:#c4c4c4;"></div>
<div style="left:890px;top:824px;width:1px;height:19px;background:#c4c4c4;"></div>
<div style="left:1035px;top:824px;width:1px;height:19px;background:#c4c4c4;"></div>
<div style="left:1180px;top:824px;width:1px;height:19px;background:#c4c4c4;"></div>
<div style="left:1325px;top:824px;width:1px;height:19px;background:#c4c4c4;"></div>
<div style="left:1470px;top:824px;width:1px;height:19px;background:#c4c4c4;"></div>
<div style="left:1615px;top:824px;width:1px;height:19px;background:#c4c4c4;"></div>
<div style="left:1731px;top:824px;width:1px;height:19px;background:#c4c4c4;"></div>
<svg style="left:26px;top:826px" width="15" height="16" viewBox="0 0 15 16"><path d="M1 1 H7.5 L11 4.5 V13 H1 Z" fill="#fdfdfd" stroke="#3a3a3a" stroke-width="1.2"/><path d="M7.5 1 V4.5 H11" fill="none" stroke="#3a3a3a" stroke-width=".9"/><circle cx="10.5" cy="11.8" r="3" fill="#e07820" stroke="#8a3c08" stroke-width=".8"/></svg>
<div style="top:827px;height:14px;line-height:14px;font-size:12px;color:#000;white-space:pre;left:48.60px;transform-origin:0 50%;transform:scaleX(0.8990);">41914792</div>
<div style="top:827px;height:14px;line-height:14px;font-size:12px;color:#000;white-space:pre;left:433.87px;transform-origin:100% 50%;transform:scaleX(0.9050);">2011.08.18 02:20</div>
<div style="top:827px;height:14px;line-height:14px;font-size:12px;color:#000;white-space:pre;left:638.39px;transform-origin:100% 50%;transform:scaleX(0.9050);">sell</div>
<div style="top:827px;height:14px;line-height:14px;font-size:12px;color:#000;white-space:pre;left:734.04px;transform-origin:100% 50%;transform:scaleX(0.9050);">0.10</div>
<div style="top:827px;height:14px;line-height:14px;font-size:12px;color:#000;white-space:pre;left:842.04px;transform-origin:100% 50%;transform:scaleX(0.9050);">gbpjpym</div>
<div style="top:827px;height:14px;line-height:14px;font-size:12px;color:#000;white-space:pre;left:989.02px;transform-origin:100% 50%;transform:scaleX(0.9050);">126.403</div>
<div style="top:827px;height:14px;line-height:14px;font-size:12px;color:#000;white-space:pre;left:1147.37px;transform-origin:100% 50%;transform:scaleX(0.9050);">0.000</div>
<div style="top:827px;height:14px;line-height:14px;font-size:12px;color:#000;white-space:pre;left:1292.37px;transform-origin:100% 50%;transform:scaleX(0.9050);">0.000</div>
<div style="top:827px;height:14px;line-height:14px;font-size:12px;color:#000;white-space:pre;left:1424.02px;transform-origin:100% 50%;transform:scaleX(0.9050);">126.550</div>
<div style="top:827px;height:14px;line-height:14px;font-size:12px;color:#000;white-space:pre;left:1589.04px;transform-origin:100% 50%;transform:scaleX(0.9050);">0.00</div>
<div style="top:827px;height:14px;line-height:14px;font-size:12px;color:#000;white-space:pre;left:1705.04px;transform-origin:100% 50%;transform:scaleX(0.9050);">0.00</div>
<div style="top:827px;height:14px;line-height:14px;font-size:12px;color:#000;white-space:pre;left:1862.95px;transform-origin:100% 50%;transform:scaleX(0.9050);">-1.92</div>
<div style="left:24px;top:844px;width:1871px;height:20px;background:#ebebeb;"></div>
<div style="left:24px;top:863px;width:1871px;height:1px;background:#d4d4d4;"></div>
<div style="left:209px;top:844px;width:1px;height:19px;background:#c4c4c4;"></div>
<div style="left:529px;top:844px;width:1px;height:19px;background:#c4c4c4;"></div>
<div style="left:659px;top:844px;width:1px;height:19px;background:#c4c4c4;"></div>
<div style="left:760px;top:844px;width:1px;height:19px;background:#c4c4c4;"></div>
<div style="left:890px;top:844px;width:1px;height:19px;background:#c4c4c4;"></div>
<div style="left:1035px;top:844px;width:1px;height:19px;background:#c4c4c4;"></div>
<div style="left:1180px;top:844px;width:1px;height:19px;background:#c4c4c4;"></div>
<div style="left:1325px;top:844px;width:1px;height:19px;background:#c4c4c4;"></div>
<div style="left:1470px;top:844px;width:1px;height:19px;background:#c4c4c4;"></div>
<div style="left:1615px;top:844px;width:1px;height:19px;background:#c4c4c4;"></div>
<div style="left:1731px;top:844px;width:1px;height:19px;background:#c4c4c4;"></div>
<svg style="left:26px;top:846px" width="15" height="16" viewBox="0 0 15 16"><path d="M1 1 H7.5 L11 4.5 V13 H1 Z" fill="#fdfdfd" stroke="#3a3a3a" stroke-width="1.2"/><path d="M7.5 1 V4.5 H11" fill="none" stroke="#3a3a3a" stroke-width=".9"/><circle cx="10.5" cy="11.8" r="3" fill="#e07820" stroke="#8a3c08" stroke-width=".8"/></svg>
<div style="top:847px;height:14px;line-height:14px;font-size:12px;color:#000;white-space:pre;left:48.60px;transform-origin:0 50%;transform:scaleX(0.8990);">41914940</div>
<div style="top:847px;height:14px;line-height:14px;font-size:12px;color:#000;white-space:pre;left:433.87px;transform-origin:100% 50%;transform:scaleX(0.9050);">2011.08.18 02:20</div>
<div style="top:847px;height:14px;line-height:14px;font-size:12px;color:#000;white-space:pre;left:638.39px;transform-origin:100% 50%;transform:scaleX(0.9050);">sell</div>
<div style="top:847px;height:14px;line-height:14px;font-size:12px;color:#000;white-space:pre;left:734.04px;transform-origin:100% 50%;transform:scaleX(0.9050);">0.03</div>
<div style="top:847px;height:14px;line-height:14px;font-size:12px;color:#000;white-space:pre;left:842.04px;transform-origin:100% 50%;transform:scaleX(0.9050);">gbpjpym</div>
<div style="top:847px;height:14px;line-height:14px;font-size:12px;color:#000;white-space:pre;left:989.02px;transform-origin:100% 50%;transform:scaleX(0.9050);">126.393</div>
<div style="top:847px;height:14px;line-height:14px;font-size:12px;color:#000;white-space:pre;left:1147.37px;transform-origin:100% 50%;transform:scaleX(0.9050);">0.000</div>
<div style="top:847px;height:14px;line-height:14px;font-size:12px;color:#000;white-space:pre;left:1292.37px;transform-origin:100% 50%;transform:scaleX(0.9050);">0.000</div>
<div style="top:847px;height:14px;line-height:14px;font-size:12px;color:#000;white-space:pre;left:1424.02px;transform-origin:100% 50%;transform:scaleX(0.9050);">126.550</div>
<div style="top:847px;height:14px;line-height:14px;font-size:12px;color:#000;white-space:pre;left:1589.04px;transform-origin:100% 50%;transform:scaleX(0.9050);">0.00</div>
<div style="top:847px;height:14px;line-height:14px;font-size:12px;color:#000;white-space:pre;left:1705.04px;transform-origin:100% 50%;transform:scaleX(0.9050);">0.00</div>
<div style="top:847px;height:14px;line-height:14px;font-size:12px;color:#000;white-space:pre;left:1862.95px;transform-origin:100% 50%;transform:scaleX(0.9050);">-0.61</div>
<div style="left:24px;top:864px;width:1871px;height:20px;background:#fff;"></div>
<div style="left:24px;top:883px;width:1871px;height:1px;background:#d4d4d4;"></div>
<div style="left:209px;top:864px;width:1px;height:19px;background:#c4c4c4;"></div>
<div style="left:529px;top:864px;width:1px;height:19px;background:#c4c4c4;"></div>
<div style="left:659px;top:864px;width:1px;height:19px;background:#c4c4c4;"></div>
<div style="left:760px;top:864px;width:1px;height:19px;background:#c4c4c4;"></div>
<div style="left:890px;top:864px;width:1px;height:19px;background:#c4c4c4;"></div>
<div style="left:1035px;top:864px;width:1px;height:19px;background:#c4c4c4;"></div>
<div style="left:1180px;top:864px;width:1px;height:19px;background:#c4c4c4;"></div>
<div style="left:1325px;top:864px;width:1px;height:19px;background:#c4c4c4;"></div>
<div style="left:1470px;top:864px;width:1px;height:19px;background:#c4c4c4;"></div>
<div style="left:1615px;top:864px;width:1px;height:19px;background:#c4c4c4;"></div>
<div style="left:1731px;top:864px;width:1px;height:19px;background:#c4c4c4;"></div>
<svg style="left:26px;top:866px" width="15" height="16" viewBox="0 0 15 16"><path d="M1 1 H7.5 L11 4.5 V13 H1 Z" fill="#fdfdfd" stroke="#3a3a3a" stroke-width="1.2"/><path d="M7.5 1 V4.5 H11" fill="none" stroke="#3a3a3a" stroke-width=".9"/><circle cx="10.5" cy="11.8" r="3" fill="#e07820" stroke="#8a3c08" stroke-width=".8"/></svg>
<div style="top:867px;height:14px;line-height:14px;font-size:12px;color:#000;white-space:pre;left:48.60px;transform-origin:0 50%;transform:scaleX(0.8990);">41915571</div>
<div style="top:867px;height:14px;line-height:14px;font-size:12px;color:#000;white-space:pre;left:433.87px;transform-origin:100% 50%;transform:scaleX(0.9050);">2011.08.18 03:18</div>
<div style="top:867px;height:14px;line-height:14px;font-size:12px;color:#000;white-space:pre;left:638.39px;transform-origin:100% 50%;transform:scaleX(0.9050);">sell</div>
<div style="top:867px;height:14px;line-height:14px;font-size:12px;color:#000;white-space:pre;left:734.04px;transform-origin:100% 50%;transform:scaleX(0.9050);">0.05</div>
<div style="top:867px;height:14px;line-height:14px;font-size:12px;color:#000;white-space:pre;left:842.04px;transform-origin:100% 50%;transform:scaleX(0.9050);">gbpjpym</div>
<div style="top:867px;height:14px;line-height:14px;font-size:12px;color:#000;white-space:pre;left:989.02px;transform-origin:100% 50%;transform:scaleX(0.9050);">126.643</div>
<div style="top:867px;height:14px;line-height:14px;font-size:12px;color:#000;white-space:pre;left:1147.37px;transform-origin:100% 50%;transform:scaleX(0.9050);">0.000</div>
<div style="top:867px;height:14px;line-height:14px;font-size:12px;color:#000;white-space:pre;left:1292.37px;transform-origin:100% 50%;transform:scaleX(0.9050);">0.000</div>
<div style="top:867px;height:14px;line-height:14px;font-size:12px;color:#000;white-space:pre;left:1424.02px;transform-origin:100% 50%;transform:scaleX(0.9050);">126.550</div>
<div style="top:867px;height:14px;line-height:14px;font-size:12px;color:#000;white-space:pre;left:1589.04px;transform-origin:100% 50%;transform:scaleX(0.9050);">0.00</div>
<div style="top:867px;height:14px;line-height:14px;font-size:12px;color:#000;white-space:pre;left:1705.04px;transform-origin:100% 50%;transform:scaleX(0.9050);">0.00</div>
<div style="top:867px;height:14px;line-height:14px;font-size:12px;color:#000;white-space:pre;left:1866.94px;transform-origin:100% 50%;transform:scaleX(0.9050);">0.60</div>
<div style="left:24px;top:884px;width:1871px;height:20px;background:#ebebeb;"></div>
<div style="left:24px;top:903px;width:1871px;height:1px;background:#d4d4d4;"></div>
<div style="left:209px;top:884px;width:1px;height:19px;background:#c4c4c4;"></div>
<div style="left:529px;top:884px;width:1px;height:19px;background:#c4c4c4;"></div>
<div style="left:659px;top:884px;width:1px;height:19px;background:#c4c4c4;"></div>
<div style="left:760px;top:884px;width:1px;height:19px;background:#c4c4c4;"></div>
<div style="left:890px;top:884px;width:1px;height:19px;background:#c4c4c4;"></div>
<div style="left:1035px;top:884px;width:1px;height:19px;background:#c4c4c4;"></div>
<div style="left:1180px;top:884px;width:1px;height:19px;background:#c4c4c4;"></div>
<div style="left:1325px;top:884px;width:1px;height:19px;background:#c4c4c4;"></div>
<div style="left:1470px;top:884px;width:1px;height:19px;background:#c4c4c4;"></div>
<div style="left:1615px;top:884px;width:1px;height:19px;background:#c4c4c4;"></div>
<div style="left:1731px;top:884px;width:1px;height:19px;background:#c4c4c4;"></div>
<svg style="left:26px;top:886px" width="15" height="16" viewBox="0 0 15 16"><path d="M1 1 H7.5 L11 4.5 V13 H1 Z" fill="#fdfdfd" stroke="#3a3a3a" stroke-width="1.2"/><path d="M7.5 1 V4.5 H11" fill="none" stroke="#3a3a3a" stroke-width=".9"/><circle cx="10.5" cy="11.8" r="3" fill="#2f8ee8" stroke="#0a4c98" stroke-width=".8"/></svg>
<div style="top:887px;height:14px;line-height:14px;font-size:12px;color:#000;white-space:pre;left:48.60px;transform-origin:0 50%;transform:scaleX(0.8990);">41915539</div>
<div style="top:887px;height:14px;line-height:14px;font-size:12px;color:#000;white-space:pre;left:433.87px;transform-origin:100% 50%;transform:scaleX(0.9050);">2011.08.18 03:22</div>
<div style="top:887px;height:14px;line-height:14px;font-size:12px;color:#000;white-space:pre;left:637.05px;transform-origin:100% 50%;transform:scaleX(0.9050);">buy</div>
<div style="top:887px;height:14px;line-height:14px;font-size:12px;color:#000;white-space:pre;left:734.04px;transform-origin:100% 50%;transform:scaleX(0.9050);">0.05</div>
<div style="top:887px;height:14px;line-height:14px;font-size:12px;color:#000;white-space:pre;left:838.03px;transform-origin:100% 50%;transform:scaleX(0.9050);">gbpusdm</div>
<div style="top:887px;height:14px;line-height:14px;font-size:12px;color:#000;white-space:pre;left:989.02px;transform-origin:100% 50%;transform:scaleX(0.9050);">1.65305</div>
<div style="top:887px;height:14px;line-height:14px;font-size:12px;color:#000;white-space:pre;left:1134.02px;transform-origin:100% 50%;transform:scaleX(0.9050);">0.00000</div>
<div style="top:887px;height:14px;line-height:14px;font-size:12px;color:#000;white-space:pre;left:1279.02px;transform-origin:100% 50%;transform:scaleX(0.9050);">0.00000</div>
<div style="top:887px;height:14px;line-height:14px;font-size:12px;color:#000;white-space:pre;left:1424.02px;transform-origin:100% 50%;transform:scaleX(0.9050);">1.65104</div>
<div style="top:887px;height:14px;line-height:14px;font-size:12px;color:#000;white-space:pre;left:1589.04px;transform-origin:100% 50%;transform:scaleX(0.9050);">0.00</div>
<div style="top:887px;height:14px;line-height:14px;font-size:12px;color:#000;white-space:pre;left:1705.04px;transform-origin:100% 50%;transform:scaleX(0.9050);">0.00</div>
<div style="top:887px;height:14px;line-height:14px;font-size:12px;color:#000;white-space:pre;left:1862.95px;transform-origin:100% 50%;transform:scaleX(0.9050);">-1.01</div>
<div style="left:24px;top:904px;width:1871px;height:20px;background:#fff;"></div>
<div style="left:24px;top:923px;width:1871px;height:1px;background:#d4d4d4;"></div>
<div style="left:209px;top:904px;width:1px;height:19px;background:#c4c4c4;"></div>
<div style="left:529px;top:904px;width:1px;height:19px;background:#c4c4c4;"></div>
<div style="left:659px;top:904px;width:1px;height:19px;background:#c4c4c4;"></div>
<div style="left:760px;top:904px;width:1px;height:19px;background:#c4c4c4;"></div>
<div style="left:890px;top:904px;width:1px;height:19px;background:#c4c4c4;"></div>
<div style="left:1035px;top:904px;width:1px;height:19px;background:#c4c4c4;"></div>
<div style="left:1180px;top:904px;width:1px;height:19px;background:#c4c4c4;"></div>
<div style="left:1325px;top:904px;width:1px;height:19px;background:#c4c4c4;"></div>
<div style="left:1470px;top:904px;width:1px;height:19px;background:#c4c4c4;"></div>
<div style="left:1615px;top:904px;width:1px;height:19px;background:#c4c4c4;"></div>
<div style="left:1731px;top:904px;width:1px;height:19px;background:#c4c4c4;"></div>
<svg style="left:26px;top:906px" width="15" height="16" viewBox="0 0 15 16"><path d="M1 1 H7.5 L11 4.5 V13 H1 Z" fill="#fdfdfd" stroke="#3a3a3a" stroke-width="1.2"/><path d="M7.5 1 V4.5 H11" fill="none" stroke="#3a3a3a" stroke-width=".9"/><circle cx="10.5" cy="11.8" r="3" fill="#e07820" stroke="#8a3c08" stroke-width=".8"/></svg>
<div style="top:907px;height:14px;line-height:14px;font-size:12px;color:#000;white-space:pre;left:48.60px;transform-origin:0 50%;transform:scaleX(0.8990);">41914901</div>
<div style="top:907px;height:14px;line-height:14px;font-size:12px;color:#000;white-space:pre;left:433.87px;transform-origin:100% 50%;transform:scaleX(0.9050);">2011.08.18 04:44</div>
<div style="top:907px;height:14px;line-height:14px;font-size:12px;color:#000;white-space:pre;left:638.39px;transform-origin:100% 50%;transform:scaleX(0.9050);">sell</div>
<div style="top:907px;height:14px;line-height:14px;font-size:12px;color:#000;white-space:pre;left:734.04px;transform-origin:100% 50%;transform:scaleX(0.9050);">0.03</div>
<div style="top:907px;height:14px;line-height:14px;font-size:12px;color:#000;white-space:pre;left:840.71px;transform-origin:100% 50%;transform:scaleX(0.9050);">eurusdm</div>
<div style="top:907px;height:14px;line-height:14px;font-size:12px;color:#000;white-space:pre;left:989.02px;transform-origin:100% 50%;transform:scaleX(0.9050);">1.43843</div>
<div style="top:907px;height:14px;line-height:14px;font-size:12px;color:#000;white-space:pre;left:1134.02px;transform-origin:100% 50%;transform:scaleX(0.9050);">0.00000</div>
<div style="top:907px;height:14px;line-height:14px;font-size:12px;color:#000;white-space:pre;left:1279.02px;transform-origin:100% 50%;transform:scaleX(0.9050);">0.00000</div>
<div style="top:907px;height:14px;line-height:14px;font-size:12px;color:#000;white-space:pre;left:1424.02px;transform-origin:100% 50%;transform:scaleX(0.9050);">1.44039</div>
<div style="top:907px;height:14px;line-height:14px;font-size:12px;color:#000;white-space:pre;left:1589.04px;transform-origin:100% 50%;transform:scaleX(0.9050);">0.00</div>
<div style="top:907px;height:14px;line-height:14px;font-size:12px;color:#000;white-space:pre;left:1705.04px;transform-origin:100% 50%;transform:scaleX(0.9050);">0.00</div>
<div style="top:907px;height:14px;line-height:14px;font-size:12px;color:#000;white-space:pre;left:1862.95px;transform-origin:100% 50%;transform:scaleX(0.9050);">-0.59</div>
<div style="left:24px;top:924px;width:1871px;height:20px;background:#ebebeb;"></div>
<div style="left:24px;top:943px;width:1871px;height:1px;background:#d4d4d4;"></div>
<div style="left:209px;top:924px;width:1px;height:19px;background:#c4c4c4;"></div>
<div style="left:529px;top:924px;width:1px;height:19px;background:#c4c4c4;"></div>
<div style="left:659px;top:924px;width:1px;height:19px;background:#c4c4c4;"></div>
<div style="left:760px;top:924px;width:1px;height:19px;background:#c4c4c4;"></div>
<div style="left:890px;top:924px;width:1px;height:19px;background:#c4c4c4;"></div>
<div style="left:1035px;top:924px;width:1px;height:19px;background:#c4c4c4;"></div>
<div style="left:1180px;top:924px;width:1px;height:19px;background:#c4c4c4;"></div>
<div style="left:1325px;top:924px;width:1px;height:19px;background:#c4c4c4;"></div>
<div style="left:1470px;top:924px;width:1px;height:19px;background:#c4c4c4;"></div>
<div style="left:1615px;top:924px;width:1px;height:19px;background:#c4c4c4;"></div>
<div style="left:1731px;top:924px;width:1px;height:19px;background:#c4c4c4;"></div>
<svg style="left:26px;top:926px" width="15" height="16" viewBox="0 0 15 16"><path d="M1 1 H7.5 L11 4.5 V13 H1 Z" fill="#fdfdfd" stroke="#3a3a3a" stroke-width="1.2"/><path d="M7.5 1 V4.5 H11" fill="none" stroke="#3a3a3a" stroke-width=".9"/><circle cx="10.5" cy="11.8" r="3" fill="#e07820" stroke="#8a3c08" stroke-width=".8"/></svg>
<div style="top:927px;height:14px;line-height:14px;font-size:12px;color:#000;white-space:pre;left:48.60px;transform-origin:0 50%;transform:scaleX(0.8990);">41915564</div>
<div style="top:927px;height:14px;line-height:14px;font-size:12px;color:#000;white-space:pre;left:433.87px;transform-origin:100% 50%;transform:scaleX(0.9050);">2011.08.18 04:44</div>
<div style="top:927px;height:14px;line-height:14px;font-size:12px;color:#000;white-space:pre;left:638.39px;transform-origin:100% 50%;transform:scaleX(0.9050);">sell</div>
<div style="top:927px;height:14px;line-height:14px;font-size:12px;color:#000;white-space:pre;left:734.04px;transform-origin:100% 50%;transform:scaleX(0.9050);">0.10</div>
<div style="top:927px;height:14px;line-height:14px;font-size:12px;color:#000;white-space:pre;left:840.71px;transform-origin:100% 50%;transform:scaleX(0.9050);">eurusdm</div>
<div style="top:927px;height:14px;line-height:14px;font-size:12px;color:#000;white-space:pre;left:989.02px;transform-origin:100% 50%;transform:scaleX(0.9050);">1.43828</div>
<div style="top:927px;height:14px;line-height:14px;font-size:12px;color:#000;white-space:pre;left:1134.02px;transform-origin:100% 50%;transform:scaleX(0.9050);">0.00000</div>
<div style="top:927px;height:14px;line-height:14px;font-size:12px;color:#000;white-space:pre;left:1279.02px;transform-origin:100% 50%;transform:scaleX(0.9050);">0.00000</div>
<div style="top:927px;height:14px;line-height:14px;font-size:12px;color:#000;white-space:pre;left:1424.02px;transform-origin:100% 50%;transform:scaleX(0.9050);">1.44039</div>
<div style="top:927px;height:14px;line-height:14px;font-size:12px;color:#000;white-space:pre;left:1589.04px;transform-origin:100% 50%;transform:scaleX(0.9050);">0.00</div>
<div style="top:927px;height:14px;line-height:14px;font-size:12px;color:#000;white-space:pre;left:1705.04px;transform-origin:100% 50%;transform:scaleX(0.9050);">0.00</div>
<div style="top:927px;height:14px;line-height:14px;font-size:12px;color:#000;white-space:pre;left:1863.84px;transform-origin:100% 50%;transform:scaleX(0.9050);">-2.11</div>
<div style="left:24px;top:944px;width:1871px;height:20px;background:#fff;"></div>
<div style="left:24px;top:963px;width:1871px;height:1px;background:#d4d4d4;"></div>
<div style="left:209px;top:944px;width:1px;height:19px;background:#c4c4c4;"></div>
<div style="left:529px;top:944px;width:1px;height:19px;background:#c4c4c4;"></div>
<div style="left:659px;top:944px;width:1px;height:19px;background:#c4c4c4;"></div>
<div style="left:760px;top:944px;width:1px;height:19px;background:#c4c4c4;"></div>
<div style="left:890px;top:944px;width:1px;height:19px;background:#c4c4c4;"></div>
<div style="left:1035px;top:944px;width:1px;height:19px;background:#c4c4c4;"></div>
<div style="left:1180px;top:944px;width:1px;height:19px;background:#c4c4c4;"></div>
<div style="left:1325px;top:944px;width:1px;height:19px;background:#c4c4c4;"></div>
<div style="left:1470px;top:944px;width:1px;height:19px;background:#c4c4c4;"></div>
<div style="left:1615px;top:944px;width:1px;height:19px;background:#c4c4c4;"></div>
<div style="left:1731px;top:944px;width:1px;height:19px;background:#c4c4c4;"></div>
<svg style="left:26px;top:946px" width="15" height="16" viewBox="0 0 15 16"><path d="M1 1 H7.5 L11 4.5 V13 H1 Z" fill="#fdfdfd" stroke="#3a3a3a" stroke-width="1.2"/><path d="M7.5 1 V4.5 H11" fill="none" stroke="#3a3a3a" stroke-width=".9"/><circle cx="10.5" cy="11.8" r="3" fill="#e07820" stroke="#8a3c08" stroke-width=".8"/></svg>
<div style="top:947px;height:14px;line-height:14px;font-size:12px;color:#000;white-space:pre;left:48.60px;transform-origin:0 50%;transform:scaleX(0.8990);">41915561</div>
<div style="top:947px;height:14px;line-height:14px;font-size:12px;color:#000;white-space:pre;left:433.87px;transform-origin:100% 50%;transform:scaleX(0.9050);">2011.08.18 05:37</div>
<div style="top:947px;height:14px;line-height:14px;font-size:12px;color:#000;white-space:pre;left:638.39px;transform-origin:100% 50%;transform:scaleX(0.9050);">sell</div>
<div style="top:947px;height:14px;line-height:14px;font-size:12px;color:#000;white-space:pre;left:734.04px;transform-origin:100% 50%;transform:scaleX(0.9050);">0.05</div>
<div style="top:947px;height:14px;line-height:14px;font-size:12px;color:#000;white-space:pre;left:840.71px;transform-origin:100% 50%;transform:scaleX(0.9050);">eurusdm</div>
<div style="top:947px;height:14px;line-height:14px;font-size:12px;color:#000;white-space:pre;left:989.02px;transform-origin:100% 50%;transform:scaleX(0.9050);">1.44193</div>
<div style="top:947px;height:14px;line-height:14px;font-size:12px;color:#000;white-space:pre;left:1134.02px;transform-origin:100% 50%;transform:scaleX(0.9050);">0.00000</div>
<div style="top:947px;height:14px;line-height:14px;font-size:12px;color:#000;white-space:pre;left:1279.02px;transform-origin:100% 50%;transform:scaleX(0.9050);">0.00000</div>
<div style="top:947px;height:14px;line-height:14px;font-size:12px;color:#000;white-space:pre;left:1424.02px;transform-origin:100% 50%;transform:scaleX(0.9050);">1.44039</div>
<div style="top:947px;height:14px;line-height:14px;font-size:12px;color:#000;white-space:pre;left:1589.04px;transform-origin:100% 50%;transform:scaleX(0.9050);">0.00</div>
<div style="top:947px;height:14px;line-height:14px;font-size:12px;color:#000;white-space:pre;left:1705.04px;transform-origin:100% 50%;transform:scaleX(0.9050);">0.00</div>
<div style="top:947px;height:14px;line-height:14px;font-size:12px;color:#000;white-space:pre;left:1866.94px;transform-origin:100% 50%;transform:scaleX(0.9050);">0.77</div>
<div style="left:24px;top:964px;width:1871px;height:20px;background:#ebebeb;"></div>
<div style="left:24px;top:983px;width:1871px;height:1px;background:#d4d4d4;"></div>
<div style="left:209px;top:964px;width:1px;height:19px;background:#c4c4c4;"></div>
<div style="left:529px;top:964px;width:1px;height:19px;background:#c4c4c4;"></div>
<div style="left:659px;top:964px;width:1px;height:19px;background:#c4c4c4;"></div>
<div style="left:760px;top:964px;width:1px;height:19px;background:#c4c4c4;"></div>
<div style="left:890px;top:964px;width:1px;height:19px;background:#c4c4c4;"></div>
<div style="left:1035px;top:964px;width:1px;height:19px;background:#c4c4c4;"></div>
<div style="left:1180px;top:964px;width:1px;height:19px;background:#c4c4c4;"></div>
<div style="left:1325px;top:964px;width:1px;height:19px;background:#c4c4c4;"></div>
<div style="left:1470px;top:964px;width:1px;height:19px;background:#c4c4c4;"></div>
<div style="left:1615px;top:964px;width:1px;height:19px;background:#c4c4c4;"></div>
<div style="left:1731px;top:964px;width:1px;height:19px;background:#c4c4c4;"></div>
<svg style="left:26px;top:966px" width="15" height="16" viewBox="0 0 15 16"><path d="M1 1 H7.5 L11 4.5 V13 H1 Z" fill="#fdfdfd" stroke="#3a3a3a" stroke-width="1.2"/><path d="M7.5 1 V4.5 H11" fill="none" stroke="#3a3a3a" stroke-width=".9"/><circle cx="10.5" cy="11.8" r="3" fill="#2f8ee8" stroke="#0a4c98" stroke-width=".8"/></svg>
<div style="top:967px;height:14px;line-height:14px;font-size:12px;color:#000;white-space:pre;left:48.60px;transform-origin:0 50%;transform:scaleX(0.8990);">41914818</div>
<div style="top:967px;height:14px;line-height:14px;font-size:12px;color:#000;white-space:pre;left:433.87px;transform-origin:100% 50%;transform:scaleX(0.9050);">2011.08.18 07:03</div>
<div style="top:967px;height:14px;line-height:14px;font-size:12px;color:#000;white-space:pre;left:637.05px;transform-origin:100% 50%;transform:scaleX(0.9050);">buy</div>
<div style="top:967px;height:14px;line-height:14px;font-size:12px;color:#000;white-space:pre;left:734.04px;transform-origin:100% 50%;transform:scaleX(0.9050);">0.03</div>
<div style="top:967px;height:14px;line-height:14px;font-size:12px;color:#000;white-space:pre;left:838.03px;transform-origin:100% 50%;transform:scaleX(0.9050);">gbpusdm</div>
<div style="top:967px;height:14px;line-height:14px;font-size:12px;color:#000;white-space:pre;left:989.02px;transform-origin:100% 50%;transform:scaleX(0.9050);">1.65020</div>
<div style="top:967px;height:14px;line-height:14px;font-size:12px;color:#000;white-space:pre;left:1134.02px;transform-origin:100% 50%;transform:scaleX(0.9050);">0.00000</div>
<div style="top:967px;height:14px;line-height:14px;font-size:12px;color:#000;white-space:pre;left:1279.02px;transform-origin:100% 50%;transform:scaleX(0.9050);">0.00000</div>
<div style="top:967px;height:14px;line-height:14px;font-size:12px;color:#000;white-space:pre;left:1424.02px;transform-origin:100% 50%;transform:scaleX(0.9050);">1.65104</div>
<div style="top:967px;height:14px;line-height:14px;font-size:12px;color:#000;white-space:pre;left:1589.04px;transform-origin:100% 50%;transform:scaleX(0.9050);">0.00</div>
<div style="top:967px;height:14px;line-height:14px;font-size:12px;color:#000;white-space:pre;left:1705.04px;transform-origin:100% 50%;transform:scaleX(0.9050);">0.00</div>
<div style="top:967px;height:14px;line-height:14px;font-size:12px;color:#000;white-space:pre;left:1866.94px;transform-origin:100% 50%;transform:scaleX(0.9050);">0.25</div>
<div style="left:24px;top:984px;width:1871px;height:20px;background:#c8c8c8;"></div>
<svg style="left:26px;top:986px" width="15" height="16" viewBox="0 0 15 16"><rect x="1" y="1" width="12" height="13" rx="1.5" fill="#f6f6f6" stroke="#7a7a7a"/><path d="M7 4 V8 M4.5 8 H9.5 L7 11.5 Z" fill="#e06010" stroke="#e06010" stroke-width="1.4"/></svg>
<div style="top:987px;height:14px;line-height:14px;font-size:12px;color:#000;white-space:pre;font-weight:bold;left:48.60px;transform-origin:0 50%;transform:scaleX(0.9019);">Zùstatek: 2 041.80  Majetek: 2 034.81  Marže: 536.83  Dostupná marže: 1 497.98  Výška marže: 379.04%</div>
<div style="top:987px;height:14px;line-height:14px;font-size:12px;color:#000;white-space:pre;font-weight:bold;left:1862.95px;transform-origin:100% 50%;transform:scaleX(0.9140);">-6.99</div>
<div style="left:24px;top:1004px;width:1871px;height:20px;background:#ebebeb;"></div>
<div style="left:24px;top:1023px;width:1871px;height:1px;background:#d4d4d4;"></div>
<div style="left:209px;top:1004px;width:1px;height:19px;background:#c4c4c4;"></div>
<div style="left:529px;top:1004px;width:1px;height:19px;background:#c4c4c4;"></div>
<div style="left:659px;top:1004px;width:1px;height:19px;background:#c4c4c4;"></div>
<div style="left:760px;top:1004px;width:1px;height:19px;background:#c4c4c4;"></div>
<div style="left:890px;top:1004px;width:1px;height:19px;background:#c4c4c4;"></div>
<div style="left:1035px;top:1004px;width:1px;height:19px;background:#c4c4c4;"></div>
<div style="left:1180px;top:1004px;width:1px;height:19px;background:#c4c4c4;"></div>
<div style="left:1325px;top:1004px;width:1px;height:19px;background:#c4c4c4;"></div>
<div style="left:1470px;top:1004px;width:1px;height:19px;background:#c4c4c4;"></div>
<div style="left:1731px;top:1004px;width:1px;height:19px;background:#c4c4c4;"></div>
<svg style="left:26px;top:1006px" width="15" height="16" viewBox="0 0 15 16"><path d="M1 1 H7.5 L11 4.5 V13 H1 Z" fill="#fdfdfd" stroke="#3a3a3a" stroke-width="1.2"/><path d="M7.5 1 V4.5 H11" fill="none" stroke="#3a3a3a" stroke-width=".9"/><circle cx="10.5" cy="11.8" r="3" fill="#2f8ee8" stroke="#0a4c98" stroke-width=".8"/></svg>
<div style="top:1007px;height:14px;line-height:14px;font-size:12px;color:#000;white-space:pre;left:48.60px;transform-origin:0 50%;transform:scaleX(0.8990);">41914759</div>
<div style="top:1007px;height:14px;line-height:14px;font-size:12px;color:#000;white-space:pre;left:433.87px;transform-origin:100% 50%;transform:scaleX(0.9050);">2011.08.17 21:45</div>
<div style="top:1007px;height:14px;line-height:14px;font-size:12px;color:#000;white-space:pre;left:611.04px;transform-origin:100% 50%;transform:scaleX(0.9050);">buy stop</div>
<div style="top:1007px;height:14px;line-height:14px;font-size:12px;color:#000;white-space:pre;left:734.04px;transform-origin:100% 50%;transform:scaleX(0.9050);">0.05</div>
<div style="top:1007px;height:14px;line-height:14px;font-size:12px;color:#000;white-space:pre;left:838.03px;transform-origin:100% 50%;transform:scaleX(0.9050);">gbpusdm</div>
<div style="top:1007px;height:14px;line-height:14px;font-size:12px;color:#000;white-space:pre;left:989.02px;transform-origin:100% 50%;transform:scaleX(0.9050);">1.65515</div>
<div style="top:1007px;height:14px;line-height:14px;font-size:12px;color:#000;white-space:pre;left:1134.02px;transform-origin:100% 50%;transform:scaleX(0.9050);">0.00000</div>
<div style="top:1007px;height:14px;line-height:14px;font-size:12px;color:#000;white-space:pre;left:1279.02px;transform-origin:100% 50%;transform:scaleX(0.9050);">0.00000</div>
<div style="top:1007px;height:14px;line-height:14px;font-size:12px;color:#000;white-space:pre;left:1424.02px;transform-origin:100% 50%;transform:scaleX(0.9050);">1.65138</div>
<div style="left:24px;top:1024px;width:1871px;height:20px;background:#fff;"></div>
<div style="left:24px;top:1043px;width:1871px;height:1px;background:#d4d4d4;"></div>
<div style="left:209px;top:1024px;width:1px;height:19px;background:#c4c4c4;"></div>
<div style="left:529px;top:1024px;width:1px;height:19px;background:#c4c4c4;"></div>
<div style="left:659px;top:1024px;width:1px;height:19px;background:#c4c4c4;"></div>
<div style="left:760px;top:1024px;width:1px;height:19px;background:#c4c4c4;"></div>
<div style="left:890px;top:1024px;width:1px;height:19px;background:#c4c4c4;"></div>
<div style="left:1035px;top:1024px;width:1px;height:19px;background:#c4c4c4;"></div>
<div style="left:1180px;top:1024px;width:1px;height:19px;background:#c4c4c4;"></div>
<div style="left:1325px;top:1024px;width:1px;height:19px;background:#c4c4c4;"></div>
<div style="left:1470px;top:1024px;width:1px;height:19px;background:#c4c4c4;"></div>
<div style="left:1731px;top:1024px;width:1px;height:19px;background:#c4c4c4;"></div>
<svg style="left:26px;top:1026px" width="15" height="16" viewBox="0 0 15 16"><path d="M1 1 H7.5 L11 4.5 V13 H1 Z" fill="#fdfdfd" stroke="#3a3a3a" stroke-width="1.2"/><path d="M7.5 1 V4.5 H11" fill="none" stroke="#3a3a3a" stroke-width=".9"/><circle cx="10.5" cy="11.8" r="3" fill="#2f8ee8" stroke="#0a4c98" stroke-width=".8"/></svg>
<div style="top:1027px;height:14px;line-height:14px;font-size:12px;color:#000;white-space:pre;left:48.60px;transform-origin:0 50%;transform:scaleX(0.8990);">41914763</div>
<div style="top:1027px;height:14px;line-height:14px;font-size:12px;color:#000;white-space:pre;left:433.87px;transform-origin:100% 50%;transform:scaleX(0.9050);">2011.08.17 21:45</div>
<div style="top:1027px;height:14px;line-height:14px;font-size:12px;color:#000;white-space:pre;left:611.04px;transform-origin:100% 50%;transform:scaleX(0.9050);">buy stop</div>
<div style="top:1027px;height:14px;line-height:14px;font-size:12px;color:#000;white-space:pre;left:734.04px;transform-origin:100% 50%;transform:scaleX(0.9050);">0.20</div>
<div style="top:1027px;height:14px;line-height:14px;font-size:12px;color:#000;white-space:pre;left:838.03px;transform-origin:100% 50%;transform:scaleX(0.9050);">gbpusdm</div>
<div style="top:1027px;height:14px;line-height:14px;font-size:12px;color:#000;white-space:pre;left:989.02px;transform-origin:100% 50%;transform:scaleX(0.9050);">1.66955</div>
<div style="top:1027px;height:14px;line-height:14px;font-size:12px;color:#000;white-space:pre;left:1134.02px;transform-origin:100% 50%;transform:scaleX(0.9050);">0.00000</div>
<div style="top:1027px;height:14px;line-height:14px;font-size:12px;color:#000;white-space:pre;left:1279.02px;transform-origin:100% 50%;transform:scaleX(0.9050);">0.00000</div>
<div style="top:1027px;height:14px;line-height:14px;font-size:12px;color:#000;white-space:pre;left:1424.02px;transform-origin:100% 50%;transform:scaleX(0.9050);">1.65138</div>
<div style="left:24px;top:1043px;width:1901px;height:1px;background:#000;"></div>
<div style="left:1907px;top:799px;width:18px;height:244px;background:#f0f0f0;"></div>
<svg style="left:1912px;top:805px" width="8" height="5" viewBox="0 0 8 5"><path d="M0 4.5 L4 0.5 L8 4.5 Z" fill="#404040"/></svg>
<svg style="left:1912px;top:1031px" width="8" height="5" viewBox="0 0 8 5"><path d="M0 0.5 L4 4.5 L8 0.5 Z" fill="#404040"/></svg>
<div style="left:1908px;top:842px;width:15px;height:15px;background:linear-gradient(90deg,#f6f6f6 40%,#d8d8d8);border:1px solid #989898;border-radius:2px"></div>
<div style="left:26px;top:1044px;width:58px;height:17px;background:#fff;border:1px solid #000;border-top:none;border-bottom:2px solid #000;border-right:2px solid #000"></div>
<div style="top:1046px;height:13px;line-height:13px;font-size:11px;color:#000;white-space:pre;left:35.60px;transform-origin:0 50%;transform:scaleX(0.9525);">Obchod</div>
<div style="top:1047px;height:13px;line-height:13px;font-size:11px;color:#808080;white-space:pre;left:92.00px;transform-origin:0 50%;">Historie úètu</div>
<div style="left:164px;top:1047px;width:1px;height:12px;background:#555;"></div>
<div style="top:1047px;height:13px;line-height:13px;font-size:11px;color:#808080;white-space:pre;left:173.50px;transform-origin:0 50%;transform:scaleX(1.0113);">Zprávy</div>
<div style="left:218px;top:1047px;width:1px;height:12px;background:#555;"></div>
<div style="top:1047px;height:13px;line-height:13px;font-size:11px;color:#808080;white-space:pre;left:227.50px;transform-origin:0 50%;transform:scaleX(0.9642);">Alarmy</div>
<div style="left:271px;top:1047px;width:1px;height:12px;background:#555;"></div>
<div style="top:1047px;height:13px;line-height:13px;font-size:11px;color:#808080;white-space:pre;left:280.00px;transform-origin:0 50%;transform:scaleX(0.9669);">Poštovní schránka</div>
<div style="left:378px;top:1047px;width:1px;height:12px;background:#555;"></div>
<div style="top:1047px;height:13px;line-height:13px;font-size:11px;color:#808080;white-space:pre;left:387.00px;transform-origin:0 50%;transform:scaleX(1.0107);">Strategie</div>
<div style="left:442px;top:1047px;width:1px;height:12px;background:#555;"></div>
<div style="top:1047px;height:13px;line-height:13px;font-size:11px;color:#808080;white-space:pre;left:451.00px;transform-origin:0 50%;transform:scaleX(0.9221);">Deník</div>
<div style="left:488px;top:1047px;width:1px;height:12px;background:#555;"></div>
<div style="left:8px;top:1066px;width:1920px;height:1px;background:#a0a0a0;"></div>
<div style="left:8px;top:1067px;width:1920px;height:1px;background:#fff;"></div>
<div style="top:1073px;height:14px;line-height:14px;font-size:12px;color:#000;white-space:pre;left:10.30px;transform-origin:0 50%;transform:scaleX(0.9322);">Pro pomoc, stisknìte F1</div>
<div style="left:1201px;top:1071px;width:1px;height:16px;background:#a8a8a8;"></div>
<div style="left:1318px;top:1071px;width:1px;height:16px;background:#a8a8a8;"></div>
<div style="left:1420px;top:1071px;width:1px;height:16px;background:#a8a8a8;"></div>
<div style="left:1491px;top:1071px;width:1px;height:16px;background:#a8a8a8;"></div>
<div style="left:1562px;top:1071px;width:1px;height:16px;background:#a8a8a8;"></div>
<div style="left:1630px;top:1071px;width:1px;height:16px;background:#a8a8a8;"></div>
<div style="left:1700px;top:1071px;width:1px;height:16px;background:#a8a8a8;"></div>
<div style="left:1766px;top:1071px;width:1px;height:16px;background:#a8a8a8;"></div>
<div style="top:1073px;height:14px;line-height:14px;font-size:12px;color:#000;white-space:pre;left:1208.00px;transform-origin:0 50%;">Default</div>
<div style="left:1772.0px;top:1073px;width:2px;height:11px;background:#a04808"></div>
<div style="left:1775.3px;top:1073px;width:2px;height:11px;background:#a04808"></div>
<div style="left:1778.6px;top:1073px;width:2px;height:11px;background:#a04808"></div>
<div style="left:1781.9px;top:1073px;width:2px;height:11px;background:#a04808"></div>
<div style="left:1785.2px;top:1073px;width:2px;height:11px;background:#a04808"></div>
<div style="left:1788.5px;top:1073px;width:2px;height:11px;background:#a04808"></div>
<div style="left:1791.8px;top:1073px;width:2px;height:11px;background:#a04808"></div>
<div style="left:1781.9px;top:1077px;width:2px;height:2px;background:#f0f0f0"></div>
<div style="left:1785.2px;top:1075px;width:2px;height:2px;background:#f0f0f0"></div>
<div style="left:1788.5px;top:1077px;width:2px;height:2px;background:#f0f0f0"></div>
<div style="left:1791.8px;top:1075px;width:2px;height:2px;background:#f0f0f0"></div>
<div style="top:1073px;height:14px;line-height:14px;font-size:12px;color:#000;white-space:pre;left:1834.00px;transform-origin:0 50%;transform:scaleX(0.9430);">12319/7 kb</div>
<div style="left:0px;top:1088px;width:1936px;height:8px;background:#000;"></div>
<div style="left:1928px;top:0px;width:8px;height:1096px;background:#000;"></div>
<div style="left:1712px;top:18px;width:224px;height:12px;background:#000;"></div>
<div style="left:0px;top:0px;width:1936px;height:18px;background:#000;"></div>
</body></html>
